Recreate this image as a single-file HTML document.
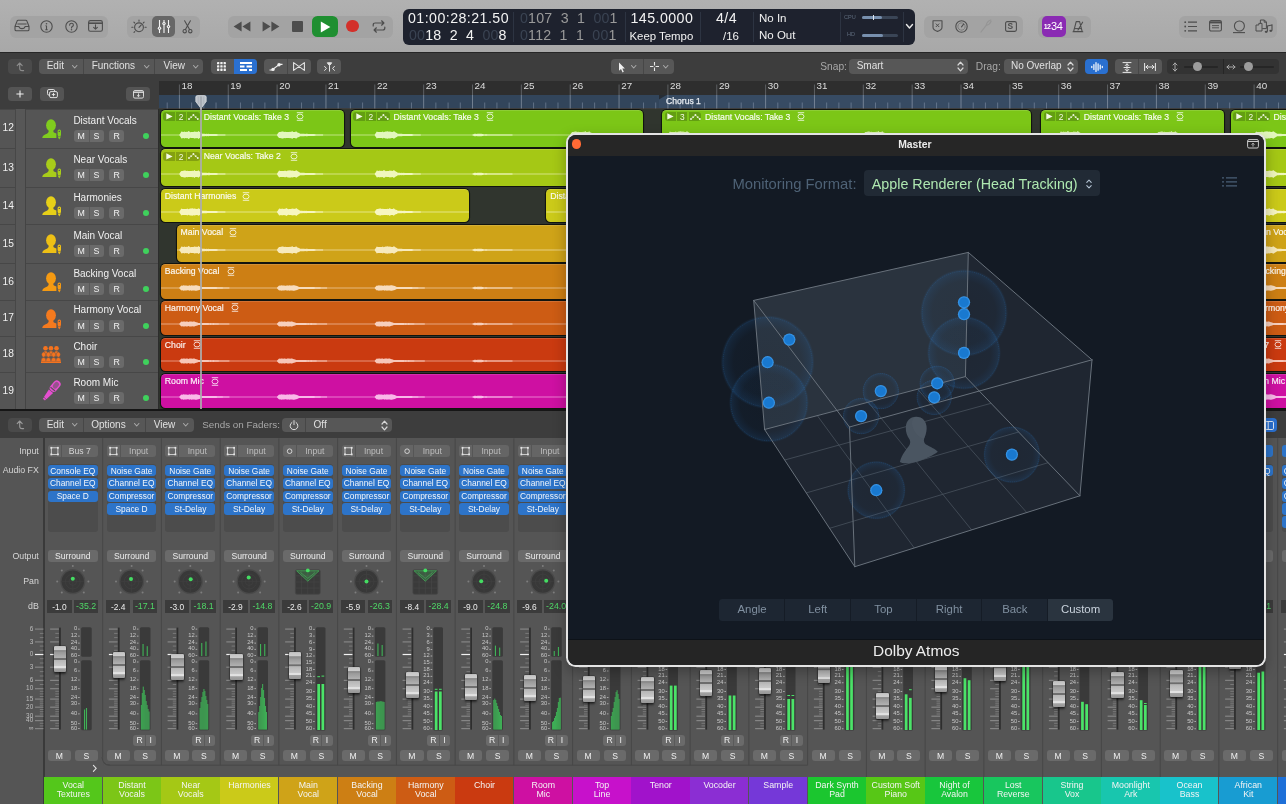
<!DOCTYPE html>
<html lang="en"><head><meta charset="utf-8"><title>Logic Pro - Dolby Atmos</title>
<style>
html,body{margin:0;padding:0;background:#555;}
body{width:1286px;height:804px;overflow:hidden;font-family:"Liberation Sans",sans-serif;color:#e6e6e6;}
#app{position:relative;width:1286px;height:804px;overflow:hidden;background:#555;}
.abs,.abs *{position:absolute;box-sizing:border-box;}
.abs{left:0;top:0;}
svg{position:absolute;overflow:visible;}
.t{white-space:nowrap;line-height:1;}
/* top bar */
#topbar{left:0;top:0;width:1286px;height:52px;background:linear-gradient(#b1b1b1,#a8a8a8);}
.grp{background:#a1a1a1;border-radius:6px;height:22px;top:15px;}
#lcd{left:403px;top:9px;width:512px;height:35.5px;background:#1e222e;border-radius:6px;color:#f2f2f2;}
#lcd .d{top:3px;width:1px;height:30px;background:#2d3442;}
#lcd .big{font-size:14.2px;letter-spacing:.45px;}
#lcd .dim{color:#3a4352;}
#lcd .gr{color:#9a9a9a;}
/* bar2 */
#bar2{left:0;top:52px;width:1286px;height:29px;background:#3d3d3d;border-top:1px solid #262626;}
.btn{background:#555;border-radius:4px;height:15.5px;color:#e0e0e0;font-size:10.2px;}
.btn .t{top:2.6px;}
.chev{width:6px;height:4px;}
.abs .t span{position:static;}
#app{will-change:transform;}
.kn{width:12.4px;height:26.3px;border-radius:1.2px;background:linear-gradient(#b4b4b4 0,#c6c6c6 3%,#cdcdcd 15%,#8f8f8f 17%,#8f8f8f 23%,#9a9a9a 25%,#b0b0b0 45%,#6e6e6e 47%,#6e6e6e 52%,#b6b6b6 54%,#cacaca 77%,#e2e2e2 79%,#e2e2e2 85%,#a4a4a4 87%,#969696 100%);box-shadow:0 1.5px 2.5px rgba(0,0,0,.55),0 0 0 .5px rgba(40,40,40,.6);}
.ml{width:20px;text-align:right;font-size:5.8px;color:#c8c8c8;}
.fx{width:49.8px;height:11.4px;background:#2d74c9;border-radius:3px;}
.fx .t{left:0;width:49.8px;text-align:center;top:1.6px;font-size:8.4px;color:#f2f6fb;}
.fx.ou{height:12.2px;background:#6a6a6a;}
.fx.ou .t{top:1.9px;font-size:8.6px;color:#ececec;}
.db{top:599.8px;width:24.5px;height:13.2px;background:#3b3b3b;}
.db .t{left:0;width:24.5px;text-align:center;top:2.9px;font-size:8.4px;color:#ececec;}
.db.g .t{color:#4fd867;font-size:8.8px;top:2.7px;letter-spacing:0;}

</style></head>
<body>
<div id="app">
<div class="abs" id="topbar">
<div class="grp" style="left:9.5px;top:15.5px;width:98.5px;height:22px;top:15.5px;background:#a3a3a3;"></div>
<svg style="left:14px;top:19px;" width="16" height="13" viewBox="0 0 16 13"><path d="M1 7.5 L3 2.2 Q3.3 1.2 4.3 1.2 H11.7 Q12.7 1.2 13 2.2 L15 7.5 V10.5 Q15 11.8 13.7 11.8 H2.3 Q1 11.8 1 10.5 Z M1 7.5 H5 Q5.3 9.6 8 9.6 Q10.7 9.6 11 7.5 H15 M3.4 5 H12.6" fill="none" stroke="#4d4d4d" stroke-width="1.1" stroke-linejoin="round"/></svg>
<svg style="left:40px;top:19.5px;" width="13" height="13" viewBox="0 0 13 13"><circle cx="6.5" cy="6.5" r="5.7" fill="none" stroke="#4d4d4d" stroke-width="1.1"/><path d="M6.5 5.8 V9.6 M5.3 9.7 H7.7 M5.5 5.8 H6.5" stroke="#4d4d4d" stroke-width="1.1" fill="none"/><circle cx="6.5" cy="3.7" r=".8" fill="#4d4d4d"/></svg>
<svg style="left:64.5px;top:19.5px;" width="13" height="13" viewBox="0 0 13 13"><circle cx="6.5" cy="6.5" r="5.7" fill="none" stroke="#4d4d4d" stroke-width="1.1"/><path d="M4.6 5.1 Q4.7 3.3 6.5 3.3 Q8.4 3.3 8.4 4.9 Q8.4 5.9 7.3 6.5 Q6.5 7 6.5 8" stroke="#4d4d4d" stroke-width="1.1" fill="none" stroke-linecap="round"/><circle cx="6.5" cy="9.8" r=".75" fill="#4d4d4d"/></svg>
<svg style="left:88px;top:20px;" width="15" height="12" viewBox="0 0 15 12"><rect x=".6" y=".6" width="13.8" height="10.6" rx="1.8" fill="none" stroke="#4d4d4d" stroke-width="1.1"/><path d="M.6 3.2 H14.4" stroke="#4d4d4d" stroke-width="1.6"/><path d="M7.5 4.8 V9 M5.6 7.3 L7.5 9.2 L9.4 7.3" stroke="#4d4d4d" stroke-width="1.1" fill="none" stroke-linecap="round" stroke-linejoin="round"/></svg>
<div class="grp" style="left:126.5px;top:15.5px;width:73.5px;height:22px;top:15.5px;background:#a3a3a3;"></div>
<svg style="left:131px;top:18.5px;" width="16" height="16" viewBox="0 0 16 16"><circle cx="8" cy="8.3" r="4.4" fill="none" stroke="#4d4d4d" stroke-width="1.1"/><path d="M8 8.3 L10.3 5.8" stroke="#4d4d4d" stroke-width="1.1" stroke-linecap="round"/><path d="M8 1 V2.2 M2.9 3.2 L3.7 4 M13.1 3.2 L12.3 4 M.8 8.3 H2 M14 8.3 H15.2 M3 13.4 L3.8 12.6" stroke="#4d4d4d" stroke-width="1.1" stroke-linecap="round"/></svg>
<div class="" style="left:152px;top:16px;width:23px;height:21px;background:#676767;border-radius:5px;"></div>
<svg style="left:156.5px;top:19px;" width="14" height="15" viewBox="0 0 14 15"><path d="M2.5 1 V14 M7 1 V14 M11.5 1 V14" stroke="#f4f4f4" stroke-width="1.1"/><circle cx="2.5" cy="9.2" r="1.7" fill="#f4f4f4"/><circle cx="7" cy="4.6" r="1.7" fill="#f4f4f4"/><circle cx="11.5" cy="7.6" r="1.7" fill="#f4f4f4"/><circle cx="2.5" cy="9.2" r=".6" fill="#676767"/><circle cx="7" cy="4.6" r=".6" fill="#676767"/><circle cx="11.5" cy="7.6" r=".6" fill="#676767"/></svg>
<svg style="left:182px;top:19.5px;" width="11" height="14" viewBox="0 0 11 14"><path d="M2.6 .8 L7.6 9.6 M8.4 .8 L3.4 9.6" stroke="#4d4d4d" stroke-width="1.1" stroke-linecap="round"/><circle cx="2.7" cy="11.2" r="1.7" fill="none" stroke="#4d4d4d" stroke-width="1.1"/><circle cx="8.3" cy="11.2" r="1.7" fill="none" stroke="#4d4d4d" stroke-width="1.1"/></svg>
<div class="grp" style="left:228px;top:15.5px;width:165px;height:22px;top:15.5px;background:#a3a3a3;"></div>
<svg style="left:232.5px;top:21px;" width="18" height="11" viewBox="0 0 18 11"><path d="M8.6 .6 V10.4 L.6 5.5 Z M17.4 .6 V10.4 L9.4 5.5 Z" fill="#4d4d4d"/></svg>
<svg style="left:261.5px;top:21px;" width="18" height="11" viewBox="0 0 18 11"><path d="M.6 .6 V10.4 L8.6 5.5 Z M9.4 .6 V10.4 L17.4 5.5 Z" fill="#4d4d4d"/></svg>
<div class="" style="left:291.5px;top:21px;width:11px;height:11px;background:#4d4d4d;border-radius:1px;"></div>
<div class="" style="left:311.5px;top:15.7px;width:26.5px;height:21.3px;background:#1f8f31;border-radius:5.5px;"></div>
<svg style="left:320px;top:20.5px;" width="11" height="12" viewBox="0 0 11 12"><path d="M.8 .6 V11.4 L10.4 6 Z" fill="#fff"/></svg>
<div class="" style="left:346px;top:19.8px;width:12.6px;height:12.6px;background:#d3302a;border-radius:7px;"></div>
<svg style="left:372px;top:20px;" width="14" height="13" viewBox="0 0 14 13"><path d="M1.2 6 V5 Q1.2 3 3.2 3 H11.5 M9.6 .8 L11.9 3 L9.6 5.2 M12.8 7 V8 Q12.8 10 10.8 10 H2.5 M4.4 7.8 L2.1 10 L4.4 12.2" fill="none" stroke="#4d4d4d" stroke-width="1.2" stroke-linecap="round" stroke-linejoin="round"/></svg>
<div id="lcd">
<div class="d" style="left:110px"></div>
<div class="d" style="left:222px"></div>
<div class="d" style="left:297px"></div>
<div class="d" style="left:350px"></div>
<div class="d" style="left:437px"></div>
<div class="d" style="left:500px"></div>
<span class="t big" style="left:5px;top:1.7px;">01:00:28:21.50</span><span class="t big" style="left:6px;top:19px;letter-spacing:.2px;"><span class="dim">00</span>18&nbsp;&nbsp;2&nbsp;&nbsp;4&nbsp;&nbsp;<span class="dim">00</span>8</span><span class="t big gr" style="left:117px;top:1.7px;letter-spacing:.2px;"><span class="dim">0</span>107&nbsp;&nbsp;3&nbsp;&nbsp;1&nbsp;&nbsp;<span class="dim">00</span>1</span><span class="t big gr" style="left:117px;top:19px;letter-spacing:.2px;"><span class="dim">0</span>112&nbsp;&nbsp;1&nbsp;&nbsp;1&nbsp;&nbsp;<span class="dim">00</span>1</span><span class="t big" style="left:227.5px;top:1.7px;">145.0000</span><span class="t " style="left:226.5px;top:21.7px;font-size:11.4px;">Keep Tempo</span><span class="t big" style="left:313px;top:1.7px;">4/4</span><span class="t " style="left:320px;top:21.5px;font-size:11.5px;">/16</span><span class="t " style="left:356px;top:4.2px;font-size:11.5px;">No In</span><span class="t " style="left:356px;top:21.2px;font-size:11.5px;">No Out</span><span class="t " style="left:441px;top:5.5px;font-size:5.6px;color:#5d6a7c;">CPU</span><span class="t " style="left:444px;top:23px;font-size:5.6px;color:#5d6a7c;">HD</span><div class="" style="left:459px;top:6.5px;width:36px;height:3px;background:#3a4556;border-radius:1.5px;"></div><div class="" style="left:459px;top:6.5px;width:20px;height:3px;background:#7890ae;border-radius:1.5px;"></div><div class="" style="left:469.5px;top:5.5px;width:1.4px;height:5px;background:#dfe6ee;border-radius:0px;"></div><div class="" style="left:459px;top:24.5px;width:36px;height:3px;background:#3a4556;border-radius:1.5px;"></div><div class="" style="left:459px;top:24.5px;width:21px;height:3px;background:#7890ae;border-radius:1.5px;"></div><svg style="left:503px;top:15px;" width="7" height="5" viewBox="0 0 7 5"><path d="M0.5 0.5 L3.5 4 L6.5 0.5" fill="none" stroke="#e8e8e8" stroke-width="1.4" stroke-linecap="round" stroke-linejoin="round"/></svg>
</div>
<div class="grp" style="left:924px;top:15.5px;width:98.5px;height:22px;top:15.5px;background:#a3a3a3;"></div>
<svg style="left:931.5px;top:20px;" width="11" height="12" viewBox="0 0 11 12"><path d="M1 .8 H10 V7.2 Q10 10 5.5 11.4 Q1 10 1 7.2 Z" fill="none" stroke="#4d4d4d" stroke-width="1.1" stroke-linejoin="round"/><path d="M3.8 3.6 L7.2 7 M7.2 3.6 L3.8 7" stroke="#4d4d4d" stroke-width="1"/></svg>
<svg style="left:954.5px;top:20px;" width="13" height="13" viewBox="0 0 13 13"><circle cx="6.5" cy="6.5" r="5.7" fill="none" stroke="#4d4d4d" stroke-width="1.1"/><circle cx="6.5" cy="6.5" r="3.6" fill="none" stroke="#4d4d4d" stroke-width=".8" stroke-dasharray="1.2 1"/><path d="M6.5 6.8 L8.6 4.2" stroke="#4d4d4d" stroke-width="1.1" stroke-linecap="round"/></svg>
<svg style="left:979.5px;top:19px;" width="12" height="14" viewBox="0 0 12 14"><path d="M1 13 L6.2 6.4 M6.2 6.4 Q6.6 2.6 10.8 1 M6.2 6.4 Q9.8 5.8 11 2.4" fill="none" stroke="#959595" stroke-width="1.2" stroke-linecap="round"/></svg>
<svg style="left:1004.5px;top:20.5px;" width="12" height="11" viewBox="0 0 12 11"><rect x=".6" y=".6" width="10.8" height="9.8" rx="1.6" fill="none" stroke="#4d4d4d" stroke-width="1.1"/></svg>
<span class="t " style="left:1007.6px;top:22.2px;font-size:8.4px;color:#4d4d4d;font-weight:700;">S</span>
<div class="grp" style="left:1038px;top:15.5px;width:53px;height:22px;top:15.5px;background:#a3a3a3;"></div>
<div class="" style="left:1042px;top:16px;width:23.5px;height:21px;background:#8a2bb3;border-radius:5px;"></div>
<span class="t " style="left:1043.8px;top:23px;font-size:7px;color:#fff;font-weight:700;">1</span>
<span class="t " style="left:1047px;top:23px;font-size:7px;color:#fff;font-weight:700;">2</span>
<span class="t " style="left:1051px;top:21px;font-size:11px;color:#fff;letter-spacing:-.3px;">34</span>
<svg style="left:1072px;top:19.5px;" width="13" height="14" viewBox="0 0 13 14"><path d="M4.2 1.6 H7.6 L10.2 11.6 H1.6 Z M1 11.8 H10.8 M6 10 L10.6 2.2" fill="none" stroke="#4d4d4d" stroke-width="1.1" stroke-linejoin="round" stroke-linecap="round"/><path d="M3 8.6 H9" stroke="#4d4d4d" stroke-width="1"/></svg>
<div class="grp" style="left:1178.5px;top:15.5px;width:98.5px;height:22px;top:15.5px;background:#a3a3a3;"></div>
<svg style="left:1184px;top:21px;" width="14" height="11" viewBox="0 0 14 11"><path d="M4 1.2 H13 M4 5.5 H13 M4 9.8 H13" stroke="#4d4d4d" stroke-width="1.2"/><circle cx="1.2" cy="1.2" r=".9" fill="#4d4d4d"/><circle cx="1.2" cy="5.5" r=".9" fill="#4d4d4d"/><circle cx="1.2" cy="9.8" r=".9" fill="#4d4d4d"/></svg>
<svg style="left:1209px;top:20px;" width="13" height="12" viewBox="0 0 13 12"><rect x=".6" y=".6" width="11.8" height="10.4" rx="1.6" fill="none" stroke="#4d4d4d" stroke-width="1.1"/><path d="M.6 2.4 H12.4" stroke="#4d4d4d" stroke-width="2"/><path d="M3 5.6 H10 M3 7.8 H10" stroke="#4d4d4d" stroke-width=".9"/></svg>
<svg style="left:1232px;top:19.5px;" width="14" height="14" viewBox="0 0 14 14"><circle cx="7.4" cy="6" r="5" fill="none" stroke="#4d4d4d" stroke-width="1.1"/><path d="M1 12.6 H13" stroke="#4d4d4d" stroke-width="1.1"/></svg>
<svg style="left:1255px;top:19px;" width="19" height="15" viewBox="0 0 19 15"><path d="M1 6 H3.8 V4.4 H7 V12 H1 Z M5.4 4.2 V1 H9.4 L11.4 3 V9.6 H7.2 M9.2 1 V3.2 H11.4" fill="none" stroke="#4d4d4d" stroke-width="1" stroke-linejoin="round"/><path d="M12.4 12.6 V7 L17 6 V11.6" fill="none" stroke="#4d4d4d" stroke-width="1.1"/><ellipse cx="11.2" cy="12.8" rx="1.5" ry="1.1" fill="#4d4d4d"/><ellipse cx="15.8" cy="11.8" rx="1.5" ry="1.1" fill="#4d4d4d"/></svg>
</div>
<div class="abs" id="bar2">
<div class="btn" style="left:8.2px;top:6.0px;width:23.6px;height:14.8px;background:#4a4a4a;border-radius:4px;height:14.8px;"><svg style="left:7.6px;top:3px;" width="9" height="10" viewBox="0 0 9 10"><path d="M1.2 3.6 L3.7 1 L6.2 3.6 M3.7 1.2 V6.2 Q3.7 8.6 6.1 8.6 H7.6" fill="none" stroke="#8c8c8c" stroke-width="1.1" stroke-linecap="round" stroke-linejoin="round"/></svg></div>
<div class="btn" style="left:39.2px;top:6.0px;width:163.5px;height:14.8px;background:#575757;border-radius:4px;height:14.8px;"><span class="t " style="left:7.5px;top:2.4px;font-size:10px;">Edit</span><svg style="left:33px;top:6px;" width="5.4" height="4" viewBox="0 0 5.4 4"><path d="M0.5 0.5 L2.7 3 L4.9 0.5" fill="none" stroke="#a8a8a8" stroke-width="1.1" stroke-linecap="round" stroke-linejoin="round"/></svg><div class="" style="left:44.3px;top:0px;width:1px;height:14.8px;background:#474747;"></div><span class="t " style="left:52.5px;top:2.4px;font-size:10px;">Functions</span><svg style="left:104.5px;top:6px;" width="5.4" height="4" viewBox="0 0 5.4 4"><path d="M0.5 0.5 L2.7 3 L4.9 0.5" fill="none" stroke="#a8a8a8" stroke-width="1.1" stroke-linecap="round" stroke-linejoin="round"/></svg><div class="" style="left:115.3px;top:0px;width:1px;height:14.8px;background:#474747;"></div><span class="t " style="left:124.3px;top:2.4px;font-size:10px;">View</span><svg style="left:153.5px;top:6px;" width="5.4" height="4" viewBox="0 0 5.4 4"><path d="M0.5 0.5 L2.7 3 L4.9 0.5" fill="none" stroke="#a8a8a8" stroke-width="1.1" stroke-linecap="round" stroke-linejoin="round"/></svg></div>
<div class="btn" style="left:210.5px;top:6.0px;width:46.5px;height:14.8px;background:#575757;border-radius:4px;height:14.8px;"></div>
<div class="" style="left:233.8px;top:6.0px;width:23.2px;height:14.8px;background:#2a70d0;border-radius:0px;border-radius:0 4px 4px 0;"></div>
<svg style="left:217.3px;top:9.3px;" width="9" height="9" viewBox="0 0 9 9"><rect x="0" y="0" width="2.3" height="2.3" rx=".4" fill="#f0f0f0"/><rect x="0" y="3.3" width="2.3" height="2.3" rx=".4" fill="#f0f0f0"/><rect x="0" y="6.6" width="2.3" height="2.3" rx=".4" fill="#f0f0f0"/><rect x="3.3" y="0" width="2.3" height="2.3" rx=".4" fill="#f0f0f0"/><rect x="3.3" y="3.3" width="2.3" height="2.3" rx=".4" fill="#f0f0f0"/><rect x="3.3" y="6.6" width="2.3" height="2.3" rx=".4" fill="#f0f0f0"/><rect x="6.6" y="0" width="2.3" height="2.3" rx=".4" fill="#f0f0f0"/><rect x="6.6" y="3.3" width="2.3" height="2.3" rx=".4" fill="#f0f0f0"/><rect x="6.6" y="6.6" width="2.3" height="2.3" rx=".4" fill="#f0f0f0"/></svg>
<svg style="left:239.5px;top:9.4px;" width="12" height="9" viewBox="0 0 12 9"><path d="M0 1.1 H12 M0 4.5 H4.5 M6.5 4.5 H12 M0 7.9 H7 M9 7.9 H12" stroke="#fff" stroke-width="2"/></svg>
<div class="btn" style="left:264px;top:6.0px;width:46.5px;height:14.8px;background:#575757;border-radius:4px;height:14.8px;"></div>
<div class="" style="left:286.8px;top:6.0px;width:1px;height:14.8px;background:#474747;"></div>
<svg style="left:268.5px;top:9.0px;" width="14" height="10" viewBox="0 0 14 10"><path d="M0.5 8 H3 L10.5 2.4 H13.5" fill="none" stroke="#f0f0f0" stroke-width="1.1"/><circle cx="4" cy="7.4" r="1.7" fill="#f0f0f0"/><circle cx="10" cy="2.8" r="1.7" fill="#f0f0f0"/></svg>
<svg style="left:292.5px;top:9.3px;" width="12" height="9" viewBox="0 0 12 9"><path d="M.6 .6 L11.4 8.4 V.6 L.6 8.4 Z" fill="none" stroke="#e4e4e4" stroke-width="1.1" stroke-linejoin="round"/></svg>
<div class="btn" style="left:317px;top:6.0px;width:24.3px;height:14.8px;background:#575757;border-radius:4px;height:14.8px;"></div>
<svg style="left:323.5px;top:9.0px;" width="11" height="10" viewBox="0 0 11 10"><path d="M5.5 3.4 V9.6 M3.3 .8 H7.7 L5.5 3.6 Z" fill="#e4e4e4" stroke="#e4e4e4" stroke-width="1" stroke-linejoin="round"/><path d="M.6 4.4 L2.4 6.4 L.6 8.4 M10.4 4.4 L8.6 6.4 L10.4 8.4" fill="none" stroke="#e4e4e4" stroke-width="1" stroke-linecap="round" stroke-linejoin="round"/></svg>
<div class="btn" style="left:611.2px;top:6.0px;width:63px;height:14.8px;background:#575757;border-radius:4px;height:14.8px;"></div>
<div class="" style="left:642.6px;top:6.0px;width:1px;height:14.8px;background:#474747;"></div>
<svg style="left:618px;top:8.6px;" width="8" height="11" viewBox="0 0 8 11"><path d="M1 .6 V8.8 L3 7 L4.6 10.4 L5.8 9.8 L4.3 6.6 H6.9 Z" fill="#f0f0f0"/></svg>
<svg style="left:630.5px;top:12.2px;" width="5.4" height="4" viewBox="0 0 5.4 4"><path d="M0.5 0.5 L2.7 3 L4.9 0.5" fill="none" stroke="#a8a8a8" stroke-width="1.1" stroke-linecap="round" stroke-linejoin="round"/></svg>
<svg style="left:650px;top:9.2px;" width="9" height="9" viewBox="0 0 9 9"><path d="M4.5 0 V3.4 M4.5 5.6 V9 M0 4.5 H3.4 M5.6 4.5 H9" stroke="#e8e8e8" stroke-width="1.1"/></svg>
<svg style="left:663px;top:12.2px;" width="5.4" height="4" viewBox="0 0 5.4 4"><path d="M0.5 0.5 L2.7 3 L4.9 0.5" fill="none" stroke="#a8a8a8" stroke-width="1.1" stroke-linecap="round" stroke-linejoin="round"/></svg>
<span class="t " style="left:820.3px;top:8.6px;font-size:10.2px;color:#a8a8a8;">Snap:</span>
<div class="btn" style="left:849.2px;top:6.0px;width:118.8px;height:14.8px;background:#575757;border-radius:4px;height:14.8px;"><span class="t " style="left:7.5px;top:2.4px;font-size:10px;">Smart</span><svg style="left:107.5px;top:2.3px;" width="7" height="11" viewBox="0 0 7 11"><path d="M1 4 L3.5 1.2 L6 4 M1 7 L3.5 9.8 L6 7" fill="none" stroke="#d8d8d8" stroke-width="1.2" stroke-linecap="round" stroke-linejoin="round"/></svg></div>
<span class="t " style="left:975.8px;top:8.6px;font-size:10.2px;color:#a8a8a8;">Drag:</span>
<div class="btn" style="left:1003.5px;top:6.0px;width:74.5px;height:14.8px;background:#575757;border-radius:4px;height:14.8px;"><span class="t " style="left:7.5px;top:2.4px;font-size:10px;">No Overlap</span><svg style="left:63.5px;top:2.3px;" width="7" height="11" viewBox="0 0 7 11"><path d="M1 4 L3.5 1.2 L6 4 M1 7 L3.5 9.8 L6 7" fill="none" stroke="#d8d8d8" stroke-width="1.2" stroke-linecap="round" stroke-linejoin="round"/></svg></div>
<div class="btn" style="left:1085px;top:6.0px;width:23px;height:14.8px;background:#2a70d0;border-radius:4px;height:14.8px;"></div>
<svg style="left:1090.5px;top:8.7px;" width="12" height="10" viewBox="0 0 12 10"><path d="M.8 4.4 V5.6 M2.9 2.6 V7.4 M5 .6 V9.4 M7.1 1.8 V8.2 M9.2 3 V7 M11.3 4.4 V5.6" stroke="#fff" stroke-width="1.2" stroke-linecap="round"/></svg>
<div class="btn" style="left:1115px;top:6.0px;width:46.7px;height:14.8px;background:#575757;border-radius:4px;height:14.8px;"></div>
<div class="" style="left:1138.2px;top:6.0px;width:1px;height:14.8px;background:#474747;"></div>
<svg style="left:1121.5px;top:8.5px;" width="10" height="11" viewBox="0 0 10 11"><path d="M1 .6 H9 M1 10.4 H9 M5 2 V9 M3.2 3.6 L5 1.8 L6.8 3.6 M3.2 7.4 L5 9.2 L6.8 7.4 M2 5.5 H8" fill="none" stroke="#e8e8e8" stroke-width="1" stroke-linecap="round" stroke-linejoin="round"/></svg>
<svg style="left:1144px;top:9.5px;" width="12" height="8" viewBox="0 0 12 8"><path d="M.6 .4 V7.6 M11.4 .4 V7.6 M2 4 H10 M3.8 2.2 L2 4 L3.8 5.8 M8.2 2.2 L10 4 L8.2 5.8" fill="none" stroke="#e8e8e8" stroke-width="1" stroke-linecap="round" stroke-linejoin="round"/></svg>
<div class="btn" style="left:1167.3px;top:6.0px;width:111.4px;height:14.8px;background:#333;border-radius:4px;height:14.8px;"></div>
<div class="" style="left:1222.7px;top:6.0px;width:1px;height:14.8px;background:#262626;"></div>
<svg style="left:1172px;top:9.0px;" width="6" height="10" viewBox="0 0 6 10"><path d="M3 1 V9 M1 3 L3 1 L5 3 M1 7 L3 9 L5 7" fill="none" stroke="#a8a8a8" stroke-width="1" stroke-linecap="round" stroke-linejoin="round"/></svg>
<div class="" style="left:1183.6px;top:12.8px;width:34.5px;height:2px;background:#262626;border-radius:1px;"></div>
<div class="" style="left:1193px;top:9.2px;width:9.2px;height:9.2px;background:#9c9c9c;border-radius:5px;"></div>
<svg style="left:1226px;top:11.0px;" width="10" height="6" viewBox="0 0 10 6"><path d="M1 3 H9 M3 1 L1 3 L3 5 M7 1 L9 3 L7 5" fill="none" stroke="#a8a8a8" stroke-width="1" stroke-linecap="round" stroke-linejoin="round"/></svg>
<div class="" style="left:1239.5px;top:12.8px;width:34.5px;height:2px;background:#262626;border-radius:1px;"></div>
<div class="" style="left:1244px;top:9.2px;width:9.2px;height:9.2px;background:#9c9c9c;border-radius:5px;"></div>
</div>
<svg width="0" height="0" style="left:0;top:0"><defs><path id="wv0" d="M0 -0.4 L1 -1.8 L2 -3.5 L3 -3.3 L4 -3.0 L5 -3.5 L6 -2.9 L7 -3.2 L8 -3.1 L9 -3.9 L10 -3.4 L11 -2.7 L12 -3.0 L13 -2.9 L14 -2.9 L15 -3.4 L16 -3.3 L17 -3.3 L18 -3.1 L19 -3.9 L20 -3.3 L21 -2.6 L22 -1.9 L23 -1.2 L24 -1.2 L25 -1.2 L26 -1.1 L27 -1.2 L28 -1.1 L29 -1.2 L30 -1.1 L31 -1.1 L32 -1.1 L33 -0.9 L34 -0.9 L35 -1.0 L36 -0.9 L37 -1.0 L38 -0.7 L39 -0.6 L40 -0.4 L41 -0.4 L42 -0.4 L43 -0.4 L44 -0.4 L45 -0.4 L46 -0.4 L46 0.4 L45 0.4 L44 0.4 L43 0.4 L42 0.4 L41 0.4 L40 0.4 L39 0.6 L38 0.7 L37 1.0 L36 0.9 L35 1.0 L34 0.9 L33 0.9 L32 1.1 L31 1.1 L30 1.1 L29 1.2 L28 1.1 L27 1.2 L26 1.1 L25 1.2 L24 1.2 L23 1.2 L22 1.9 L21 2.6 L20 3.3 L19 3.9 L18 3.1 L17 3.3 L16 3.3 L15 3.4 L14 2.9 L13 2.9 L12 3.0 L11 2.7 L10 3.4 L9 3.9 L8 3.1 L7 3.2 L6 2.9 L5 3.5 L4 3.0 L3 3.3 L2 3.5 L1 1.8 L0 0.4 Z"/><path id="wv1" d="M0 -0.4 L1 -1.9 L2 -3.1 L3 -2.9 L4 -3.3 L5 -3.4 L6 -3.4 L7 -3.0 L8 -3.3 L9 -3.1 L10 -3.1 L11 -3.1 L12 -3.1 L13 -3.2 L14 -3.0 L15 -3.9 L16 -2.9 L17 -2.9 L18 -3.1 L19 -3.7 L20 -2.7 L21 -2.3 L22 -2.0 L23 -1.3 L24 -1.2 L25 -1.2 L26 -1.2 L27 -1.2 L28 -1.1 L29 -1.2 L30 -1.2 L31 -1.1 L32 -1.1 L33 -1.0 L34 -1.0 L35 -1.0 L36 -1.0 L37 -0.9 L38 -0.7 L39 -0.6 L40 -0.4 L41 -0.4 L42 -0.4 L43 -0.4 L44 -0.4 L45 -0.4 L46 -0.4 L46 0.4 L45 0.4 L44 0.4 L43 0.4 L42 0.4 L41 0.4 L40 0.4 L39 0.6 L38 0.7 L37 0.9 L36 1.0 L35 1.0 L34 1.0 L33 1.0 L32 1.1 L31 1.1 L30 1.2 L29 1.2 L28 1.1 L27 1.2 L26 1.2 L25 1.2 L24 1.2 L23 1.3 L22 2.0 L21 2.3 L20 2.7 L19 3.7 L18 3.1 L17 2.9 L16 2.9 L15 3.9 L14 3.0 L13 3.2 L12 3.1 L11 3.1 L10 3.1 L9 3.1 L8 3.3 L7 3.0 L6 3.4 L5 3.4 L4 3.3 L3 2.9 L2 3.1 L1 1.9 L0 0.4 Z"/><path id="wv2" d="M0 -0.4 L1 -1.9 L2 -3.6 L3 -2.9 L4 -2.9 L5 -3.1 L6 -3.1 L7 -3.1 L8 -3.5 L9 -2.8 L10 -3.2 L11 -3.6 L12 -3.6 L13 -3.7 L14 -3.3 L15 -3.4 L16 -3.2 L17 -3.1 L18 -2.9 L19 -3.8 L20 -3.2 L21 -2.6 L22 -1.9 L23 -1.3 L24 -1.3 L25 -1.2 L26 -1.2 L27 -1.2 L28 -1.1 L29 -1.1 L30 -1.1 L31 -1.0 L32 -1.0 L33 -1.0 L34 -1.0 L35 -0.9 L36 -0.9 L37 -0.9 L38 -0.7 L39 -0.6 L40 -0.4 L41 -0.4 L42 -0.4 L43 -0.4 L44 -0.4 L45 -0.4 L46 -0.4 L46 0.4 L45 0.4 L44 0.4 L43 0.4 L42 0.4 L41 0.4 L40 0.4 L39 0.6 L38 0.7 L37 0.9 L36 0.9 L35 0.9 L34 1.0 L33 1.0 L32 1.0 L31 1.0 L30 1.1 L29 1.1 L28 1.1 L27 1.2 L26 1.2 L25 1.2 L24 1.3 L23 1.3 L22 1.9 L21 2.6 L20 3.2 L19 3.8 L18 2.9 L17 3.1 L16 3.2 L15 3.4 L14 3.3 L13 3.7 L12 3.6 L11 3.6 L10 3.2 L9 2.8 L8 3.5 L7 3.1 L6 3.1 L5 3.1 L4 2.9 L3 2.9 L2 3.6 L1 1.9 L0 0.4 Z"/><path id="wv3" d="M0 -0.4 L1 -0.8 L2 -1.3 L3 -1.3 L4 -1.1 L5 -1.3 L6 -1.2 L7 -1.2 L8 -1.3 L9 -1.2 L10 -0.9 L11 -0.8 L12 -0.6 L13 -0.7 L14 -0.7 L15 -0.6 L16 -0.6 L17 -0.6 L18 -0.6 L19 -0.6 L20 -0.6 L21 -0.6 L22 -0.6 L23 -0.6 L24 -0.6 L25 -0.6 L26 -0.6 L27 -0.6 L28 -0.6 L29 -0.6 L30 -0.6 L31 -0.6 L32 -0.6 L33 -0.6 L34 -0.6 L35 -0.5 L36 -0.4 L37 -0.4 L38 -0.4 L39 -0.4 L40 -0.4 L40 0.4 L39 0.4 L38 0.4 L37 0.4 L36 0.4 L35 0.5 L34 0.6 L33 0.6 L32 0.6 L31 0.6 L30 0.6 L29 0.6 L28 0.6 L27 0.6 L26 0.6 L25 0.6 L24 0.6 L23 0.6 L22 0.6 L21 0.6 L20 0.6 L19 0.6 L18 0.6 L17 0.6 L16 0.6 L15 0.6 L14 0.7 L13 0.7 L12 0.6 L11 0.8 L10 0.9 L9 1.2 L8 1.3 L7 1.2 L6 1.2 L5 1.3 L4 1.1 L3 1.3 L2 1.3 L1 0.8 L0 0.4 Z"/><path id="wv4" d="M0 -0.4 L1 -1.6 L2 -2.5 L3 -2.3 L4 -2.7 L5 -2.6 L6 -2.6 L7 -2.6 L8 -2.3 L9 -2.3 L10 -2.7 L11 -2.3 L12 -2.7 L13 -2.4 L14 -2.6 L15 -2.6 L16 -2.7 L17 -2.8 L18 -2.6 L19 -2.2 L20 -2.1 L21 -1.5 L22 -1.0 L23 -1.1 L24 -1.1 L25 -1.1 L26 -1.1 L27 -1.0 L28 -1.0 L29 -1.0 L30 -0.9 L31 -1.0 L32 -0.9 L33 -0.9 L34 -0.9 L35 -0.9 L36 -0.9 L37 -0.9 L38 -0.8 L39 -0.8 L40 -0.8 L41 -0.8 L42 -0.8 L43 -0.7 L44 -0.5 L45 -0.4 L46 -0.4 L47 -0.4 L48 -0.4 L49 -0.4 L50 -0.4 L50 0.4 L49 0.4 L48 0.4 L47 0.4 L46 0.4 L45 0.4 L44 0.5 L43 0.7 L42 0.8 L41 0.8 L40 0.8 L39 0.8 L38 0.8 L37 0.9 L36 0.9 L35 0.9 L34 0.9 L33 0.9 L32 0.9 L31 1.0 L30 0.9 L29 1.0 L28 1.0 L27 1.0 L26 1.1 L25 1.1 L24 1.1 L23 1.1 L22 1.0 L21 1.5 L20 2.1 L19 2.2 L18 2.6 L17 2.8 L16 2.7 L15 2.6 L14 2.6 L13 2.4 L12 2.7 L11 2.3 L10 2.7 L9 2.3 L8 2.3 L7 2.6 L6 2.6 L5 2.6 L4 2.7 L3 2.3 L2 2.5 L1 1.6 L0 0.4 Z"/><path id="wv5" d="M0 -0.4 L1 -1.4 L2 -2.4 L3 -2.2 L4 -2.4 L5 -2.5 L6 -2.2 L7 -2.5 L8 -2.4 L9 -2.1 L10 -2.6 L11 -2.6 L12 -2.5 L13 -2.2 L14 -2.6 L15 -2.6 L16 -2.1 L17 -1.8 L18 -1.4 L19 -1.0 L20 -1.1 L21 -1.0 L22 -1.0 L23 -1.0 L24 -0.9 L25 -0.9 L26 -0.9 L27 -0.9 L28 -0.9 L29 -0.9 L30 -0.8 L31 -0.9 L32 -0.8 L33 -0.8 L34 -0.9 L35 -0.8 L36 -0.8 L37 -0.8 L38 -0.8 L39 -0.7 L40 -0.6 L41 -0.5 L42 -0.4 L43 -0.4 L44 -0.4 L45 -0.4 L46 -0.4 L47 -0.4 L48 -0.4 L49 -0.4 L50 -0.4 L50 0.4 L49 0.4 L48 0.4 L47 0.4 L46 0.4 L45 0.4 L44 0.4 L43 0.4 L42 0.4 L41 0.5 L40 0.6 L39 0.7 L38 0.8 L37 0.8 L36 0.8 L35 0.8 L34 0.9 L33 0.8 L32 0.8 L31 0.9 L30 0.8 L29 0.9 L28 0.9 L27 0.9 L26 0.9 L25 0.9 L24 0.9 L23 1.0 L22 1.0 L21 1.0 L20 1.1 L19 1.0 L18 1.4 L17 1.8 L16 2.1 L15 2.6 L14 2.6 L13 2.2 L12 2.5 L11 2.6 L10 2.6 L9 2.1 L8 2.4 L7 2.5 L6 2.2 L5 2.5 L4 2.4 L3 2.2 L2 2.4 L1 1.4 L0 0.4 Z"/></defs></svg>
<div class="abs" id="rul" style="left:0;top:81px;width:1286px;height:27.5px;background:#3d3d3d;">
<div class="" style="left:8.3px;top:6.2px;width:23.4px;height:13.6px;background:#545454;border-radius:3.5px;"><svg style="left:7.7px;top:2.8px;" width="8" height="8" viewBox="0 0 8 8"><path d="M4 .4 V7.6 M.4 4 H7.6" stroke="#f0f0f0" stroke-width="1.1"/></svg></div>
<div class="" style="left:40px;top:6.2px;width:24px;height:13.6px;background:#545454;border-radius:3.5px;"><svg style="left:6.5px;top:2.2px;" width="11" height="9" viewBox="0 0 11 9"><rect x=".5" y=".5" width="7.2" height="5.6" rx="1.4" fill="none" stroke="#ededed" stroke-width=".9"/><rect x="2.6" y="2.6" width="7.8" height="6" rx="1.4" fill="#545454" stroke="#ededed" stroke-width=".9"/><path d="M6.5 3.9 V7.3 M4.8 5.6 H8.2" stroke="#ededed" stroke-width=".9"/></svg></div>
<div class="" style="left:126px;top:6.2px;width:24px;height:13.6px;background:#545454;border-radius:3.5px;"><svg style="left:6.5px;top:2.6px;" width="11" height="9" viewBox="0 0 11 9"><rect x=".5" y=".5" width="10" height="7.6" rx="1.4" fill="none" stroke="#e4e4e4" stroke-width=".9"/><path d="M.5 2.2 H10.5" stroke="#e4e4e4" stroke-width="1.3"/><path d="M5.5 3.4 V6.6 M4.1 5.3 L5.5 6.7 L6.9 5.3" fill="none" stroke="#e4e4e4" stroke-width=".9"/></svg></div>
<div class="" style="left:158.5px;top:0px;width:1127.5px;height:13.8px;background:#2e2e2e;"></div><div class="" style="left:158.5px;top:13.6px;width:1127.5px;height:13.9px;background:#32455b;"></div><div class="" style="left:659.1px;top:13.6px;width:627px;height:13.9px;background:#374b63;"></div><svg style="left:659.1px;top:13.6px;" width="8" height="5" viewBox="0 0 8 5"><path d="M0 0 H7.6 L0 4.4 Z" fill="#262d36"/></svg><svg style="left:0;top:0" width="1286" height="27.5"><rect x="178.90" y="3.5" width="1" height="10.3" fill="rgba(200,208,220,.3)"/><rect x="178.90" y="13.8" width="1" height="13.7" fill="rgba(200,208,220,.42)"/><rect x="191.11" y="21.5" width="1" height="6" fill="rgba(170,185,205,.38)"/><rect x="203.33" y="21.5" width="1" height="6" fill="rgba(170,185,205,.38)"/><rect x="215.54" y="21.5" width="1" height="6" fill="rgba(170,185,205,.38)"/><rect x="227.75" y="3.5" width="1" height="10.3" fill="rgba(200,208,220,.3)"/><rect x="227.75" y="13.8" width="1" height="13.7" fill="rgba(200,208,220,.42)"/><rect x="239.96" y="21.5" width="1" height="6" fill="rgba(170,185,205,.38)"/><rect x="252.18" y="21.5" width="1" height="6" fill="rgba(170,185,205,.38)"/><rect x="264.39" y="21.5" width="1" height="6" fill="rgba(170,185,205,.38)"/><rect x="276.60" y="3.5" width="1" height="10.3" fill="rgba(200,208,220,.3)"/><rect x="276.60" y="13.8" width="1" height="13.7" fill="rgba(200,208,220,.42)"/><rect x="288.81" y="21.5" width="1" height="6" fill="rgba(170,185,205,.38)"/><rect x="301.03" y="21.5" width="1" height="6" fill="rgba(170,185,205,.38)"/><rect x="313.24" y="21.5" width="1" height="6" fill="rgba(170,185,205,.38)"/><rect x="325.45" y="3.5" width="1" height="10.3" fill="rgba(200,208,220,.3)"/><rect x="325.45" y="13.8" width="1" height="13.7" fill="rgba(200,208,220,.42)"/><rect x="337.66" y="21.5" width="1" height="6" fill="rgba(170,185,205,.38)"/><rect x="349.88" y="21.5" width="1" height="6" fill="rgba(170,185,205,.38)"/><rect x="362.09" y="21.5" width="1" height="6" fill="rgba(170,185,205,.38)"/><rect x="374.30" y="3.5" width="1" height="10.3" fill="rgba(200,208,220,.3)"/><rect x="374.30" y="13.8" width="1" height="13.7" fill="rgba(200,208,220,.42)"/><rect x="386.51" y="21.5" width="1" height="6" fill="rgba(170,185,205,.38)"/><rect x="398.73" y="21.5" width="1" height="6" fill="rgba(170,185,205,.38)"/><rect x="410.94" y="21.5" width="1" height="6" fill="rgba(170,185,205,.38)"/><rect x="423.15" y="3.5" width="1" height="10.3" fill="rgba(200,208,220,.3)"/><rect x="423.15" y="13.8" width="1" height="13.7" fill="rgba(200,208,220,.42)"/><rect x="435.36" y="21.5" width="1" height="6" fill="rgba(170,185,205,.38)"/><rect x="447.57" y="21.5" width="1" height="6" fill="rgba(170,185,205,.38)"/><rect x="459.79" y="21.5" width="1" height="6" fill="rgba(170,185,205,.38)"/><rect x="472.00" y="3.5" width="1" height="10.3" fill="rgba(200,208,220,.3)"/><rect x="472.00" y="13.8" width="1" height="13.7" fill="rgba(200,208,220,.42)"/><rect x="484.21" y="21.5" width="1" height="6" fill="rgba(170,185,205,.38)"/><rect x="496.43" y="21.5" width="1" height="6" fill="rgba(170,185,205,.38)"/><rect x="508.64" y="21.5" width="1" height="6" fill="rgba(170,185,205,.38)"/><rect x="520.85" y="3.5" width="1" height="10.3" fill="rgba(200,208,220,.3)"/><rect x="520.85" y="13.8" width="1" height="13.7" fill="rgba(200,208,220,.42)"/><rect x="533.06" y="21.5" width="1" height="6" fill="rgba(170,185,205,.38)"/><rect x="545.27" y="21.5" width="1" height="6" fill="rgba(170,185,205,.38)"/><rect x="557.49" y="21.5" width="1" height="6" fill="rgba(170,185,205,.38)"/><rect x="569.70" y="3.5" width="1" height="10.3" fill="rgba(200,208,220,.3)"/><rect x="569.70" y="13.8" width="1" height="13.7" fill="rgba(200,208,220,.42)"/><rect x="581.91" y="21.5" width="1" height="6" fill="rgba(170,185,205,.38)"/><rect x="594.12" y="21.5" width="1" height="6" fill="rgba(170,185,205,.38)"/><rect x="606.34" y="21.5" width="1" height="6" fill="rgba(170,185,205,.38)"/><rect x="618.55" y="3.5" width="1" height="10.3" fill="rgba(200,208,220,.3)"/><rect x="618.55" y="13.8" width="1" height="13.7" fill="rgba(200,208,220,.42)"/><rect x="630.76" y="21.5" width="1" height="6" fill="rgba(170,185,205,.38)"/><rect x="642.98" y="21.5" width="1" height="6" fill="rgba(170,185,205,.38)"/><rect x="655.19" y="21.5" width="1" height="6" fill="rgba(170,185,205,.38)"/><rect x="667.40" y="3.5" width="1" height="10.3" fill="rgba(200,208,220,.3)"/><rect x="667.40" y="13.8" width="1" height="13.7" fill="rgba(200,208,220,.42)"/><rect x="679.61" y="21.5" width="1" height="6" fill="rgba(170,185,205,.38)"/><rect x="691.82" y="21.5" width="1" height="6" fill="rgba(170,185,205,.38)"/><rect x="704.04" y="21.5" width="1" height="6" fill="rgba(170,185,205,.38)"/><rect x="716.25" y="3.5" width="1" height="10.3" fill="rgba(200,208,220,.3)"/><rect x="716.25" y="13.8" width="1" height="13.7" fill="rgba(200,208,220,.42)"/><rect x="728.46" y="21.5" width="1" height="6" fill="rgba(170,185,205,.38)"/><rect x="740.67" y="21.5" width="1" height="6" fill="rgba(170,185,205,.38)"/><rect x="752.89" y="21.5" width="1" height="6" fill="rgba(170,185,205,.38)"/><rect x="765.10" y="3.5" width="1" height="10.3" fill="rgba(200,208,220,.3)"/><rect x="765.10" y="13.8" width="1" height="13.7" fill="rgba(200,208,220,.42)"/><rect x="777.31" y="21.5" width="1" height="6" fill="rgba(170,185,205,.38)"/><rect x="789.52" y="21.5" width="1" height="6" fill="rgba(170,185,205,.38)"/><rect x="801.74" y="21.5" width="1" height="6" fill="rgba(170,185,205,.38)"/><rect x="813.95" y="3.5" width="1" height="10.3" fill="rgba(200,208,220,.3)"/><rect x="813.95" y="13.8" width="1" height="13.7" fill="rgba(200,208,220,.42)"/><rect x="826.16" y="21.5" width="1" height="6" fill="rgba(170,185,205,.38)"/><rect x="838.38" y="21.5" width="1" height="6" fill="rgba(170,185,205,.38)"/><rect x="850.59" y="21.5" width="1" height="6" fill="rgba(170,185,205,.38)"/><rect x="862.80" y="3.5" width="1" height="10.3" fill="rgba(200,208,220,.3)"/><rect x="862.80" y="13.8" width="1" height="13.7" fill="rgba(200,208,220,.42)"/><rect x="875.01" y="21.5" width="1" height="6" fill="rgba(170,185,205,.38)"/><rect x="887.22" y="21.5" width="1" height="6" fill="rgba(170,185,205,.38)"/><rect x="899.44" y="21.5" width="1" height="6" fill="rgba(170,185,205,.38)"/><rect x="911.65" y="3.5" width="1" height="10.3" fill="rgba(200,208,220,.3)"/><rect x="911.65" y="13.8" width="1" height="13.7" fill="rgba(200,208,220,.42)"/><rect x="923.86" y="21.5" width="1" height="6" fill="rgba(170,185,205,.38)"/><rect x="936.07" y="21.5" width="1" height="6" fill="rgba(170,185,205,.38)"/><rect x="948.29" y="21.5" width="1" height="6" fill="rgba(170,185,205,.38)"/><rect x="960.50" y="3.5" width="1" height="10.3" fill="rgba(200,208,220,.3)"/><rect x="960.50" y="13.8" width="1" height="13.7" fill="rgba(200,208,220,.42)"/><rect x="972.71" y="21.5" width="1" height="6" fill="rgba(170,185,205,.38)"/><rect x="984.92" y="21.5" width="1" height="6" fill="rgba(170,185,205,.38)"/><rect x="997.14" y="21.5" width="1" height="6" fill="rgba(170,185,205,.38)"/><rect x="1009.35" y="3.5" width="1" height="10.3" fill="rgba(200,208,220,.3)"/><rect x="1009.35" y="13.8" width="1" height="13.7" fill="rgba(200,208,220,.42)"/><rect x="1021.56" y="21.5" width="1" height="6" fill="rgba(170,185,205,.38)"/><rect x="1033.78" y="21.5" width="1" height="6" fill="rgba(170,185,205,.38)"/><rect x="1045.99" y="21.5" width="1" height="6" fill="rgba(170,185,205,.38)"/><rect x="1058.20" y="3.5" width="1" height="10.3" fill="rgba(200,208,220,.3)"/><rect x="1058.20" y="13.8" width="1" height="13.7" fill="rgba(200,208,220,.42)"/><rect x="1070.41" y="21.5" width="1" height="6" fill="rgba(170,185,205,.38)"/><rect x="1082.62" y="21.5" width="1" height="6" fill="rgba(170,185,205,.38)"/><rect x="1094.84" y="21.5" width="1" height="6" fill="rgba(170,185,205,.38)"/><rect x="1107.05" y="3.5" width="1" height="10.3" fill="rgba(200,208,220,.3)"/><rect x="1107.05" y="13.8" width="1" height="13.7" fill="rgba(200,208,220,.42)"/><rect x="1119.26" y="21.5" width="1" height="6" fill="rgba(170,185,205,.38)"/><rect x="1131.47" y="21.5" width="1" height="6" fill="rgba(170,185,205,.38)"/><rect x="1143.69" y="21.5" width="1" height="6" fill="rgba(170,185,205,.38)"/><rect x="1155.90" y="3.5" width="1" height="10.3" fill="rgba(200,208,220,.3)"/><rect x="1155.90" y="13.8" width="1" height="13.7" fill="rgba(200,208,220,.42)"/><rect x="1168.11" y="21.5" width="1" height="6" fill="rgba(170,185,205,.38)"/><rect x="1180.33" y="21.5" width="1" height="6" fill="rgba(170,185,205,.38)"/><rect x="1192.54" y="21.5" width="1" height="6" fill="rgba(170,185,205,.38)"/><rect x="1204.75" y="3.5" width="1" height="10.3" fill="rgba(200,208,220,.3)"/><rect x="1204.75" y="13.8" width="1" height="13.7" fill="rgba(200,208,220,.42)"/><rect x="1216.96" y="21.5" width="1" height="6" fill="rgba(170,185,205,.38)"/><rect x="1229.18" y="21.5" width="1" height="6" fill="rgba(170,185,205,.38)"/><rect x="1241.39" y="21.5" width="1" height="6" fill="rgba(170,185,205,.38)"/><rect x="1253.60" y="3.5" width="1" height="10.3" fill="rgba(200,208,220,.3)"/><rect x="1253.60" y="13.8" width="1" height="13.7" fill="rgba(200,208,220,.42)"/><rect x="1265.81" y="21.5" width="1" height="6" fill="rgba(170,185,205,.38)"/><rect x="1278.03" y="21.5" width="1" height="6" fill="rgba(170,185,205,.38)"/><rect x="166.69" y="21.5" width="1" height="6" fill="rgba(170,185,205,.38)"/></svg><span class="t " style="left:181.5px;top:0.2px;font-size:9.8px;color:#dedede;">18</span><span class="t " style="left:230.3px;top:0.2px;font-size:9.8px;color:#dedede;">19</span><span class="t " style="left:279.2px;top:0.2px;font-size:9.8px;color:#dedede;">20</span><span class="t " style="left:328.1px;top:0.2px;font-size:9.8px;color:#dedede;">21</span><span class="t " style="left:376.9px;top:0.2px;font-size:9.8px;color:#dedede;">22</span><span class="t " style="left:425.8px;top:0.2px;font-size:9.8px;color:#dedede;">23</span><span class="t " style="left:474.6px;top:0.2px;font-size:9.8px;color:#dedede;">24</span><span class="t " style="left:523.5px;top:0.2px;font-size:9.8px;color:#dedede;">25</span><span class="t " style="left:572.3px;top:0.2px;font-size:9.8px;color:#dedede;">26</span><span class="t " style="left:621.2px;top:0.2px;font-size:9.8px;color:#dedede;">27</span><span class="t " style="left:670.0px;top:0.2px;font-size:9.8px;color:#dedede;">28</span><span class="t " style="left:718.9px;top:0.2px;font-size:9.8px;color:#dedede;">29</span><span class="t " style="left:767.7px;top:0.2px;font-size:9.8px;color:#dedede;">30</span><span class="t " style="left:816.6px;top:0.2px;font-size:9.8px;color:#dedede;">31</span><span class="t " style="left:865.4px;top:0.2px;font-size:9.8px;color:#dedede;">32</span><span class="t " style="left:914.2px;top:0.2px;font-size:9.8px;color:#dedede;">33</span><span class="t " style="left:963.1px;top:0.2px;font-size:9.8px;color:#dedede;">34</span><span class="t " style="left:1012.0px;top:0.2px;font-size:9.8px;color:#dedede;">35</span><span class="t " style="left:1060.8px;top:0.2px;font-size:9.8px;color:#dedede;">36</span><span class="t " style="left:1109.6px;top:0.2px;font-size:9.8px;color:#dedede;">37</span><span class="t " style="left:1158.5px;top:0.2px;font-size:9.8px;color:#dedede;">38</span><span class="t " style="left:1207.4px;top:0.2px;font-size:9.8px;color:#dedede;">39</span><span class="t " style="left:1256.2px;top:0.2px;font-size:9.8px;color:#dedede;">40</span><span class="t " style="left:666px;top:16.2px;font-size:8.6px;color:#e6ebf1;-webkit-text-stroke:.25px #e6ebf1;">Chorus 1</span>
</div>
<div class="abs" id="trk" style="left:0;top:0;width:1286px;height:410.5px;">
<div class="" style="left:158.5px;top:108.5px;width:1127.5px;height:300.3px;background:#30352e;"></div>
<div class="" style="left:0px;top:108.5px;width:158.5px;height:300.3px;background:#555;"></div>
<div class="" style="left:0px;top:408.7px;width:1286px;height:1.9px;background:#161616;"></div>
<div class="" style="left:0px;top:108.5px;width:158.5px;height:39.0px;"><div class="" style="left:0px;top:0px;width:158.5px;height:1px;background:#474747;"></div><span class="t " style="left:2.6px;top:14.6px;font-size:10.2px;color:#f0f0f0;">12</span><span class="t " style="left:73.4px;top:7.0px;font-size:10px;color:#f0f0f0;">Distant Vocals</span><div class="" style="left:73.6px;top:21.2px;width:30.4px;height:12px;background:#6a6a6a;border-radius:3px;"></div><div class="" style="left:88.7px;top:21.2px;width:1px;height:12px;background:#5a5a5a;"></div><span class="t " style="left:77.6px;top:23.2px;font-size:8.8px;color:#f2f2f2;">M</span><span class="t " style="left:93.6px;top:23.2px;font-size:8.8px;color:#f2f2f2;">S</span><div class="" style="left:109px;top:21.2px;width:14.8px;height:12px;background:#6a6a6a;border-radius:3px;"></div><span class="t " style="left:113.4px;top:23.2px;font-size:8.8px;color:#f2f2f2;">R</span><div class="" style="left:143.1px;top:24.4px;width:5.8px;height:5.8px;background:#3fd15c;border-radius:3px;"></div><svg style="left:41.5px;top:10.2px;" width="20" height="21" viewBox="0 0 20 21"><ellipse cx="9" cy="6.2" rx="4.9" ry="6" fill="#80cc1e"/><path d="M6.6 10.5 V13 Q6 14.6 2.6 15.8 Q.4 16.8 .2 19 H14.4 V14.6 Q12 13.8 11.4 13 V10.5 Z" fill="#80cc1e"/><rect x="15.6" y="10.6" width="3.4" height="6.6" rx="1.5" fill="#80cc1e"/><path d="M15.6 17.4 H19 L17.3 20.4 Z" fill="#80cc1e"/><circle cx="17.3" cy="12.4" r=".7" fill="#555"/></svg></div>
<div class="" style="left:0px;top:147.5px;width:158.5px;height:39.80000000000001px;"><div class="" style="left:0px;top:0px;width:158.5px;height:1px;background:#474747;"></div><span class="t " style="left:2.6px;top:15.000000000000005px;font-size:10.2px;color:#f0f0f0;">13</span><span class="t " style="left:73.4px;top:7.400000000000006px;font-size:10px;color:#f0f0f0;">Near Vocals</span><div class="" style="left:73.6px;top:21.600000000000005px;width:30.4px;height:12px;background:#6a6a6a;border-radius:3px;"></div><div class="" style="left:88.7px;top:21.600000000000005px;width:1px;height:12px;background:#5a5a5a;"></div><span class="t " style="left:77.6px;top:23.600000000000005px;font-size:8.8px;color:#f2f2f2;">M</span><span class="t " style="left:93.6px;top:23.600000000000005px;font-size:8.8px;color:#f2f2f2;">S</span><div class="" style="left:109px;top:21.600000000000005px;width:14.8px;height:12px;background:#6a6a6a;border-radius:3px;"></div><span class="t " style="left:113.4px;top:23.600000000000005px;font-size:8.8px;color:#f2f2f2;">R</span><div class="" style="left:143.1px;top:24.800000000000004px;width:5.8px;height:5.8px;background:#3fd15c;border-radius:3px;"></div><svg style="left:41.5px;top:10.600000000000005px;" width="20" height="21" viewBox="0 0 20 21"><ellipse cx="9" cy="6.2" rx="4.9" ry="6" fill="#a8cc1a"/><path d="M6.6 10.5 V13 Q6 14.6 2.6 15.8 Q.4 16.8 .2 19 H14.4 V14.6 Q12 13.8 11.4 13 V10.5 Z" fill="#a8cc1a"/><rect x="15.6" y="10.6" width="3.4" height="6.6" rx="1.5" fill="#a8cc1a"/><path d="M15.6 17.4 H19 L17.3 20.4 Z" fill="#a8cc1a"/><circle cx="17.3" cy="12.4" r=".7" fill="#555"/></svg></div>
<div class="" style="left:0px;top:187.3px;width:158.5px;height:36.29999999999998px;"><div class="" style="left:0px;top:0px;width:158.5px;height:1px;background:#474747;"></div><span class="t " style="left:2.6px;top:13.249999999999991px;font-size:10.2px;color:#f0f0f0;">14</span><span class="t " style="left:73.4px;top:5.6499999999999915px;font-size:10px;color:#f0f0f0;">Harmonies</span><div class="" style="left:73.6px;top:19.84999999999999px;width:30.4px;height:12px;background:#6a6a6a;border-radius:3px;"></div><div class="" style="left:88.7px;top:19.84999999999999px;width:1px;height:12px;background:#5a5a5a;"></div><span class="t " style="left:77.6px;top:21.84999999999999px;font-size:8.8px;color:#f2f2f2;">M</span><span class="t " style="left:93.6px;top:21.84999999999999px;font-size:8.8px;color:#f2f2f2;">S</span><div class="" style="left:109px;top:19.84999999999999px;width:14.8px;height:12px;background:#6a6a6a;border-radius:3px;"></div><span class="t " style="left:113.4px;top:21.84999999999999px;font-size:8.8px;color:#f2f2f2;">R</span><div class="" style="left:143.1px;top:23.04999999999999px;width:5.8px;height:5.8px;background:#3fd15c;border-radius:3px;"></div><svg style="left:41.5px;top:8.84999999999999px;" width="20" height="21" viewBox="0 0 20 21"><ellipse cx="9" cy="6.2" rx="4.9" ry="6" fill="#e6cf18"/><path d="M6.6 10.5 V13 Q6 14.6 2.6 15.8 Q.4 16.8 .2 19 H14.4 V14.6 Q12 13.8 11.4 13 V10.5 Z" fill="#e6cf18"/><rect x="15.6" y="10.6" width="3.4" height="6.6" rx="1.5" fill="#e6cf18"/><path d="M15.6 17.4 H19 L17.3 20.4 Z" fill="#e6cf18"/><circle cx="17.3" cy="12.4" r=".7" fill="#555"/></svg></div>
<div class="" style="left:0px;top:223.6px;width:158.5px;height:39.70000000000002px;"><div class="" style="left:0px;top:0px;width:158.5px;height:1px;background:#474747;"></div><span class="t " style="left:2.6px;top:14.950000000000008px;font-size:10.2px;color:#f0f0f0;">15</span><span class="t " style="left:73.4px;top:7.3500000000000085px;font-size:10px;color:#f0f0f0;">Main Vocal</span><div class="" style="left:73.6px;top:21.550000000000008px;width:30.4px;height:12px;background:#6a6a6a;border-radius:3px;"></div><div class="" style="left:88.7px;top:21.550000000000008px;width:1px;height:12px;background:#5a5a5a;"></div><span class="t " style="left:77.6px;top:23.550000000000008px;font-size:8.8px;color:#f2f2f2;">M</span><span class="t " style="left:93.6px;top:23.550000000000008px;font-size:8.8px;color:#f2f2f2;">S</span><div class="" style="left:109px;top:21.550000000000008px;width:14.8px;height:12px;background:#6a6a6a;border-radius:3px;"></div><span class="t " style="left:113.4px;top:23.550000000000008px;font-size:8.8px;color:#f2f2f2;">R</span><div class="" style="left:143.1px;top:24.750000000000007px;width:5.8px;height:5.8px;background:#3fd15c;border-radius:3px;"></div><svg style="left:41.5px;top:10.550000000000008px;" width="20" height="21" viewBox="0 0 20 21"><ellipse cx="9" cy="6.2" rx="4.9" ry="6" fill="#eec015"/><path d="M6.6 10.5 V13 Q6 14.6 2.6 15.8 Q.4 16.8 .2 19 H14.4 V14.6 Q12 13.8 11.4 13 V10.5 Z" fill="#eec015"/><rect x="15.6" y="10.6" width="3.4" height="6.6" rx="1.5" fill="#eec015"/><path d="M15.6 17.4 H19 L17.3 20.4 Z" fill="#eec015"/><circle cx="17.3" cy="12.4" r=".7" fill="#555"/></svg></div>
<div class="" style="left:0px;top:263.3px;width:158.5px;height:36.30000000000001px;"><div class="" style="left:0px;top:0px;width:158.5px;height:1px;background:#474747;"></div><span class="t " style="left:2.6px;top:13.250000000000005px;font-size:10.2px;color:#f0f0f0;">16</span><span class="t " style="left:73.4px;top:5.650000000000006px;font-size:10px;color:#f0f0f0;">Backing Vocal</span><div class="" style="left:73.6px;top:19.850000000000005px;width:30.4px;height:12px;background:#6a6a6a;border-radius:3px;"></div><div class="" style="left:88.7px;top:19.850000000000005px;width:1px;height:12px;background:#5a5a5a;"></div><span class="t " style="left:77.6px;top:21.850000000000005px;font-size:8.8px;color:#f2f2f2;">M</span><span class="t " style="left:93.6px;top:21.850000000000005px;font-size:8.8px;color:#f2f2f2;">S</span><div class="" style="left:109px;top:19.850000000000005px;width:14.8px;height:12px;background:#6a6a6a;border-radius:3px;"></div><span class="t " style="left:113.4px;top:21.850000000000005px;font-size:8.8px;color:#f2f2f2;">R</span><div class="" style="left:143.1px;top:23.050000000000004px;width:5.8px;height:5.8px;background:#3fd15c;border-radius:3px;"></div><svg style="left:41.5px;top:8.850000000000005px;" width="20" height="21" viewBox="0 0 20 21"><ellipse cx="9" cy="6.2" rx="4.9" ry="6" fill="#f59a12"/><path d="M6.6 10.5 V13 Q6 14.6 2.6 15.8 Q.4 16.8 .2 19 H14.4 V14.6 Q12 13.8 11.4 13 V10.5 Z" fill="#f59a12"/><rect x="15.6" y="10.6" width="3.4" height="6.6" rx="1.5" fill="#f59a12"/><path d="M15.6 17.4 H19 L17.3 20.4 Z" fill="#f59a12"/><circle cx="17.3" cy="12.4" r=".7" fill="#555"/></svg></div>
<div class="" style="left:0px;top:299.6px;width:158.5px;height:36.599999999999966px;"><div class="" style="left:0px;top:0px;width:158.5px;height:1px;background:#474747;"></div><span class="t " style="left:2.6px;top:13.399999999999983px;font-size:10.2px;color:#f0f0f0;">17</span><span class="t " style="left:73.4px;top:5.799999999999983px;font-size:10px;color:#f0f0f0;">Harmony Vocal</span><div class="" style="left:73.6px;top:19.999999999999982px;width:30.4px;height:12px;background:#6a6a6a;border-radius:3px;"></div><div class="" style="left:88.7px;top:19.999999999999982px;width:1px;height:12px;background:#5a5a5a;"></div><span class="t " style="left:77.6px;top:21.999999999999982px;font-size:8.8px;color:#f2f2f2;">M</span><span class="t " style="left:93.6px;top:21.999999999999982px;font-size:8.8px;color:#f2f2f2;">S</span><div class="" style="left:109px;top:19.999999999999982px;width:14.8px;height:12px;background:#6a6a6a;border-radius:3px;"></div><span class="t " style="left:113.4px;top:21.999999999999982px;font-size:8.8px;color:#f2f2f2;">R</span><div class="" style="left:143.1px;top:23.19999999999998px;width:5.8px;height:5.8px;background:#3fd15c;border-radius:3px;"></div><svg style="left:41.5px;top:8.999999999999982px;" width="20" height="21" viewBox="0 0 20 21"><ellipse cx="9" cy="6.2" rx="4.9" ry="6" fill="#f57a1e"/><path d="M6.6 10.5 V13 Q6 14.6 2.6 15.8 Q.4 16.8 .2 19 H14.4 V14.6 Q12 13.8 11.4 13 V10.5 Z" fill="#f57a1e"/><rect x="15.6" y="10.6" width="3.4" height="6.6" rx="1.5" fill="#f57a1e"/><path d="M15.6 17.4 H19 L17.3 20.4 Z" fill="#f57a1e"/><circle cx="17.3" cy="12.4" r=".7" fill="#555"/></svg></div>
<div class="" style="left:0px;top:336.2px;width:158.5px;height:36.19999999999999px;"><div class="" style="left:0px;top:0px;width:158.5px;height:1px;background:#474747;"></div><span class="t " style="left:2.6px;top:13.199999999999994px;font-size:10.2px;color:#f0f0f0;">18</span><span class="t " style="left:73.4px;top:5.599999999999994px;font-size:10px;color:#f0f0f0;">Choir</span><div class="" style="left:73.6px;top:19.799999999999994px;width:30.4px;height:12px;background:#6a6a6a;border-radius:3px;"></div><div class="" style="left:88.7px;top:19.799999999999994px;width:1px;height:12px;background:#5a5a5a;"></div><span class="t " style="left:77.6px;top:21.799999999999994px;font-size:8.8px;color:#f2f2f2;">M</span><span class="t " style="left:93.6px;top:21.799999999999994px;font-size:8.8px;color:#f2f2f2;">S</span><div class="" style="left:109px;top:19.799999999999994px;width:14.8px;height:12px;background:#6a6a6a;border-radius:3px;"></div><span class="t " style="left:113.4px;top:21.799999999999994px;font-size:8.8px;color:#f2f2f2;">R</span><div class="" style="left:143.1px;top:22.999999999999993px;width:5.8px;height:5.8px;background:#3fd15c;border-radius:3px;"></div><svg style="left:40.5px;top:9.299999999999994px;" width="20" height="19" viewBox="0 0 20 19"><circle cx="4.5" cy="3.2" r="2.3" fill="#f5731e"/><path d="M1.5 11.2 Q1.5 6.2 4.5 6.2 Q7.5 6.2 7.5 11.2 Z" fill="#f5731e"/><circle cx="10" cy="3.2" r="2.3" fill="#f5731e"/><path d="M7 11.2 Q7 6.2 10 6.2 Q13 6.2 13 11.2 Z" fill="#f5731e"/><circle cx="15.5" cy="3.2" r="2.3" fill="#f5731e"/><path d="M12.5 11.2 Q12.5 6.2 15.5 6.2 Q18.5 6.2 18.5 11.2 Z" fill="#f5731e"/><ellipse cx="2.6" cy="9.6" rx="2" ry="2.6" fill="#f5731e" stroke="#555" stroke-width=".5"/><path d="M0.0 16.6 Q0.0 12.6 2.6 12.6 Q5.2 12.6 5.2 16.6 Z" fill="#f5731e" stroke="#555" stroke-width=".4"/><ellipse cx="7.4" cy="9.6" rx="2" ry="2.6" fill="#f5731e" stroke="#555" stroke-width=".5"/><path d="M4.800000000000001 16.6 Q4.800000000000001 12.6 7.4 12.6 Q10.0 12.6 10.0 16.6 Z" fill="#f5731e" stroke="#555" stroke-width=".4"/><ellipse cx="12.6" cy="9.6" rx="2" ry="2.6" fill="#f5731e" stroke="#555" stroke-width=".5"/><path d="M10.0 16.6 Q10.0 12.6 12.6 12.6 Q15.2 12.6 15.2 16.6 Z" fill="#f5731e" stroke="#555" stroke-width=".4"/><ellipse cx="17.4" cy="9.6" rx="2" ry="2.6" fill="#f5731e" stroke="#555" stroke-width=".5"/><path d="M14.799999999999999 16.6 Q14.799999999999999 12.6 17.4 12.6 Q20.0 12.6 20.0 16.6 Z" fill="#f5731e" stroke="#555" stroke-width=".4"/><rect x="0" y="16.4" width="20" height="1.6" fill="#f5731e"/></svg></div>
<div class="" style="left:0px;top:372.4px;width:158.5px;height:36.400000000000034px;"><div class="" style="left:0px;top:0px;width:158.5px;height:1px;background:#474747;"></div><span class="t " style="left:2.6px;top:13.300000000000017px;font-size:10.2px;color:#f0f0f0;">19</span><span class="t " style="left:73.4px;top:5.700000000000017px;font-size:10px;color:#f0f0f0;">Room Mic</span><div class="" style="left:73.6px;top:19.900000000000016px;width:30.4px;height:12px;background:#6a6a6a;border-radius:3px;"></div><div class="" style="left:88.7px;top:19.900000000000016px;width:1px;height:12px;background:#5a5a5a;"></div><span class="t " style="left:77.6px;top:21.900000000000016px;font-size:8.8px;color:#f2f2f2;">M</span><span class="t " style="left:93.6px;top:21.900000000000016px;font-size:8.8px;color:#f2f2f2;">S</span><div class="" style="left:109px;top:19.900000000000016px;width:14.8px;height:12px;background:#6a6a6a;border-radius:3px;"></div><span class="t " style="left:113.4px;top:21.900000000000016px;font-size:8.8px;color:#f2f2f2;">R</span><div class="" style="left:143.1px;top:23.100000000000016px;width:5.8px;height:5.8px;background:#3fd15c;border-radius:3px;"></div><svg style="left:41.5px;top:7.900000000000016px;" width="20" height="22" viewBox="0 0 20 22"><g transform="rotate(40 10 10)"><rect x="6.2" y="-1.2" width="7.6" height="12.4" rx="3.6" fill="#e54fd0"/><rect x="7.6" y=".4" width="4.8" height="7" rx="2.2" fill="#555" opacity=".55"/><rect x="7" y="8.2" width="6" height="1.2" fill="#555"/><path d="M7.2 11.6 H12.8 L11.6 20.6 H8.4 Z" fill="#e54fd0"/><rect x="8.6" y="21" width="2.8" height="1.6" fill="#e54fd0"/></g></svg></div>
<div class="" style="left:15.3px;top:108.5px;width:1px;height:300.3px;background:#474747;"></div>
<div class="" style="left:25px;top:108.5px;width:1.2px;height:300.3px;background:#444;"></div>
<div class="" style="left:15.8px;top:108.5px;width:9.4px;height:300.3px;background:#575757;"></div>
<div class="" style="left:158px;top:108.5px;width:1.2px;height:300.3px;background:#2c2c2c;"></div>
<div class="rg" style="left:160.9px;top:109.5px;width:183.49999999999997px;height:37.5px;background:#7cc617;border-radius:4.5px;overflow:hidden;box-shadow:0 0 0 1.1px rgba(10,12,8,.8), inset 0 .8px 0 rgba(255,255,255,.18);"><svg style="left:-160.9px;top:25.35px" width="1290" height="1" viewBox="0 0 1290 1" fill="#e3f7bd"><rect x="160.9" y="-.4" width="183.5" height=".8" opacity=".8"/><use href="#wv2" x="81.7"/><use href="#wv0" x="179.4"/><use href="#wv1" x="277.1"/></svg><div class="" style="left:2.5px;top:2.4px;width:11.3px;height:9.4px;background:rgba(0,0,0,.2);border-radius:0px;border-radius:3px 0 0 3px;"></div><svg style="left:5px;top:3.8px;" width="7" height="7" viewBox="0 0 7 7"><path d="M.3 .2 V6.6 L6.6 3.4 Z" fill="#f4fae6"/></svg><div class="" style="left:15.1px;top:2.4px;width:9.9px;height:9.4px;background:rgba(0,0,0,.2);border-radius:0px;"></div><span class="t " style="left:17.8px;top:3.2px;font-size:8.4px;color:#f4fae6;">2</span><div class="" style="left:26.3px;top:2.4px;width:12.8px;height:9.4px;background:rgba(0,0,0,.2);border-radius:0px;border-radius:0 3px 3px 0;"></div><svg style="left:27.3px;top:4px;" width="11" height="6" viewBox="0 0 11 6"><circle cx="1" cy="5" r="0.95" fill="#f4fae6"/><circle cx="3.1" cy="3.1" r="0.95" fill="#f4fae6"/><circle cx="5.4" cy="1" r="0.95" fill="#f4fae6"/><circle cx="7.7" cy="3.1" r="0.95" fill="#f4fae6"/><circle cx="9.8" cy="5" r="0.95" fill="#f4fae6"/><circle cx="2.05" cy="4.05" r="0.45" fill="#f4fae6"/><circle cx="4.25" cy="2.05" r="0.45" fill="#f4fae6"/><circle cx="6.55" cy="2.05" r="0.45" fill="#f4fae6"/><circle cx="8.75" cy="4.05" r="0.45" fill="#f4fae6"/></svg><span class="t" style="left:42.8px;top:3px;font-size:8.7px;color:rgba(255,255,255,.92);-webkit-text-stroke:.2px rgba(255,255,255,.8);">Distant Vocals: Take 3</span><svg style="left:135px;top:2.8px;" width="8" height="9" viewBox="0 0 8 9"><path d="M.8 .7 H7.2 M.8 8.3 H7.2" stroke="rgba(255,255,255,.85)" stroke-width=".9"/><ellipse cx="4" cy="4.5" rx="3" ry="2.4" fill="none" stroke="rgba(255,255,255,.85)" stroke-width=".9"/></svg></div>
<div class="rg" style="left:350.8px;top:109.5px;width:292.2px;height:37.5px;background:#7cc617;border-radius:4.5px;overflow:hidden;box-shadow:0 0 0 1.1px rgba(10,12,8,.8), inset 0 .8px 0 rgba(255,255,255,.18);"><svg style="left:-350.8px;top:25.35px" width="1290" height="1" viewBox="0 0 1290 1" fill="#e3f7bd"><rect x="350.8" y="-.4" width="292.2" height=".8" opacity=".8"/><use href="#wv1" x="277.1"/><use href="#wv2" x="374.8"/><use href="#wv3" x="472.5"/><use href="#wv1" x="570.2"/></svg><div class="" style="left:2.5px;top:2.4px;width:11.3px;height:9.4px;background:rgba(0,0,0,.2);border-radius:0px;border-radius:3px 0 0 3px;"></div><svg style="left:5px;top:3.8px;" width="7" height="7" viewBox="0 0 7 7"><path d="M.3 .2 V6.6 L6.6 3.4 Z" fill="#f4fae6"/></svg><div class="" style="left:15.1px;top:2.4px;width:9.9px;height:9.4px;background:rgba(0,0,0,.2);border-radius:0px;"></div><span class="t " style="left:17.8px;top:3.2px;font-size:8.4px;color:#f4fae6;">2</span><div class="" style="left:26.3px;top:2.4px;width:12.8px;height:9.4px;background:rgba(0,0,0,.2);border-radius:0px;border-radius:0 3px 3px 0;"></div><svg style="left:27.3px;top:4px;" width="11" height="6" viewBox="0 0 11 6"><circle cx="1" cy="5" r="0.95" fill="#f4fae6"/><circle cx="3.1" cy="3.1" r="0.95" fill="#f4fae6"/><circle cx="5.4" cy="1" r="0.95" fill="#f4fae6"/><circle cx="7.7" cy="3.1" r="0.95" fill="#f4fae6"/><circle cx="9.8" cy="5" r="0.95" fill="#f4fae6"/><circle cx="2.05" cy="4.05" r="0.45" fill="#f4fae6"/><circle cx="4.25" cy="2.05" r="0.45" fill="#f4fae6"/><circle cx="6.55" cy="2.05" r="0.45" fill="#f4fae6"/><circle cx="8.75" cy="4.05" r="0.45" fill="#f4fae6"/></svg><span class="t" style="left:42.8px;top:3px;font-size:8.7px;color:rgba(255,255,255,.92);-webkit-text-stroke:.2px rgba(255,255,255,.8);">Distant Vocals: Take 3</span><svg style="left:135px;top:2.8px;" width="8" height="9" viewBox="0 0 8 9"><path d="M.8 .7 H7.2 M.8 8.3 H7.2" stroke="rgba(255,255,255,.85)" stroke-width=".9"/><ellipse cx="4" cy="4.5" rx="3" ry="2.4" fill="none" stroke="rgba(255,255,255,.85)" stroke-width=".9"/></svg></div>
<div class="rg" style="left:662.3px;top:109.5px;width:368.5px;height:37.5px;background:#7cc617;border-radius:4.5px;overflow:hidden;box-shadow:0 0 0 1.1px rgba(10,12,8,.8), inset 0 .8px 0 rgba(255,255,255,.18);"><svg style="left:-662.3px;top:25.35px" width="1290" height="1" viewBox="0 0 1290 1" fill="#e3f7bd"><rect x="662.3" y="-.4" width="368.5" height=".8" opacity=".8"/><use href="#wv1" x="570.2"/><use href="#wv2" x="667.9"/><use href="#wv3" x="765.6"/><use href="#wv1" x="863.3"/><use href="#wv3" x="961.0"/></svg><div class="" style="left:2.5px;top:2.4px;width:11.3px;height:9.4px;background:rgba(0,0,0,.2);border-radius:0px;border-radius:3px 0 0 3px;"></div><svg style="left:5px;top:3.8px;" width="7" height="7" viewBox="0 0 7 7"><path d="M.3 .2 V6.6 L6.6 3.4 Z" fill="#f4fae6"/></svg><div class="" style="left:15.1px;top:2.4px;width:9.9px;height:9.4px;background:rgba(0,0,0,.2);border-radius:0px;"></div><span class="t " style="left:17.8px;top:3.2px;font-size:8.4px;color:#f4fae6;">3</span><div class="" style="left:26.3px;top:2.4px;width:12.8px;height:9.4px;background:rgba(0,0,0,.2);border-radius:0px;border-radius:0 3px 3px 0;"></div><svg style="left:27.3px;top:4px;" width="11" height="6" viewBox="0 0 11 6"><circle cx="1" cy="5" r="0.95" fill="#f4fae6"/><circle cx="3.1" cy="3.1" r="0.95" fill="#f4fae6"/><circle cx="5.4" cy="1" r="0.95" fill="#f4fae6"/><circle cx="7.7" cy="3.1" r="0.95" fill="#f4fae6"/><circle cx="9.8" cy="5" r="0.95" fill="#f4fae6"/><circle cx="2.05" cy="4.05" r="0.45" fill="#f4fae6"/><circle cx="4.25" cy="2.05" r="0.45" fill="#f4fae6"/><circle cx="6.55" cy="2.05" r="0.45" fill="#f4fae6"/><circle cx="8.75" cy="4.05" r="0.45" fill="#f4fae6"/></svg><span class="t" style="left:42.8px;top:3px;font-size:8.7px;color:rgba(255,255,255,.92);-webkit-text-stroke:.2px rgba(255,255,255,.8);">Distant Vocals: Take 3</span><svg style="left:135px;top:2.8px;" width="8" height="9" viewBox="0 0 8 9"><path d="M.8 .7 H7.2 M.8 8.3 H7.2" stroke="rgba(255,255,255,.85)" stroke-width=".9"/><ellipse cx="4" cy="4.5" rx="3" ry="2.4" fill="none" stroke="rgba(255,255,255,.85)" stroke-width=".9"/></svg></div>
<div class="rg" style="left:1041px;top:109.5px;width:183.20000000000005px;height:37.5px;background:#7cc617;border-radius:4.5px;overflow:hidden;box-shadow:0 0 0 1.1px rgba(10,12,8,.8), inset 0 .8px 0 rgba(255,255,255,.18);"><svg style="left:-1041px;top:25.35px" width="1290" height="1" viewBox="0 0 1290 1" fill="#e3f7bd"><rect x="1041" y="-.4" width="183.2" height=".8" opacity=".8"/><use href="#wv3" x="961.0"/><use href="#wv0" x="1058.7"/><use href="#wv1" x="1156.4"/></svg><div class="" style="left:2.5px;top:2.4px;width:11.3px;height:9.4px;background:rgba(0,0,0,.2);border-radius:0px;border-radius:3px 0 0 3px;"></div><svg style="left:5px;top:3.8px;" width="7" height="7" viewBox="0 0 7 7"><path d="M.3 .2 V6.6 L6.6 3.4 Z" fill="#f4fae6"/></svg><div class="" style="left:15.1px;top:2.4px;width:9.9px;height:9.4px;background:rgba(0,0,0,.2);border-radius:0px;"></div><span class="t " style="left:17.8px;top:3.2px;font-size:8.4px;color:#f4fae6;">2</span><div class="" style="left:26.3px;top:2.4px;width:12.8px;height:9.4px;background:rgba(0,0,0,.2);border-radius:0px;border-radius:0 3px 3px 0;"></div><svg style="left:27.3px;top:4px;" width="11" height="6" viewBox="0 0 11 6"><circle cx="1" cy="5" r="0.95" fill="#f4fae6"/><circle cx="3.1" cy="3.1" r="0.95" fill="#f4fae6"/><circle cx="5.4" cy="1" r="0.95" fill="#f4fae6"/><circle cx="7.7" cy="3.1" r="0.95" fill="#f4fae6"/><circle cx="9.8" cy="5" r="0.95" fill="#f4fae6"/><circle cx="2.05" cy="4.05" r="0.45" fill="#f4fae6"/><circle cx="4.25" cy="2.05" r="0.45" fill="#f4fae6"/><circle cx="6.55" cy="2.05" r="0.45" fill="#f4fae6"/><circle cx="8.75" cy="4.05" r="0.45" fill="#f4fae6"/></svg><span class="t" style="left:42.8px;top:3px;font-size:8.7px;color:rgba(255,255,255,.92);-webkit-text-stroke:.2px rgba(255,255,255,.8);">Distant Vocals: Take 3</span><svg style="left:135px;top:2.8px;" width="8" height="9" viewBox="0 0 8 9"><path d="M.8 .7 H7.2 M.8 8.3 H7.2" stroke="rgba(255,255,255,.85)" stroke-width=".9"/><ellipse cx="4" cy="4.5" rx="3" ry="2.4" fill="none" stroke="rgba(255,255,255,.85)" stroke-width=".9"/></svg></div>
<div class="rg" style="left:1230.8px;top:109.5px;width:69.20000000000005px;height:37.5px;background:#7cc617;border-radius:4.5px;overflow:hidden;box-shadow:0 0 0 1.1px rgba(10,12,8,.8), inset 0 .8px 0 rgba(255,255,255,.18);"><svg style="left:-1230.8px;top:25.35px" width="1290" height="1" viewBox="0 0 1290 1" fill="#e3f7bd"><rect x="1230.8" y="-.4" width="59.2" height=".8" opacity=".8"/><use href="#wv1" x="1156.4"/><use href="#wv2" x="1254.1"/></svg><div class="" style="left:2.5px;top:2.4px;width:11.3px;height:9.4px;background:rgba(0,0,0,.2);border-radius:0px;border-radius:3px 0 0 3px;"></div><svg style="left:5px;top:3.8px;" width="7" height="7" viewBox="0 0 7 7"><path d="M.3 .2 V6.6 L6.6 3.4 Z" fill="#f4fae6"/></svg><div class="" style="left:15.1px;top:2.4px;width:9.9px;height:9.4px;background:rgba(0,0,0,.2);border-radius:0px;"></div><span class="t " style="left:17.8px;top:3.2px;font-size:8.4px;color:#f4fae6;">2</span><div class="" style="left:26.3px;top:2.4px;width:12.8px;height:9.4px;background:rgba(0,0,0,.2);border-radius:0px;border-radius:0 3px 3px 0;"></div><svg style="left:27.3px;top:4px;" width="11" height="6" viewBox="0 0 11 6"><circle cx="1" cy="5" r="0.95" fill="#f4fae6"/><circle cx="3.1" cy="3.1" r="0.95" fill="#f4fae6"/><circle cx="5.4" cy="1" r="0.95" fill="#f4fae6"/><circle cx="7.7" cy="3.1" r="0.95" fill="#f4fae6"/><circle cx="9.8" cy="5" r="0.95" fill="#f4fae6"/><circle cx="2.05" cy="4.05" r="0.45" fill="#f4fae6"/><circle cx="4.25" cy="2.05" r="0.45" fill="#f4fae6"/><circle cx="6.55" cy="2.05" r="0.45" fill="#f4fae6"/><circle cx="8.75" cy="4.05" r="0.45" fill="#f4fae6"/></svg><span class="t" style="left:42.8px;top:3px;font-size:8.7px;color:rgba(255,255,255,.92);-webkit-text-stroke:.2px rgba(255,255,255,.8);">Distant Vocals: Take 3</span><svg style="left:135px;top:2.8px;" width="8" height="9" viewBox="0 0 8 9"><path d="M.8 .7 H7.2 M.8 8.3 H7.2" stroke="rgba(255,255,255,.85)" stroke-width=".9"/><ellipse cx="4" cy="4.5" rx="3" ry="2.4" fill="none" stroke="rgba(255,255,255,.85)" stroke-width=".9"/></svg></div>
<div class="rg" style="left:160.9px;top:149.4px;width:1139.1px;height:36.69999999999999px;background:#a5c815;border-radius:4.5px;overflow:hidden;box-shadow:0 0 0 1.1px rgba(10,12,8,.8), inset 0 .8px 0 rgba(255,255,255,.18);"><svg style="left:-160.9px;top:24.949999999999996px" width="1290" height="1" viewBox="0 0 1290 1" fill="#f0f7bd"><rect x="160.9" y="-.4" width="1129.1" height=".8" opacity=".8"/><use href="#wv0" x="81.7"/><use href="#wv1" x="179.4"/><use href="#wv2" x="277.1"/><use href="#wv0" x="374.8"/><use href="#wv3" x="472.5"/><use href="#wv2" x="570.2"/><use href="#wv0" x="667.9"/><use href="#wv3" x="765.6"/><use href="#wv2" x="863.3"/><use href="#wv3" x="961.0"/><use href="#wv1" x="1058.7"/><use href="#wv2" x="1156.4"/><use href="#wv0" x="1254.1"/></svg><div class="" style="left:2.5px;top:2.4px;width:11.3px;height:9.4px;background:rgba(0,0,0,.2);border-radius:0px;border-radius:3px 0 0 3px;"></div><svg style="left:5px;top:3.8px;" width="7" height="7" viewBox="0 0 7 7"><path d="M.3 .2 V6.6 L6.6 3.4 Z" fill="#f4fae6"/></svg><div class="" style="left:15.1px;top:2.4px;width:9.9px;height:9.4px;background:rgba(0,0,0,.2);border-radius:0px;"></div><span class="t " style="left:17.8px;top:3.2px;font-size:8.4px;color:#f4fae6;">2</span><div class="" style="left:26.3px;top:2.4px;width:12.8px;height:9.4px;background:rgba(0,0,0,.2);border-radius:0px;border-radius:0 3px 3px 0;"></div><svg style="left:27.3px;top:4px;" width="11" height="6" viewBox="0 0 11 6"><circle cx="1" cy="5" r="0.95" fill="#f4fae6"/><circle cx="3.1" cy="3.1" r="0.95" fill="#f4fae6"/><circle cx="5.4" cy="1" r="0.95" fill="#f4fae6"/><circle cx="7.7" cy="3.1" r="0.95" fill="#f4fae6"/><circle cx="9.8" cy="5" r="0.95" fill="#f4fae6"/><circle cx="2.05" cy="4.05" r="0.45" fill="#f4fae6"/><circle cx="4.25" cy="2.05" r="0.45" fill="#f4fae6"/><circle cx="6.55" cy="2.05" r="0.45" fill="#f4fae6"/><circle cx="8.75" cy="4.05" r="0.45" fill="#f4fae6"/></svg><span class="t" style="left:42.8px;top:3px;font-size:8.7px;color:rgba(255,255,255,.92);-webkit-text-stroke:.2px rgba(255,255,255,.8);">Near Vocals: Take 2</span><svg style="left:129.5px;top:2.8px;" width="8" height="9" viewBox="0 0 8 9"><path d="M.8 .7 H7.2 M.8 8.3 H7.2" stroke="rgba(255,255,255,.85)" stroke-width=".9"/><ellipse cx="4" cy="4.5" rx="3" ry="2.4" fill="none" stroke="rgba(255,255,255,.85)" stroke-width=".9"/></svg></div>
<div class="rg" style="left:160.9px;top:188.9px;width:308.1px;height:33.400000000000006px;background:#cbca19;border-radius:4.5px;overflow:hidden;box-shadow:0 0 0 1.1px rgba(10,12,8,.8), inset 0 .8px 0 rgba(255,255,255,.18);"><svg style="left:-160.9px;top:23.300000000000004px" width="1290" height="1" viewBox="0 0 1290 1" fill="#f7f6c0"><rect x="160.9" y="-.4" width="308.1" height=".8" opacity=".8"/><use href="#wv1" x="81.7"/><use href="#wv2" x="179.4"/><use href="#wv0" x="277.1"/><use href="#wv1" x="374.8"/></svg><span class="t" style="left:3.9px;top:3px;font-size:8.7px;color:rgba(255,255,255,.92);-webkit-text-stroke:.2px rgba(255,255,255,.8);">Distant Harmonies</span><svg style="left:81.5px;top:2.8px;" width="8" height="9" viewBox="0 0 8 9"><path d="M.8 .7 H7.2 M.8 8.3 H7.2" stroke="rgba(255,255,255,.85)" stroke-width=".9"/><ellipse cx="4" cy="4.5" rx="3" ry="2.4" fill="none" stroke="rgba(255,255,255,.85)" stroke-width=".9"/></svg></div>
<div class="rg" style="left:546.4px;top:188.9px;width:715.6px;height:33.400000000000006px;background:#cbca19;border-radius:4.5px;overflow:hidden;box-shadow:0 0 0 1.1px rgba(10,12,8,.8), inset 0 .8px 0 rgba(255,255,255,.18);"><svg style="left:-546.4px;top:23.300000000000004px" width="1290" height="1" viewBox="0 0 1290 1" fill="#f7f6c0"><rect x="546.4" y="-.4" width="715.6" height=".8" opacity=".8"/><use href="#wv3" x="472.5"/><use href="#wv0" x="570.2"/><use href="#wv1" x="667.9"/><use href="#wv3" x="765.6"/><use href="#wv0" x="863.3"/><use href="#wv3" x="961.0"/><use href="#wv2" x="1058.7"/><use href="#wv0" x="1156.4"/><use href="#wv1" x="1254.1"/></svg><span class="t" style="left:3.9px;top:3px;font-size:8.7px;color:rgba(255,255,255,.92);-webkit-text-stroke:.2px rgba(255,255,255,.8);">Distant Harmonies</span><svg style="left:81.5px;top:2.8px;" width="8" height="9" viewBox="0 0 8 9"><path d="M.8 .7 H7.2 M.8 8.3 H7.2" stroke="rgba(255,255,255,.85)" stroke-width=".9"/><ellipse cx="4" cy="4.5" rx="3" ry="2.4" fill="none" stroke="rgba(255,255,255,.85)" stroke-width=".9"/></svg></div>
<div class="rg" style="left:176.7px;top:225.2px;width:1085.3px;height:36.400000000000034px;background:#cfa318;border-radius:4.5px;overflow:hidden;box-shadow:0 0 0 1.1px rgba(10,12,8,.8), inset 0 .8px 0 rgba(255,255,255,.18);"><svg style="left:-176.7px;top:24.80000000000002px" width="1290" height="1" viewBox="0 0 1290 1" fill="#f7eabd"><rect x="176.7" y="-.4" width="1085.3" height=".8" opacity=".8"/><use href="#wv2" x="81.7"/><use href="#wv0" x="179.4"/><use href="#wv1" x="277.1"/><use href="#wv2" x="374.8"/><use href="#wv3" x="472.5"/><use href="#wv1" x="570.2"/><use href="#wv2" x="667.9"/><use href="#wv3" x="765.6"/><use href="#wv1" x="863.3"/><use href="#wv3" x="961.0"/><use href="#wv0" x="1058.7"/><use href="#wv1" x="1156.4"/><use href="#wv2" x="1254.1"/></svg><span class="t" style="left:3.9px;top:3px;font-size:8.7px;color:rgba(255,255,255,.92);-webkit-text-stroke:.2px rgba(255,255,255,.8);">Main Vocal</span><svg style="left:52.5px;top:2.8px;" width="8" height="9" viewBox="0 0 8 9"><path d="M.8 .7 H7.2 M.8 8.3 H7.2" stroke="rgba(255,255,255,.85)" stroke-width=".9"/><ellipse cx="4" cy="4.5" rx="3" ry="2.4" fill="none" stroke="rgba(255,255,255,.85)" stroke-width=".9"/></svg></div>
<div class="rg" style="left:160.9px;top:264.3px;width:1101.1px;height:34.39999999999998px;background:#cd7f14;border-radius:4.5px;overflow:hidden;box-shadow:0 0 0 1.1px rgba(10,12,8,.8), inset 0 .8px 0 rgba(255,255,255,.18);"><svg style="left:-160.9px;top:23.79999999999999px" width="1290" height="1" viewBox="0 0 1290 1" fill="#f7dcbd"><rect x="160.9" y="-.4" width="1101.1" height=".8" opacity=".8"/><use href="#wv4" x="81.7"/><use href="#wv4" x="179.4"/><use href="#wv4" x="277.1"/><use href="#wv4" x="374.8"/><use href="#wv3" x="472.5"/><use href="#wv4" x="570.2"/><use href="#wv4" x="667.9"/><use href="#wv3" x="765.6"/><use href="#wv4" x="863.3"/><use href="#wv3" x="961.0"/><use href="#wv4" x="1058.7"/><use href="#wv4" x="1156.4"/><use href="#wv4" x="1254.1"/></svg><span class="t" style="left:3.9px;top:3px;font-size:8.7px;color:rgba(255,255,255,.92);-webkit-text-stroke:.2px rgba(255,255,255,.8);">Backing Vocal</span><svg style="left:66px;top:2.8px;" width="8" height="9" viewBox="0 0 8 9"><path d="M.8 .7 H7.2 M.8 8.3 H7.2" stroke="rgba(255,255,255,.85)" stroke-width=".9"/><ellipse cx="4" cy="4.5" rx="3" ry="2.4" fill="none" stroke="rgba(255,255,255,.85)" stroke-width=".9"/></svg></div>
<div class="rg" style="left:160.9px;top:300.7px;width:1101.1px;height:33.900000000000034px;background:#cd5c14;border-radius:4.5px;overflow:hidden;box-shadow:0 0 0 1.1px rgba(10,12,8,.8), inset 0 .8px 0 rgba(255,255,255,.18);"><svg style="left:-160.9px;top:23.55000000000002px" width="1290" height="1" viewBox="0 0 1290 1" fill="#f7cfbd"><rect x="160.9" y="-.4" width="1101.1" height=".8" opacity=".8"/><use href="#wv5" x="81.7"/><use href="#wv5" x="179.4"/><use href="#wv5" x="277.1"/><use href="#wv5" x="374.8"/><use href="#wv3" x="472.5"/><use href="#wv5" x="570.2"/><use href="#wv5" x="667.9"/><use href="#wv3" x="765.6"/><use href="#wv5" x="863.3"/><use href="#wv3" x="961.0"/><use href="#wv5" x="1058.7"/><use href="#wv5" x="1156.4"/><use href="#wv5" x="1254.1"/></svg><span class="t" style="left:3.9px;top:3px;font-size:8.7px;color:rgba(255,255,255,.92);-webkit-text-stroke:.2px rgba(255,255,255,.8);">Harmony Vocal</span><svg style="left:70px;top:2.8px;" width="8" height="9" viewBox="0 0 8 9"><path d="M.8 .7 H7.2 M.8 8.3 H7.2" stroke="rgba(255,255,255,.85)" stroke-width=".9"/><ellipse cx="4" cy="4.5" rx="3" ry="2.4" fill="none" stroke="rgba(255,255,255,.85)" stroke-width=".9"/></svg></div>
<div class="rg" style="left:160.9px;top:337.7px;width:1101.1px;height:33.60000000000002px;background:#ca3a10;border-radius:4.5px;overflow:hidden;box-shadow:0 0 0 1.1px rgba(10,12,8,.8), inset 0 .8px 0 rgba(255,255,255,.18);"><svg style="left:-160.9px;top:23.400000000000013px" width="1290" height="1" viewBox="0 0 1290 1" fill="#f7c6b8"><rect x="160.9" y="-.4" width="1101.1" height=".8" opacity=".8"/><use href="#wv5" x="81.7"/><use href="#wv5" x="179.4"/><use href="#wv5" x="277.1"/><use href="#wv5" x="374.8"/><use href="#wv3" x="472.5"/><use href="#wv5" x="570.2"/><use href="#wv5" x="667.9"/><use href="#wv3" x="765.6"/><use href="#wv5" x="863.3"/><use href="#wv3" x="961.0"/><use href="#wv5" x="1058.7"/><use href="#wv5" x="1156.4"/><use href="#wv5" x="1254.1"/></svg><span class="t" style="left:3.9px;top:3px;font-size:8.7px;color:rgba(255,255,255,.92);-webkit-text-stroke:.2px rgba(255,255,255,.8);">Choir</span><svg style="left:32px;top:2.8px;" width="8" height="9" viewBox="0 0 8 9"><path d="M.8 .7 H7.2 M.8 8.3 H7.2" stroke="rgba(255,255,255,.85)" stroke-width=".9"/><ellipse cx="4" cy="4.5" rx="3" ry="2.4" fill="none" stroke="rgba(255,255,255,.85)" stroke-width=".9"/></svg></div>
<div class="rg" style="left:160.9px;top:373.8px;width:1101.1px;height:33.89999999999998px;background:#ce10a2;border-radius:4.5px;overflow:hidden;box-shadow:0 0 0 1.1px rgba(10,12,8,.8), inset 0 .8px 0 rgba(255,255,255,.18);"><svg style="left:-160.9px;top:23.54999999999999px" width="1290" height="1" viewBox="0 0 1290 1" fill="#f9b8e8"><rect x="160.9" y="-.4" width="1101.1" height=".8" opacity=".8"/><use href="#wv4" x="81.7"/><use href="#wv4" x="179.4"/><use href="#wv4" x="277.1"/><use href="#wv4" x="374.8"/><use href="#wv3" x="472.5"/><use href="#wv4" x="570.2"/><use href="#wv4" x="667.9"/><use href="#wv3" x="765.6"/><use href="#wv4" x="863.3"/><use href="#wv3" x="961.0"/><use href="#wv4" x="1058.7"/><use href="#wv4" x="1156.4"/><use href="#wv4" x="1254.1"/></svg><span class="t" style="left:3.9px;top:3px;font-size:8.7px;color:rgba(255,255,255,.92);-webkit-text-stroke:.2px rgba(255,255,255,.8);">Room Mic</span><svg style="left:50px;top:2.8px;" width="8" height="9" viewBox="0 0 8 9"><path d="M.8 .7 H7.2 M.8 8.3 H7.2" stroke="rgba(255,255,255,.85)" stroke-width=".9"/><ellipse cx="4" cy="4.5" rx="3" ry="2.4" fill="none" stroke="rgba(255,255,255,.85)" stroke-width=".9"/></svg></div>
<div class="rg" style="left:1262.6px;top:188.9px;width:37.40000000000009px;height:33.400000000000006px;background:#cbca19;border-radius:4.5px;overflow:hidden;box-shadow:0 0 0 1.1px rgba(10,12,8,.8), inset 0 .8px 0 rgba(255,255,255,.18);"><svg style="left:-1262.6px;top:23.300000000000004px" width="1290" height="1" viewBox="0 0 1290 1" fill="#f7f6c0"><rect x="1262.6" y="-.4" width="27.4" height=".8" opacity=".8"/><use href="#wv1" x="1254.1"/></svg></div>
<div class="rg" style="left:1248px;top:225.2px;width:52px;height:36.400000000000034px;background:#cfa318;border-radius:4.5px;overflow:hidden;box-shadow:0 0 0 1.1px rgba(10,12,8,.8), inset 0 .8px 0 rgba(255,255,255,.18);"><svg style="left:-1248px;top:24.80000000000002px" width="1290" height="1" viewBox="0 0 1290 1" fill="#f7eabd"><rect x="1248" y="-.4" width="42.0" height=".8" opacity=".8"/><use href="#wv1" x="1156.4"/><use href="#wv2" x="1254.1"/></svg><span class="t" style="left:3.9px;top:3px;font-size:8.7px;color:rgba(255,255,255,.92);-webkit-text-stroke:.2px rgba(255,255,255,.8);">Main Vocal</span><svg style="left:52.5px;top:2.8px;" width="8" height="9" viewBox="0 0 8 9"><path d="M.8 .7 H7.2 M.8 8.3 H7.2" stroke="rgba(255,255,255,.85)" stroke-width=".9"/><ellipse cx="4" cy="4.5" rx="3" ry="2.4" fill="none" stroke="rgba(255,255,255,.85)" stroke-width=".9"/></svg></div>
<div class="rg" style="left:1251px;top:264.3px;width:49px;height:34.39999999999998px;background:#cd7f14;border-radius:4.5px;overflow:hidden;box-shadow:0 0 0 1.1px rgba(10,12,8,.8), inset 0 .8px 0 rgba(255,255,255,.18);"><svg style="left:-1251px;top:23.79999999999999px" width="1290" height="1" viewBox="0 0 1290 1" fill="#f7dcbd"><rect x="1251" y="-.4" width="39.0" height=".8" opacity=".8"/><use href="#wv4" x="1156.4"/><use href="#wv4" x="1254.1"/></svg><span class="t" style="left:3.9px;top:3px;font-size:8.7px;color:rgba(255,255,255,.92);-webkit-text-stroke:.2px rgba(255,255,255,.8);">Backing Vocal</span><svg style="left:66px;top:2.8px;" width="8" height="9" viewBox="0 0 8 9"><path d="M.8 .7 H7.2 M.8 8.3 H7.2" stroke="rgba(255,255,255,.85)" stroke-width=".9"/><ellipse cx="4" cy="4.5" rx="3" ry="2.4" fill="none" stroke="rgba(255,255,255,.85)" stroke-width=".9"/></svg></div>
<div class="rg" style="left:1250px;top:300.7px;width:50px;height:33.900000000000034px;background:#cd5c14;border-radius:4.5px;overflow:hidden;box-shadow:0 0 0 1.1px rgba(10,12,8,.8), inset 0 .8px 0 rgba(255,255,255,.18);"><svg style="left:-1250px;top:23.55000000000002px" width="1290" height="1" viewBox="0 0 1290 1" fill="#f7cfbd"><rect x="1250" y="-.4" width="40.0" height=".8" opacity=".8"/><use href="#wv5" x="1156.4"/><use href="#wv5" x="1254.1"/></svg><span class="t" style="left:3.9px;top:3px;font-size:8.7px;color:rgba(255,255,255,.92);-webkit-text-stroke:.2px rgba(255,255,255,.8);">Harmony Vocal</span><svg style="left:70px;top:2.8px;" width="8" height="9" viewBox="0 0 8 9"><path d="M.8 .7 H7.2 M.8 8.3 H7.2" stroke="rgba(255,255,255,.85)" stroke-width=".9"/><ellipse cx="4" cy="4.5" rx="3" ry="2.4" fill="none" stroke="rgba(255,255,255,.85)" stroke-width=".9"/></svg></div>
<div class="rg" style="left:1237.3px;top:337.7px;width:62.700000000000045px;height:33.60000000000002px;background:#ca3a10;border-radius:4.5px;overflow:hidden;box-shadow:0 0 0 1.1px rgba(10,12,8,.8), inset 0 .8px 0 rgba(255,255,255,.18);"><svg style="left:-1237.3px;top:23.400000000000013px" width="1290" height="1" viewBox="0 0 1290 1" fill="#f7c6b8"><rect x="1237.3" y="-.4" width="52.7" height=".8" opacity=".8"/><use href="#wv5" x="1156.4"/><use href="#wv5" x="1254.1"/></svg><span class="t" style="left:3.9px;top:3px;font-size:8.7px;color:rgba(255,255,255,.92);-webkit-text-stroke:.2px rgba(255,255,255,.8);">Choir 7</span><svg style="left:36.7px;top:2.8px;" width="8" height="9" viewBox="0 0 8 9"><path d="M.8 .7 H7.2 M.8 8.3 H7.2" stroke="rgba(255,255,255,.85)" stroke-width=".9"/><ellipse cx="4" cy="4.5" rx="3" ry="2.4" fill="none" stroke="rgba(255,255,255,.85)" stroke-width=".9"/></svg></div>
<div class="rg" style="left:1242px;top:373.8px;width:58px;height:33.89999999999998px;background:#ce10a2;border-radius:4.5px;overflow:hidden;box-shadow:0 0 0 1.1px rgba(10,12,8,.8), inset 0 .8px 0 rgba(255,255,255,.18);"><svg style="left:-1242px;top:23.54999999999999px" width="1290" height="1" viewBox="0 0 1290 1" fill="#f9b8e8"><rect x="1242" y="-.4" width="48.0" height=".8" opacity=".8"/><use href="#wv4" x="1156.4"/><use href="#wv4" x="1254.1"/></svg><span class="t" style="left:3.9px;top:3px;font-size:8.7px;color:rgba(255,255,255,.92);-webkit-text-stroke:.2px rgba(255,255,255,.8);">Room Mic</span><svg style="left:50px;top:2.8px;" width="8" height="9" viewBox="0 0 8 9"><path d="M.8 .7 H7.2 M.8 8.3 H7.2" stroke="rgba(255,255,255,.85)" stroke-width=".9"/><ellipse cx="4" cy="4.5" rx="3" ry="2.4" fill="none" stroke="rgba(255,255,255,.85)" stroke-width=".9"/></svg></div>
<div class="" style="left:200.3px;top:108px;width:1.8px;height:300.7px;background:rgba(172,172,172,.88);"></div>
<svg style="left:195.2px;top:94.8px;" width="12" height="14" viewBox="0 0 12 14"><path d="M.8 2.2 Q.8 .6 2.4 .6 H9.6 Q11.2 .6 11.2 2.2 V6.6 L6 13.4 L.8 6.6 Z" fill="#bcc2c9" stroke="#e2e6ea" stroke-width=".7"/><path d="M6 1.4 V13" stroke="#8d949c" stroke-width=".9"/><path d="M3.4 1.6 V9 M8.6 1.6 V9" stroke="#aab0b8" stroke-width=".6"/></svg>
</div>
<div class="abs" id="mix" style="left:0;top:0;width:1286px;height:804px;">
<div class="" style="left:0px;top:410.5px;width:1286px;height:27.7px;background:#3d3d3d;"></div>
<div class="" style="left:0px;top:438.2px;width:1286px;height:366px;background:#555;"></div>
<div class="btn" style="left:7.8px;top:417.6px;width:24.1px;height:14.8px;background:#4a4a4a;border-radius:4px;height:14.8px;"><svg style="left:7.9px;top:2.6px;" width="9" height="10" viewBox="0 0 9 10"><path d="M1.2 3.6 L3.7 1 L6.2 3.6 M3.7 1.2 V6.2 Q3.7 8.6 6.1 8.6 H7.6" fill="none" stroke="#9a9a9a" stroke-width="1.1" stroke-linecap="round" stroke-linejoin="round"/></svg></div>
<div class="btn" style="left:39.2px;top:417.6px;width:154.8px;height:14.8px;background:#575757;border-radius:4px;height:14.8px;"><span class="t " style="left:7.5px;top:2.4px;font-size:10px;">Edit</span><svg style="left:33px;top:5.8px;" width="5.4" height="4" viewBox="0 0 5.4 4"><path d="M0.5 0.5 L2.7 3 L4.9 0.5" fill="none" stroke="#a8a8a8" stroke-width="1.1" stroke-linecap="round" stroke-linejoin="round"/></svg><div class="" style="left:44.3px;top:0px;width:1px;height:14.8px;background:#474747;"></div><span class="t " style="left:52px;top:2.4px;font-size:10px;">Options</span><svg style="left:95px;top:5.8px;" width="5.4" height="4" viewBox="0 0 5.4 4"><path d="M0.5 0.5 L2.7 3 L4.9 0.5" fill="none" stroke="#a8a8a8" stroke-width="1.1" stroke-linecap="round" stroke-linejoin="round"/></svg><div class="" style="left:106.2px;top:0px;width:1px;height:14.8px;background:#474747;"></div><span class="t " style="left:114.5px;top:2.4px;font-size:10px;">View</span><svg style="left:144px;top:5.8px;" width="5.4" height="4" viewBox="0 0 5.4 4"><path d="M0.5 0.5 L2.7 3 L4.9 0.5" fill="none" stroke="#a8a8a8" stroke-width="1.1" stroke-linecap="round" stroke-linejoin="round"/></svg></div>
<span class="t " style="left:202.2px;top:420.0px;font-size:9.85px;color:#a8a8a8;">Sends on Faders:</span>
<div class="btn" style="left:282.4px;top:417.6px;width:109.6px;height:14.8px;background:#575757;border-radius:4px;height:14.8px;"><div class="" style="left:22.4px;top:0px;width:1px;height:14.8px;background:#474747;"></div><span class="t " style="left:31.2px;top:2.4px;font-size:10px;">Off</span><svg style="left:99px;top:2px;" width="7" height="11" viewBox="0 0 7 11"><path d="M1 4 L3.5 1.2 L6 4 M1 7 L3.5 9.8 L6 7" fill="none" stroke="#d8d8d8" stroke-width="1.2" stroke-linecap="round" stroke-linejoin="round"/></svg><svg style="left:6.4px;top:2.6px;" width="10" height="10" viewBox="0 0 10 10"><path d="M3 2.4 A3.9 3.9 0 1 0 7 2.4 M5 .6 V4.6" fill="none" stroke="#dcdcdc" stroke-width="1" stroke-linecap="round"/></svg></div>
<div class="btn" style="left:1262.6px;top:417.6px;width:14px;height:14.8px;background:#2a70d0;border-radius:4px;height:14.8px;"><svg style="left:2.4px;top:3px;" width="9" height="9" viewBox="0 0 9 9"><rect x=".5" y=".5" width="8" height="8" rx="1.2" fill="none" stroke="#dfe9f7" stroke-width="1"/><path d="M3.2 .5 V8.5" stroke="#dfe9f7" stroke-width="1"/></svg></div>
<span class="t" style="right:1247.2px;top:447px;font-size:8.8px;color:#d6d6d6;">Input</span>
<span class="t" style="right:1247.2px;top:466px;font-size:8.8px;color:#d6d6d6;">Audio FX</span>
<span class="t" style="right:1247.2px;top:551.7px;font-size:8.8px;color:#d6d6d6;">Output</span>
<span class="t" style="right:1247.2px;top:576.5px;font-size:8.8px;color:#d6d6d6;">Pan</span>
<span class="t" style="right:1247.2px;top:601.5px;font-size:8.8px;color:#d6d6d6;">dB</span>
<span class="t" style="right:1252.8px;top:625.8px;font-size:6.4px;color:#bdbdbd;">6</span>
<span class="t" style="right:1252.8px;top:638.6px;font-size:6.4px;color:#bdbdbd;">3</span>
<span class="t" style="right:1252.8px;top:651.2px;font-size:6.4px;color:#bdbdbd;">0</span>
<span class="t" style="right:1252.8px;top:663.9px;font-size:6.4px;color:#bdbdbd;">3</span>
<span class="t" style="right:1252.8px;top:677.1px;font-size:6.4px;color:#bdbdbd;">6</span>
<span class="t" style="right:1252.8px;top:685.4px;font-size:6.4px;color:#bdbdbd;">10</span>
<span class="t" style="right:1252.8px;top:695.8px;font-size:6.4px;color:#bdbdbd;">15</span>
<span class="t" style="right:1252.8px;top:703.9px;font-size:6.4px;color:#bdbdbd;">20</span>
<span class="t" style="right:1252.8px;top:712.9px;font-size:6.4px;color:#bdbdbd;">30</span>
<span class="t" style="right:1252.8px;top:717.3px;font-size:6.4px;color:#bdbdbd;">40</span>
<span class="t" style="right:1252.8px;top:725.3px;font-size:6.4px;color:#bdbdbd;">∞</span>
<div class="" style="left:43.2px;top:438.2px;width:1.4px;height:366px;background:#3a3a3a;"></div>
<svg style="left:0;top:0" width="1286" height="804"><rect x="35" y="628.5" width="8.4" height="1.2" fill="#858585"/><rect x="35" y="641.3" width="8.4" height="1.2" fill="#858585"/><rect x="35" y="653.9" width="8.4" height="1.2" fill="#f2f2f2"/><rect x="35" y="666.6" width="8.4" height="1.2" fill="#858585"/><rect x="35" y="679.8" width="8.4" height="1.2" fill="#858585"/><rect x="35" y="688.1" width="8.4" height="1.2" fill="#858585"/><rect x="35" y="698.5" width="8.4" height="1.2" fill="#858585"/><rect x="35" y="706.6" width="8.4" height="1.2" fill="#858585"/><rect x="35" y="715.6" width="8.4" height="1.2" fill="#858585"/><rect x="35" y="720.0" width="8.4" height="1.2" fill="#858585"/><rect x="35" y="728.0" width="8.4" height="1.2" fill="#858585"/><rect x="39.8" y="632.9" width="3.6" height="1" fill="#7a7a7a"/><rect x="39.8" y="637.1" width="3.6" height="1" fill="#7a7a7a"/><rect x="39.8" y="645.6" width="3.6" height="1" fill="#7a7a7a"/><rect x="39.8" y="649.8" width="3.6" height="1" fill="#7a7a7a"/><rect x="39.8" y="658.2" width="3.6" height="1" fill="#7a7a7a"/><rect x="39.8" y="662.5" width="3.6" height="1" fill="#7a7a7a"/><rect x="39.8" y="671.1" width="3.6" height="1" fill="#7a7a7a"/><rect x="39.8" y="675.5" width="3.6" height="1" fill="#7a7a7a"/><rect x="39.8" y="684.0" width="3.6" height="1" fill="#7a7a7a"/><rect x="39.8" y="690.8" width="3.6" height="1" fill="#7a7a7a"/><rect x="39.8" y="693.4" width="3.6" height="1" fill="#7a7a7a"/><rect x="39.8" y="696.0" width="3.6" height="1" fill="#7a7a7a"/><rect x="39.8" y="700.6" width="3.6" height="1" fill="#7a7a7a"/><rect x="39.8" y="702.7" width="3.6" height="1" fill="#7a7a7a"/><rect x="39.8" y="704.7" width="3.6" height="1" fill="#7a7a7a"/><rect x="39.8" y="709.0" width="3.6" height="1" fill="#7a7a7a"/><rect x="39.8" y="711.2" width="3.6" height="1" fill="#7a7a7a"/><rect x="39.8" y="713.5" width="3.6" height="1" fill="#7a7a7a"/><rect x="39.8" y="722.8" width="3.6" height="1" fill="#7a7a7a"/><rect x="39.8" y="725.4" width="3.6" height="1" fill="#7a7a7a"/><circle cx="72.8" cy="581.6" r="12.6" fill="#4a4a4a"/><circle cx="72.8" cy="581.6" r="11.2" fill="#383838"/><circle cx="72.8" cy="581.6" r="7.4" fill="none" stroke="#414141" stroke-width=".7"/><circle cx="72.8" cy="581.6" r="3.8" fill="none" stroke="#414141" stroke-width=".7"/><path d="M61.8 581.6 H83.8 M72.8 570.6 V592.6" stroke="#414141" stroke-width=".7"/><circle cx="72.8" cy="566.0" r="1" fill="#7e7e7e"/><circle cx="83.8" cy="570.6" r="1" fill="#7e7e7e"/><circle cx="88.4" cy="581.6" r="1" fill="#7e7e7e"/><circle cx="83.8" cy="592.6" r="1" fill="#7e7e7e"/><circle cx="61.8" cy="592.6" r="1" fill="#7e7e7e"/><circle cx="57.2" cy="581.6" r="1" fill="#7e7e7e"/><circle cx="61.8" cy="570.6" r="1" fill="#7e7e7e"/><circle cx="72.8" cy="578.8" r="2" fill="#44dd62"/><rect x="50.1" y="628.5" width="8.8" height="1.2" fill="#858585"/><rect x="50.1" y="641.3" width="8.8" height="1.2" fill="#858585"/><rect x="50.1" y="653.9" width="8.8" height="1.2" fill="#f2f2f2"/><rect x="50.1" y="666.6" width="8.8" height="1.2" fill="#858585"/><rect x="50.1" y="679.8" width="8.8" height="1.2" fill="#858585"/><rect x="50.1" y="688.1" width="8.8" height="1.2" fill="#858585"/><rect x="50.1" y="698.5" width="8.8" height="1.2" fill="#858585"/><rect x="50.1" y="706.6" width="8.8" height="1.2" fill="#858585"/><rect x="50.1" y="715.6" width="8.8" height="1.2" fill="#858585"/><rect x="50.1" y="720.0" width="8.8" height="1.2" fill="#858585"/><rect x="50.1" y="728.0" width="8.8" height="1.2" fill="#858585"/><rect x="55.3" y="632.9" width="3.6" height="1" fill="#7a7a7a"/><rect x="55.3" y="637.1" width="3.6" height="1" fill="#7a7a7a"/><rect x="55.3" y="645.6" width="3.6" height="1" fill="#7a7a7a"/><rect x="55.3" y="649.8" width="3.6" height="1" fill="#7a7a7a"/><rect x="55.3" y="658.2" width="3.6" height="1" fill="#7a7a7a"/><rect x="55.3" y="662.5" width="3.6" height="1" fill="#7a7a7a"/><rect x="55.3" y="671.1" width="3.6" height="1" fill="#7a7a7a"/><rect x="55.3" y="675.5" width="3.6" height="1" fill="#7a7a7a"/><rect x="55.3" y="684.0" width="3.6" height="1" fill="#7a7a7a"/><rect x="55.3" y="690.8" width="3.6" height="1" fill="#7a7a7a"/><rect x="55.3" y="693.4" width="3.6" height="1" fill="#7a7a7a"/><rect x="55.3" y="696.0" width="3.6" height="1" fill="#7a7a7a"/><rect x="55.3" y="700.6" width="3.6" height="1" fill="#7a7a7a"/><rect x="55.3" y="702.7" width="3.6" height="1" fill="#7a7a7a"/><rect x="55.3" y="704.7" width="3.6" height="1" fill="#7a7a7a"/><rect x="55.3" y="709.0" width="3.6" height="1" fill="#7a7a7a"/><rect x="55.3" y="711.2" width="3.6" height="1" fill="#7a7a7a"/><rect x="55.3" y="713.5" width="3.6" height="1" fill="#7a7a7a"/><rect x="55.3" y="722.8" width="3.6" height="1" fill="#7a7a7a"/><rect x="55.3" y="725.4" width="3.6" height="1" fill="#7a7a7a"/><rect x="59.1" y="627.6" width="1.7" height="102" fill="#2e2e2e"/><rect x="81.1" y="627.2" width="10.6" height="29.6" rx="1.5" fill="#3a3a3a"/><rect x="81.1" y="660.2" width="10.6" height="70" rx="1.5" fill="#3a3a3a"/><rect x="84.02" y="709.5" width="1.1" height="20.1" fill="#3fb457"/><rect x="85.94" y="708" width="1.1" height="21.6" fill="#3fb457"/><rect x="78.1" y="628.7" width="1.6" height=".8" fill="#bdbdbd"/><rect x="78.1" y="635.7" width="1.6" height=".8" fill="#bdbdbd"/><rect x="78.1" y="642.7" width="1.6" height=".8" fill="#bdbdbd"/><rect x="78.1" y="648.9" width="1.6" height=".8" fill="#bdbdbd"/><rect x="78.1" y="655.1" width="1.6" height=".8" fill="#bdbdbd"/><rect x="78.1" y="661.6" width="1.6" height=".8" fill="#bdbdbd"/><rect x="78.1" y="670.6" width="1.6" height=".8" fill="#bdbdbd"/><rect x="78.1" y="679.6" width="1.6" height=".8" fill="#bdbdbd"/><rect x="78.1" y="688.3" width="1.6" height=".8" fill="#bdbdbd"/><rect x="78.1" y="697.1" width="1.6" height=".8" fill="#bdbdbd"/><rect x="78.1" y="703.4" width="1.6" height=".8" fill="#bdbdbd"/><rect x="78.1" y="713.5" width="1.6" height=".8" fill="#bdbdbd"/><rect x="78.1" y="723.3" width="1.6" height=".8" fill="#bdbdbd"/><rect x="78.1" y="728.2" width="1.6" height=".8" fill="#bdbdbd"/><rect x="102.2" y="438.2" width="1" height="327.0" fill="#474747"/><circle cx="131.6" cy="581.6" r="12.6" fill="#4a4a4a"/><circle cx="131.6" cy="581.6" r="11.2" fill="#383838"/><circle cx="131.6" cy="581.6" r="7.4" fill="none" stroke="#414141" stroke-width=".7"/><circle cx="131.6" cy="581.6" r="3.8" fill="none" stroke="#414141" stroke-width=".7"/><path d="M120.6 581.6 H142.6 M131.6 570.6 V592.6" stroke="#414141" stroke-width=".7"/><circle cx="131.6" cy="566.0" r="1" fill="#7e7e7e"/><circle cx="142.6" cy="570.6" r="1" fill="#7e7e7e"/><circle cx="147.2" cy="581.6" r="1" fill="#7e7e7e"/><circle cx="142.6" cy="592.6" r="1" fill="#7e7e7e"/><circle cx="120.6" cy="592.6" r="1" fill="#7e7e7e"/><circle cx="116.0" cy="581.6" r="1" fill="#7e7e7e"/><circle cx="120.6" cy="570.6" r="1" fill="#7e7e7e"/><circle cx="131.0" cy="579.0" r="2" fill="#44dd62"/><rect x="108.9" y="628.5" width="8.8" height="1.2" fill="#858585"/><rect x="108.9" y="641.3" width="8.8" height="1.2" fill="#858585"/><rect x="108.9" y="653.9" width="8.8" height="1.2" fill="#f2f2f2"/><rect x="108.9" y="666.6" width="8.8" height="1.2" fill="#858585"/><rect x="108.9" y="679.8" width="8.8" height="1.2" fill="#858585"/><rect x="108.9" y="688.1" width="8.8" height="1.2" fill="#858585"/><rect x="108.9" y="698.5" width="8.8" height="1.2" fill="#858585"/><rect x="108.9" y="706.6" width="8.8" height="1.2" fill="#858585"/><rect x="108.9" y="715.6" width="8.8" height="1.2" fill="#858585"/><rect x="108.9" y="720.0" width="8.8" height="1.2" fill="#858585"/><rect x="108.9" y="728.0" width="8.8" height="1.2" fill="#858585"/><rect x="114.1" y="632.9" width="3.6" height="1" fill="#7a7a7a"/><rect x="114.1" y="637.1" width="3.6" height="1" fill="#7a7a7a"/><rect x="114.1" y="645.6" width="3.6" height="1" fill="#7a7a7a"/><rect x="114.1" y="649.8" width="3.6" height="1" fill="#7a7a7a"/><rect x="114.1" y="658.2" width="3.6" height="1" fill="#7a7a7a"/><rect x="114.1" y="662.5" width="3.6" height="1" fill="#7a7a7a"/><rect x="114.1" y="671.1" width="3.6" height="1" fill="#7a7a7a"/><rect x="114.1" y="675.5" width="3.6" height="1" fill="#7a7a7a"/><rect x="114.1" y="684.0" width="3.6" height="1" fill="#7a7a7a"/><rect x="114.1" y="690.8" width="3.6" height="1" fill="#7a7a7a"/><rect x="114.1" y="693.4" width="3.6" height="1" fill="#7a7a7a"/><rect x="114.1" y="696.0" width="3.6" height="1" fill="#7a7a7a"/><rect x="114.1" y="700.6" width="3.6" height="1" fill="#7a7a7a"/><rect x="114.1" y="702.7" width="3.6" height="1" fill="#7a7a7a"/><rect x="114.1" y="704.7" width="3.6" height="1" fill="#7a7a7a"/><rect x="114.1" y="709.0" width="3.6" height="1" fill="#7a7a7a"/><rect x="114.1" y="711.2" width="3.6" height="1" fill="#7a7a7a"/><rect x="114.1" y="713.5" width="3.6" height="1" fill="#7a7a7a"/><rect x="114.1" y="722.8" width="3.6" height="1" fill="#7a7a7a"/><rect x="114.1" y="725.4" width="3.6" height="1" fill="#7a7a7a"/><rect x="117.9" y="627.6" width="1.7" height="102" fill="#2e2e2e"/><rect x="139.9" y="627.2" width="10.6" height="29.6" rx="1.5" fill="#3a3a3a"/><rect x="139.9" y="660.2" width="10.6" height="70" rx="1.5" fill="#3a3a3a"/><rect x="142.5" y="644" width="1.1" height="12.0" fill="#3fb457"/><rect x="146.7" y="646.2" width="1.1" height="9.8" fill="#3fb457"/><rect x="140.85" y="705" width="0.95" height="24.6" fill="#3fb457"/><rect x="141.81" y="693" width="0.95" height="36.6" fill="#3fb457"/><rect x="142.77" y="686.6" width="0.95" height="43.0" fill="#3fb457"/><rect x="143.73" y="690" width="0.95" height="39.6" fill="#3fb457"/><rect x="144.69" y="695" width="0.95" height="34.6" fill="#3fb457"/><rect x="145.65" y="701" width="0.95" height="28.6" fill="#3fb457"/><rect x="146.61" y="705" width="0.95" height="24.6" fill="#3fb457"/><rect x="147.57" y="709" width="0.95" height="20.6" fill="#3fb457"/><rect x="148.53" y="711.5" width="0.95" height="18.1" fill="#3fb457"/><rect x="136.9" y="628.7" width="1.6" height=".8" fill="#bdbdbd"/><rect x="136.9" y="635.7" width="1.6" height=".8" fill="#bdbdbd"/><rect x="136.9" y="642.7" width="1.6" height=".8" fill="#bdbdbd"/><rect x="136.9" y="648.9" width="1.6" height=".8" fill="#bdbdbd"/><rect x="136.9" y="655.1" width="1.6" height=".8" fill="#bdbdbd"/><rect x="136.9" y="661.6" width="1.6" height=".8" fill="#bdbdbd"/><rect x="136.9" y="670.6" width="1.6" height=".8" fill="#bdbdbd"/><rect x="136.9" y="679.6" width="1.6" height=".8" fill="#bdbdbd"/><rect x="136.9" y="688.3" width="1.6" height=".8" fill="#bdbdbd"/><rect x="136.9" y="697.1" width="1.6" height=".8" fill="#bdbdbd"/><rect x="136.9" y="703.4" width="1.6" height=".8" fill="#bdbdbd"/><rect x="136.9" y="713.5" width="1.6" height=".8" fill="#bdbdbd"/><rect x="136.9" y="723.3" width="1.6" height=".8" fill="#bdbdbd"/><rect x="136.9" y="728.2" width="1.6" height=".8" fill="#bdbdbd"/><rect x="160.9" y="438.2" width="1" height="327.0" fill="#474747"/><circle cx="190.3" cy="581.6" r="12.6" fill="#4a4a4a"/><circle cx="190.3" cy="581.6" r="11.2" fill="#383838"/><circle cx="190.3" cy="581.6" r="7.4" fill="none" stroke="#414141" stroke-width=".7"/><circle cx="190.3" cy="581.6" r="3.8" fill="none" stroke="#414141" stroke-width=".7"/><path d="M179.3 581.6 H201.3 M190.3 570.6 V592.6" stroke="#414141" stroke-width=".7"/><circle cx="190.3" cy="566.0" r="1" fill="#7e7e7e"/><circle cx="201.3" cy="570.6" r="1" fill="#7e7e7e"/><circle cx="205.9" cy="581.6" r="1" fill="#7e7e7e"/><circle cx="201.3" cy="592.6" r="1" fill="#7e7e7e"/><circle cx="179.3" cy="592.6" r="1" fill="#7e7e7e"/><circle cx="174.7" cy="581.6" r="1" fill="#7e7e7e"/><circle cx="179.3" cy="570.6" r="1" fill="#7e7e7e"/><circle cx="190.7" cy="579.3" r="2" fill="#44dd62"/><rect x="167.6" y="628.5" width="8.8" height="1.2" fill="#858585"/><rect x="167.6" y="641.3" width="8.8" height="1.2" fill="#858585"/><rect x="167.6" y="653.9" width="8.8" height="1.2" fill="#f2f2f2"/><rect x="167.6" y="666.6" width="8.8" height="1.2" fill="#858585"/><rect x="167.6" y="679.8" width="8.8" height="1.2" fill="#858585"/><rect x="167.6" y="688.1" width="8.8" height="1.2" fill="#858585"/><rect x="167.6" y="698.5" width="8.8" height="1.2" fill="#858585"/><rect x="167.6" y="706.6" width="8.8" height="1.2" fill="#858585"/><rect x="167.6" y="715.6" width="8.8" height="1.2" fill="#858585"/><rect x="167.6" y="720.0" width="8.8" height="1.2" fill="#858585"/><rect x="167.6" y="728.0" width="8.8" height="1.2" fill="#858585"/><rect x="172.8" y="632.9" width="3.6" height="1" fill="#7a7a7a"/><rect x="172.8" y="637.1" width="3.6" height="1" fill="#7a7a7a"/><rect x="172.8" y="645.6" width="3.6" height="1" fill="#7a7a7a"/><rect x="172.8" y="649.8" width="3.6" height="1" fill="#7a7a7a"/><rect x="172.8" y="658.2" width="3.6" height="1" fill="#7a7a7a"/><rect x="172.8" y="662.5" width="3.6" height="1" fill="#7a7a7a"/><rect x="172.8" y="671.1" width="3.6" height="1" fill="#7a7a7a"/><rect x="172.8" y="675.5" width="3.6" height="1" fill="#7a7a7a"/><rect x="172.8" y="684.0" width="3.6" height="1" fill="#7a7a7a"/><rect x="172.8" y="690.8" width="3.6" height="1" fill="#7a7a7a"/><rect x="172.8" y="693.4" width="3.6" height="1" fill="#7a7a7a"/><rect x="172.8" y="696.0" width="3.6" height="1" fill="#7a7a7a"/><rect x="172.8" y="700.6" width="3.6" height="1" fill="#7a7a7a"/><rect x="172.8" y="702.7" width="3.6" height="1" fill="#7a7a7a"/><rect x="172.8" y="704.7" width="3.6" height="1" fill="#7a7a7a"/><rect x="172.8" y="709.0" width="3.6" height="1" fill="#7a7a7a"/><rect x="172.8" y="711.2" width="3.6" height="1" fill="#7a7a7a"/><rect x="172.8" y="713.5" width="3.6" height="1" fill="#7a7a7a"/><rect x="172.8" y="722.8" width="3.6" height="1" fill="#7a7a7a"/><rect x="172.8" y="725.4" width="3.6" height="1" fill="#7a7a7a"/><rect x="176.6" y="627.6" width="1.7" height="102" fill="#2e2e2e"/><rect x="198.6" y="627.2" width="10.6" height="29.6" rx="1.5" fill="#3a3a3a"/><rect x="198.6" y="660.2" width="10.6" height="70" rx="1.5" fill="#3a3a3a"/><rect x="201.2" y="643" width="1.1" height="13.0" fill="#3fb457"/><rect x="205.4" y="641.5" width="1.1" height="14.5" fill="#3fb457"/><rect x="199.60" y="708" width="0.95" height="21.6" fill="#3fb457"/><rect x="200.56" y="702" width="0.95" height="27.6" fill="#3fb457"/><rect x="201.52" y="697" width="0.95" height="32.6" fill="#3fb457"/><rect x="202.48" y="692" width="0.95" height="37.6" fill="#3fb457"/><rect x="203.44" y="689" width="0.95" height="40.6" fill="#3fb457"/><rect x="204.40" y="691" width="0.95" height="38.6" fill="#3fb457"/><rect x="205.36" y="696" width="0.95" height="33.6" fill="#3fb457"/><rect x="206.32" y="700" width="0.95" height="29.6" fill="#3fb457"/><rect x="207.28" y="704" width="0.95" height="25.6" fill="#3fb457"/><rect x="195.6" y="628.7" width="1.6" height=".8" fill="#bdbdbd"/><rect x="195.6" y="635.7" width="1.6" height=".8" fill="#bdbdbd"/><rect x="195.6" y="642.7" width="1.6" height=".8" fill="#bdbdbd"/><rect x="195.6" y="648.9" width="1.6" height=".8" fill="#bdbdbd"/><rect x="195.6" y="655.1" width="1.6" height=".8" fill="#bdbdbd"/><rect x="195.6" y="661.6" width="1.6" height=".8" fill="#bdbdbd"/><rect x="195.6" y="670.6" width="1.6" height=".8" fill="#bdbdbd"/><rect x="195.6" y="679.6" width="1.6" height=".8" fill="#bdbdbd"/><rect x="195.6" y="688.3" width="1.6" height=".8" fill="#bdbdbd"/><rect x="195.6" y="697.1" width="1.6" height=".8" fill="#bdbdbd"/><rect x="195.6" y="703.4" width="1.6" height=".8" fill="#bdbdbd"/><rect x="195.6" y="713.5" width="1.6" height=".8" fill="#bdbdbd"/><rect x="195.6" y="723.3" width="1.6" height=".8" fill="#bdbdbd"/><rect x="195.6" y="728.2" width="1.6" height=".8" fill="#bdbdbd"/><rect x="219.7" y="438.2" width="1" height="327.0" fill="#474747"/><circle cx="249.1" cy="581.6" r="12.6" fill="#4a4a4a"/><circle cx="249.1" cy="581.6" r="11.2" fill="#383838"/><circle cx="249.1" cy="581.6" r="7.4" fill="none" stroke="#414141" stroke-width=".7"/><circle cx="249.1" cy="581.6" r="3.8" fill="none" stroke="#414141" stroke-width=".7"/><path d="M238.1 581.6 H260.1 M249.1 570.6 V592.6" stroke="#414141" stroke-width=".7"/><circle cx="249.1" cy="566.0" r="1" fill="#7e7e7e"/><circle cx="260.1" cy="570.6" r="1" fill="#7e7e7e"/><circle cx="264.7" cy="581.6" r="1" fill="#7e7e7e"/><circle cx="260.1" cy="592.6" r="1" fill="#7e7e7e"/><circle cx="238.1" cy="592.6" r="1" fill="#7e7e7e"/><circle cx="233.5" cy="581.6" r="1" fill="#7e7e7e"/><circle cx="238.1" cy="570.6" r="1" fill="#7e7e7e"/><circle cx="248.7" cy="577.6" r="2" fill="#44dd62"/><rect x="226.3" y="628.5" width="8.8" height="1.2" fill="#858585"/><rect x="226.3" y="641.3" width="8.8" height="1.2" fill="#858585"/><rect x="226.3" y="653.9" width="8.8" height="1.2" fill="#f2f2f2"/><rect x="226.3" y="666.6" width="8.8" height="1.2" fill="#858585"/><rect x="226.3" y="679.8" width="8.8" height="1.2" fill="#858585"/><rect x="226.3" y="688.1" width="8.8" height="1.2" fill="#858585"/><rect x="226.3" y="698.5" width="8.8" height="1.2" fill="#858585"/><rect x="226.3" y="706.6" width="8.8" height="1.2" fill="#858585"/><rect x="226.3" y="715.6" width="8.8" height="1.2" fill="#858585"/><rect x="226.3" y="720.0" width="8.8" height="1.2" fill="#858585"/><rect x="226.3" y="728.0" width="8.8" height="1.2" fill="#858585"/><rect x="231.6" y="632.9" width="3.6" height="1" fill="#7a7a7a"/><rect x="231.6" y="637.1" width="3.6" height="1" fill="#7a7a7a"/><rect x="231.6" y="645.6" width="3.6" height="1" fill="#7a7a7a"/><rect x="231.6" y="649.8" width="3.6" height="1" fill="#7a7a7a"/><rect x="231.6" y="658.2" width="3.6" height="1" fill="#7a7a7a"/><rect x="231.6" y="662.5" width="3.6" height="1" fill="#7a7a7a"/><rect x="231.6" y="671.1" width="3.6" height="1" fill="#7a7a7a"/><rect x="231.6" y="675.5" width="3.6" height="1" fill="#7a7a7a"/><rect x="231.6" y="684.0" width="3.6" height="1" fill="#7a7a7a"/><rect x="231.6" y="690.8" width="3.6" height="1" fill="#7a7a7a"/><rect x="231.6" y="693.4" width="3.6" height="1" fill="#7a7a7a"/><rect x="231.6" y="696.0" width="3.6" height="1" fill="#7a7a7a"/><rect x="231.6" y="700.6" width="3.6" height="1" fill="#7a7a7a"/><rect x="231.6" y="702.7" width="3.6" height="1" fill="#7a7a7a"/><rect x="231.6" y="704.7" width="3.6" height="1" fill="#7a7a7a"/><rect x="231.6" y="709.0" width="3.6" height="1" fill="#7a7a7a"/><rect x="231.6" y="711.2" width="3.6" height="1" fill="#7a7a7a"/><rect x="231.6" y="713.5" width="3.6" height="1" fill="#7a7a7a"/><rect x="231.6" y="722.8" width="3.6" height="1" fill="#7a7a7a"/><rect x="231.6" y="725.4" width="3.6" height="1" fill="#7a7a7a"/><rect x="235.3" y="627.6" width="1.7" height="102" fill="#2e2e2e"/><rect x="257.4" y="627.2" width="10.6" height="29.6" rx="1.5" fill="#3a3a3a"/><rect x="257.4" y="660.2" width="10.6" height="70" rx="1.5" fill="#3a3a3a"/><rect x="260.0" y="644" width="1.1" height="12.0" fill="#3fb457"/><rect x="264.2" y="644" width="1.1" height="12.0" fill="#3fb457"/><rect x="258.35" y="712" width="0.95" height="17.6" fill="#3fb457"/><rect x="259.31" y="706" width="0.95" height="23.6" fill="#3fb457"/><rect x="260.27" y="697" width="0.95" height="32.6" fill="#3fb457"/><rect x="261.23" y="688" width="0.95" height="41.6" fill="#3fb457"/><rect x="262.19" y="684" width="0.95" height="45.6" fill="#3fb457"/><rect x="263.15" y="690" width="0.95" height="39.6" fill="#3fb457"/><rect x="264.11" y="698" width="0.95" height="31.6" fill="#3fb457"/><rect x="265.07" y="706" width="0.95" height="23.6" fill="#3fb457"/><rect x="266.03" y="712" width="0.95" height="17.6" fill="#3fb457"/><rect x="254.4" y="628.7" width="1.6" height=".8" fill="#bdbdbd"/><rect x="254.4" y="635.7" width="1.6" height=".8" fill="#bdbdbd"/><rect x="254.4" y="642.7" width="1.6" height=".8" fill="#bdbdbd"/><rect x="254.4" y="648.9" width="1.6" height=".8" fill="#bdbdbd"/><rect x="254.4" y="655.1" width="1.6" height=".8" fill="#bdbdbd"/><rect x="254.4" y="661.6" width="1.6" height=".8" fill="#bdbdbd"/><rect x="254.4" y="670.6" width="1.6" height=".8" fill="#bdbdbd"/><rect x="254.4" y="679.6" width="1.6" height=".8" fill="#bdbdbd"/><rect x="254.4" y="688.3" width="1.6" height=".8" fill="#bdbdbd"/><rect x="254.4" y="697.1" width="1.6" height=".8" fill="#bdbdbd"/><rect x="254.4" y="703.4" width="1.6" height=".8" fill="#bdbdbd"/><rect x="254.4" y="713.5" width="1.6" height=".8" fill="#bdbdbd"/><rect x="254.4" y="723.3" width="1.6" height=".8" fill="#bdbdbd"/><rect x="254.4" y="728.2" width="1.6" height=".8" fill="#bdbdbd"/><rect x="278.4" y="438.2" width="1" height="327.0" fill="#474747"/><rect x="295.40000000000003" y="569.8" width="24.8" height="24.4" rx="1.5" fill="#3a3a3a" stroke="#474747" stroke-width=".8"/><path d="M301.6 570.3 V593.8 M295.90000000000003 575.9 H319.70000000000005" stroke="#484848" stroke-width=".6"/><path d="M307.8 570.3 V593.8 M295.90000000000003 582.0 H319.70000000000005" stroke="#484848" stroke-width=".6"/><path d="M314.0 570.3 V593.8 M295.90000000000003 588.1 H319.70000000000005" stroke="#484848" stroke-width=".6"/><path d="M296.6 570.8 H319.00000000000006 L307.8 581.1999999999999 Z" fill="rgba(67,184,90,.28)" stroke="#43b85a" stroke-width=".7"/><path d="M300.40000000000003 572.4 L307.8 578.4 L315.20000000000005 572.4" fill="none" stroke="#43b85a" stroke-width=".6"/><circle cx="307.8" cy="570.4" r="1.9" fill="#44dd62"/><rect x="285.1" y="628.5" width="8.8" height="1.2" fill="#858585"/><rect x="285.1" y="641.3" width="8.8" height="1.2" fill="#858585"/><rect x="285.1" y="653.9" width="8.8" height="1.2" fill="#f2f2f2"/><rect x="285.1" y="666.6" width="8.8" height="1.2" fill="#858585"/><rect x="285.1" y="679.8" width="8.8" height="1.2" fill="#858585"/><rect x="285.1" y="688.1" width="8.8" height="1.2" fill="#858585"/><rect x="285.1" y="698.5" width="8.8" height="1.2" fill="#858585"/><rect x="285.1" y="706.6" width="8.8" height="1.2" fill="#858585"/><rect x="285.1" y="715.6" width="8.8" height="1.2" fill="#858585"/><rect x="285.1" y="720.0" width="8.8" height="1.2" fill="#858585"/><rect x="285.1" y="728.0" width="8.8" height="1.2" fill="#858585"/><rect x="290.3" y="632.9" width="3.6" height="1" fill="#7a7a7a"/><rect x="290.3" y="637.1" width="3.6" height="1" fill="#7a7a7a"/><rect x="290.3" y="645.6" width="3.6" height="1" fill="#7a7a7a"/><rect x="290.3" y="649.8" width="3.6" height="1" fill="#7a7a7a"/><rect x="290.3" y="658.2" width="3.6" height="1" fill="#7a7a7a"/><rect x="290.3" y="662.5" width="3.6" height="1" fill="#7a7a7a"/><rect x="290.3" y="671.1" width="3.6" height="1" fill="#7a7a7a"/><rect x="290.3" y="675.5" width="3.6" height="1" fill="#7a7a7a"/><rect x="290.3" y="684.0" width="3.6" height="1" fill="#7a7a7a"/><rect x="290.3" y="690.8" width="3.6" height="1" fill="#7a7a7a"/><rect x="290.3" y="693.4" width="3.6" height="1" fill="#7a7a7a"/><rect x="290.3" y="696.0" width="3.6" height="1" fill="#7a7a7a"/><rect x="290.3" y="700.6" width="3.6" height="1" fill="#7a7a7a"/><rect x="290.3" y="702.7" width="3.6" height="1" fill="#7a7a7a"/><rect x="290.3" y="704.7" width="3.6" height="1" fill="#7a7a7a"/><rect x="290.3" y="709.0" width="3.6" height="1" fill="#7a7a7a"/><rect x="290.3" y="711.2" width="3.6" height="1" fill="#7a7a7a"/><rect x="290.3" y="713.5" width="3.6" height="1" fill="#7a7a7a"/><rect x="290.3" y="722.8" width="3.6" height="1" fill="#7a7a7a"/><rect x="290.3" y="725.4" width="3.6" height="1" fill="#7a7a7a"/><rect x="294.1" y="627.6" width="1.7" height="102" fill="#2e2e2e"/><rect x="315.7" y="627.2" width="9.799999999999999" height="103.4" rx="1.5" fill="#3a3a3a"/><rect x="317.3" y="684" width="2.7" height="46.0" fill="#4be368"/><rect x="321.5" y="684" width="2.7" height="46.0" fill="#4be368"/><rect x="317.3" y="676.2" width="2.7" height="1" fill="#4be368"/><rect x="321.5" y="675.6" width="2.7" height="1" fill="#4be368"/><rect x="313.1" y="628.9" width="1.6" height=".8" fill="#bdbdbd"/><rect x="313.1" y="635.7" width="1.6" height=".8" fill="#bdbdbd"/><rect x="313.1" y="642.3" width="1.6" height=".8" fill="#bdbdbd"/><rect x="313.1" y="649.1" width="1.6" height=".8" fill="#bdbdbd"/><rect x="313.1" y="655.6" width="1.6" height=".8" fill="#bdbdbd"/><rect x="313.1" y="662.5" width="1.6" height=".8" fill="#bdbdbd"/><rect x="313.1" y="669.0" width="1.6" height=".8" fill="#bdbdbd"/><rect x="313.1" y="675.9" width="1.6" height=".8" fill="#bdbdbd"/><rect x="313.1" y="682.4" width="1.6" height=".8" fill="#bdbdbd"/><rect x="313.1" y="691.1" width="1.6" height=".8" fill="#bdbdbd"/><rect x="313.1" y="698.9" width="1.6" height=".8" fill="#bdbdbd"/><rect x="313.1" y="706.3" width="1.6" height=".8" fill="#bdbdbd"/><rect x="313.1" y="713.8" width="1.6" height=".8" fill="#bdbdbd"/><rect x="313.1" y="721.0" width="1.6" height=".8" fill="#bdbdbd"/><rect x="313.1" y="728.4" width="1.6" height=".8" fill="#bdbdbd"/><rect x="337.1" y="438.2" width="1" height="327.0" fill="#474747"/><circle cx="366.5" cy="581.6" r="12.6" fill="#4a4a4a"/><circle cx="366.5" cy="581.6" r="11.2" fill="#383838"/><circle cx="366.5" cy="581.6" r="7.4" fill="none" stroke="#414141" stroke-width=".7"/><circle cx="366.5" cy="581.6" r="3.8" fill="none" stroke="#414141" stroke-width=".7"/><path d="M355.5 581.6 H377.5 M366.5 570.6 V592.6" stroke="#414141" stroke-width=".7"/><circle cx="366.5" cy="566.0" r="1" fill="#7e7e7e"/><circle cx="377.5" cy="570.6" r="1" fill="#7e7e7e"/><circle cx="382.1" cy="581.6" r="1" fill="#7e7e7e"/><circle cx="377.5" cy="592.6" r="1" fill="#7e7e7e"/><circle cx="355.5" cy="592.6" r="1" fill="#7e7e7e"/><circle cx="350.9" cy="581.6" r="1" fill="#7e7e7e"/><circle cx="355.5" cy="570.6" r="1" fill="#7e7e7e"/><circle cx="366.5" cy="581.6" r="2" fill="#44dd62"/><rect x="343.8" y="628.5" width="8.8" height="1.2" fill="#858585"/><rect x="343.8" y="641.3" width="8.8" height="1.2" fill="#858585"/><rect x="343.8" y="653.9" width="8.8" height="1.2" fill="#f2f2f2"/><rect x="343.8" y="666.6" width="8.8" height="1.2" fill="#858585"/><rect x="343.8" y="679.8" width="8.8" height="1.2" fill="#858585"/><rect x="343.8" y="688.1" width="8.8" height="1.2" fill="#858585"/><rect x="343.8" y="698.5" width="8.8" height="1.2" fill="#858585"/><rect x="343.8" y="706.6" width="8.8" height="1.2" fill="#858585"/><rect x="343.8" y="715.6" width="8.8" height="1.2" fill="#858585"/><rect x="343.8" y="720.0" width="8.8" height="1.2" fill="#858585"/><rect x="343.8" y="728.0" width="8.8" height="1.2" fill="#858585"/><rect x="349.0" y="632.9" width="3.6" height="1" fill="#7a7a7a"/><rect x="349.0" y="637.1" width="3.6" height="1" fill="#7a7a7a"/><rect x="349.0" y="645.6" width="3.6" height="1" fill="#7a7a7a"/><rect x="349.0" y="649.8" width="3.6" height="1" fill="#7a7a7a"/><rect x="349.0" y="658.2" width="3.6" height="1" fill="#7a7a7a"/><rect x="349.0" y="662.5" width="3.6" height="1" fill="#7a7a7a"/><rect x="349.0" y="671.1" width="3.6" height="1" fill="#7a7a7a"/><rect x="349.0" y="675.5" width="3.6" height="1" fill="#7a7a7a"/><rect x="349.0" y="684.0" width="3.6" height="1" fill="#7a7a7a"/><rect x="349.0" y="690.8" width="3.6" height="1" fill="#7a7a7a"/><rect x="349.0" y="693.4" width="3.6" height="1" fill="#7a7a7a"/><rect x="349.0" y="696.0" width="3.6" height="1" fill="#7a7a7a"/><rect x="349.0" y="700.6" width="3.6" height="1" fill="#7a7a7a"/><rect x="349.0" y="702.7" width="3.6" height="1" fill="#7a7a7a"/><rect x="349.0" y="704.7" width="3.6" height="1" fill="#7a7a7a"/><rect x="349.0" y="709.0" width="3.6" height="1" fill="#7a7a7a"/><rect x="349.0" y="711.2" width="3.6" height="1" fill="#7a7a7a"/><rect x="349.0" y="713.5" width="3.6" height="1" fill="#7a7a7a"/><rect x="349.0" y="722.8" width="3.6" height="1" fill="#7a7a7a"/><rect x="349.0" y="725.4" width="3.6" height="1" fill="#7a7a7a"/><rect x="352.8" y="627.6" width="1.7" height="102" fill="#2e2e2e"/><rect x="374.8" y="627.2" width="10.6" height="29.6" rx="1.5" fill="#3a3a3a"/><rect x="374.8" y="660.2" width="10.6" height="70" rx="1.5" fill="#3a3a3a"/><rect x="377.4" y="643.5" width="1.1" height="12.5" fill="#3fb457"/><rect x="381.6" y="645" width="1.1" height="11.0" fill="#3fb457"/><rect x="375.85" y="702" width="0.95" height="27.6" fill="#3fb457"/><rect x="376.81" y="701.6" width="0.95" height="28.0" fill="#3fb457"/><rect x="377.77" y="701.6" width="0.95" height="28.0" fill="#3fb457"/><rect x="378.73" y="701.6" width="0.95" height="28.0" fill="#3fb457"/><rect x="379.69" y="701.2" width="0.95" height="28.4" fill="#3fb457"/><rect x="380.65" y="701.2" width="0.95" height="28.4" fill="#3fb457"/><rect x="381.61" y="701.6" width="0.95" height="28.0" fill="#3fb457"/><rect x="382.57" y="701.6" width="0.95" height="28.0" fill="#3fb457"/><rect x="383.53" y="702" width="0.95" height="27.6" fill="#3fb457"/><rect x="371.8" y="628.7" width="1.6" height=".8" fill="#bdbdbd"/><rect x="371.8" y="635.7" width="1.6" height=".8" fill="#bdbdbd"/><rect x="371.8" y="642.7" width="1.6" height=".8" fill="#bdbdbd"/><rect x="371.8" y="648.9" width="1.6" height=".8" fill="#bdbdbd"/><rect x="371.8" y="655.1" width="1.6" height=".8" fill="#bdbdbd"/><rect x="371.8" y="661.6" width="1.6" height=".8" fill="#bdbdbd"/><rect x="371.8" y="670.6" width="1.6" height=".8" fill="#bdbdbd"/><rect x="371.8" y="679.6" width="1.6" height=".8" fill="#bdbdbd"/><rect x="371.8" y="688.3" width="1.6" height=".8" fill="#bdbdbd"/><rect x="371.8" y="697.1" width="1.6" height=".8" fill="#bdbdbd"/><rect x="371.8" y="703.4" width="1.6" height=".8" fill="#bdbdbd"/><rect x="371.8" y="713.5" width="1.6" height=".8" fill="#bdbdbd"/><rect x="371.8" y="723.3" width="1.6" height=".8" fill="#bdbdbd"/><rect x="371.8" y="728.2" width="1.6" height=".8" fill="#bdbdbd"/><rect x="395.9" y="438.2" width="1" height="327.0" fill="#474747"/><rect x="412.90000000000003" y="569.8" width="24.8" height="24.4" rx="1.5" fill="#3a3a3a" stroke="#474747" stroke-width=".8"/><path d="M419.1 570.3 V593.8 M413.40000000000003 575.9 H437.20000000000005" stroke="#484848" stroke-width=".6"/><path d="M425.3 570.3 V593.8 M413.40000000000003 582.0 H437.20000000000005" stroke="#484848" stroke-width=".6"/><path d="M431.5 570.3 V593.8 M413.40000000000003 588.1 H437.20000000000005" stroke="#484848" stroke-width=".6"/><path d="M414.1 570.8 H436.50000000000006 L425.3 581.1999999999999 Z" fill="rgba(67,184,90,.28)" stroke="#43b85a" stroke-width=".7"/><path d="M417.90000000000003 572.4 L425.3 578.4 L432.70000000000005 572.4" fill="none" stroke="#43b85a" stroke-width=".6"/><circle cx="425.3" cy="570.4" r="1.9" fill="#44dd62"/><rect x="402.6" y="628.5" width="8.8" height="1.2" fill="#858585"/><rect x="402.6" y="641.3" width="8.8" height="1.2" fill="#858585"/><rect x="402.6" y="653.9" width="8.8" height="1.2" fill="#f2f2f2"/><rect x="402.6" y="666.6" width="8.8" height="1.2" fill="#858585"/><rect x="402.6" y="679.8" width="8.8" height="1.2" fill="#858585"/><rect x="402.6" y="688.1" width="8.8" height="1.2" fill="#858585"/><rect x="402.6" y="698.5" width="8.8" height="1.2" fill="#858585"/><rect x="402.6" y="706.6" width="8.8" height="1.2" fill="#858585"/><rect x="402.6" y="715.6" width="8.8" height="1.2" fill="#858585"/><rect x="402.6" y="720.0" width="8.8" height="1.2" fill="#858585"/><rect x="402.6" y="728.0" width="8.8" height="1.2" fill="#858585"/><rect x="407.8" y="632.9" width="3.6" height="1" fill="#7a7a7a"/><rect x="407.8" y="637.1" width="3.6" height="1" fill="#7a7a7a"/><rect x="407.8" y="645.6" width="3.6" height="1" fill="#7a7a7a"/><rect x="407.8" y="649.8" width="3.6" height="1" fill="#7a7a7a"/><rect x="407.8" y="658.2" width="3.6" height="1" fill="#7a7a7a"/><rect x="407.8" y="662.5" width="3.6" height="1" fill="#7a7a7a"/><rect x="407.8" y="671.1" width="3.6" height="1" fill="#7a7a7a"/><rect x="407.8" y="675.5" width="3.6" height="1" fill="#7a7a7a"/><rect x="407.8" y="684.0" width="3.6" height="1" fill="#7a7a7a"/><rect x="407.8" y="690.8" width="3.6" height="1" fill="#7a7a7a"/><rect x="407.8" y="693.4" width="3.6" height="1" fill="#7a7a7a"/><rect x="407.8" y="696.0" width="3.6" height="1" fill="#7a7a7a"/><rect x="407.8" y="700.6" width="3.6" height="1" fill="#7a7a7a"/><rect x="407.8" y="702.7" width="3.6" height="1" fill="#7a7a7a"/><rect x="407.8" y="704.7" width="3.6" height="1" fill="#7a7a7a"/><rect x="407.8" y="709.0" width="3.6" height="1" fill="#7a7a7a"/><rect x="407.8" y="711.2" width="3.6" height="1" fill="#7a7a7a"/><rect x="407.8" y="713.5" width="3.6" height="1" fill="#7a7a7a"/><rect x="407.8" y="722.8" width="3.6" height="1" fill="#7a7a7a"/><rect x="407.8" y="725.4" width="3.6" height="1" fill="#7a7a7a"/><rect x="411.6" y="627.6" width="1.7" height="102" fill="#2e2e2e"/><rect x="433.2" y="627.2" width="9.799999999999999" height="103.4" rx="1.5" fill="#3a3a3a"/><rect x="434.8" y="691.5" width="2.7" height="38.5" fill="#4be368"/><rect x="439.0" y="691.5" width="2.7" height="38.5" fill="#4be368"/><rect x="434.8" y="688.8" width="2.7" height="1" fill="#4be368"/><rect x="439.0" y="688.8" width="2.7" height="1" fill="#4be368"/><rect x="430.6" y="628.9" width="1.6" height=".8" fill="#bdbdbd"/><rect x="430.6" y="635.7" width="1.6" height=".8" fill="#bdbdbd"/><rect x="430.6" y="642.3" width="1.6" height=".8" fill="#bdbdbd"/><rect x="430.6" y="649.1" width="1.6" height=".8" fill="#bdbdbd"/><rect x="430.6" y="655.6" width="1.6" height=".8" fill="#bdbdbd"/><rect x="430.6" y="662.5" width="1.6" height=".8" fill="#bdbdbd"/><rect x="430.6" y="669.0" width="1.6" height=".8" fill="#bdbdbd"/><rect x="430.6" y="675.9" width="1.6" height=".8" fill="#bdbdbd"/><rect x="430.6" y="682.4" width="1.6" height=".8" fill="#bdbdbd"/><rect x="430.6" y="691.1" width="1.6" height=".8" fill="#bdbdbd"/><rect x="430.6" y="698.9" width="1.6" height=".8" fill="#bdbdbd"/><rect x="430.6" y="706.3" width="1.6" height=".8" fill="#bdbdbd"/><rect x="430.6" y="713.8" width="1.6" height=".8" fill="#bdbdbd"/><rect x="430.6" y="721.0" width="1.6" height=".8" fill="#bdbdbd"/><rect x="430.6" y="728.4" width="1.6" height=".8" fill="#bdbdbd"/><rect x="454.6" y="438.2" width="1" height="327.0" fill="#474747"/><circle cx="484.0" cy="581.6" r="12.6" fill="#4a4a4a"/><circle cx="484.0" cy="581.6" r="11.2" fill="#383838"/><circle cx="484.0" cy="581.6" r="7.4" fill="none" stroke="#414141" stroke-width=".7"/><circle cx="484.0" cy="581.6" r="3.8" fill="none" stroke="#414141" stroke-width=".7"/><path d="M473.0 581.6 H495.0 M484.0 570.6 V592.6" stroke="#414141" stroke-width=".7"/><circle cx="484.0" cy="566.0" r="1" fill="#7e7e7e"/><circle cx="495.0" cy="570.6" r="1" fill="#7e7e7e"/><circle cx="499.6" cy="581.6" r="1" fill="#7e7e7e"/><circle cx="495.0" cy="592.6" r="1" fill="#7e7e7e"/><circle cx="473.0" cy="592.6" r="1" fill="#7e7e7e"/><circle cx="468.4" cy="581.6" r="1" fill="#7e7e7e"/><circle cx="473.0" cy="570.6" r="1" fill="#7e7e7e"/><circle cx="481.2" cy="581.2" r="2" fill="#44dd62"/><rect x="461.3" y="628.5" width="8.8" height="1.2" fill="#858585"/><rect x="461.3" y="641.3" width="8.8" height="1.2" fill="#858585"/><rect x="461.3" y="653.9" width="8.8" height="1.2" fill="#f2f2f2"/><rect x="461.3" y="666.6" width="8.8" height="1.2" fill="#858585"/><rect x="461.3" y="679.8" width="8.8" height="1.2" fill="#858585"/><rect x="461.3" y="688.1" width="8.8" height="1.2" fill="#858585"/><rect x="461.3" y="698.5" width="8.8" height="1.2" fill="#858585"/><rect x="461.3" y="706.6" width="8.8" height="1.2" fill="#858585"/><rect x="461.3" y="715.6" width="8.8" height="1.2" fill="#858585"/><rect x="461.3" y="720.0" width="8.8" height="1.2" fill="#858585"/><rect x="461.3" y="728.0" width="8.8" height="1.2" fill="#858585"/><rect x="466.5" y="632.9" width="3.6" height="1" fill="#7a7a7a"/><rect x="466.5" y="637.1" width="3.6" height="1" fill="#7a7a7a"/><rect x="466.5" y="645.6" width="3.6" height="1" fill="#7a7a7a"/><rect x="466.5" y="649.8" width="3.6" height="1" fill="#7a7a7a"/><rect x="466.5" y="658.2" width="3.6" height="1" fill="#7a7a7a"/><rect x="466.5" y="662.5" width="3.6" height="1" fill="#7a7a7a"/><rect x="466.5" y="671.1" width="3.6" height="1" fill="#7a7a7a"/><rect x="466.5" y="675.5" width="3.6" height="1" fill="#7a7a7a"/><rect x="466.5" y="684.0" width="3.6" height="1" fill="#7a7a7a"/><rect x="466.5" y="690.8" width="3.6" height="1" fill="#7a7a7a"/><rect x="466.5" y="693.4" width="3.6" height="1" fill="#7a7a7a"/><rect x="466.5" y="696.0" width="3.6" height="1" fill="#7a7a7a"/><rect x="466.5" y="700.6" width="3.6" height="1" fill="#7a7a7a"/><rect x="466.5" y="702.7" width="3.6" height="1" fill="#7a7a7a"/><rect x="466.5" y="704.7" width="3.6" height="1" fill="#7a7a7a"/><rect x="466.5" y="709.0" width="3.6" height="1" fill="#7a7a7a"/><rect x="466.5" y="711.2" width="3.6" height="1" fill="#7a7a7a"/><rect x="466.5" y="713.5" width="3.6" height="1" fill="#7a7a7a"/><rect x="466.5" y="722.8" width="3.6" height="1" fill="#7a7a7a"/><rect x="466.5" y="725.4" width="3.6" height="1" fill="#7a7a7a"/><rect x="470.3" y="627.6" width="1.7" height="102" fill="#2e2e2e"/><rect x="492.3" y="627.2" width="10.6" height="29.6" rx="1.5" fill="#3a3a3a"/><rect x="492.3" y="660.2" width="10.6" height="70" rx="1.5" fill="#3a3a3a"/><rect x="494.9" y="645.6" width="1.1" height="10.4" fill="#3fb457"/><rect x="499.1" y="647.6" width="1.1" height="8.4" fill="#3fb457"/><rect x="493.35" y="700" width="0.95" height="29.6" fill="#3fb457"/><rect x="494.31" y="698.6" width="0.95" height="31.0" fill="#3fb457"/><rect x="495.27" y="700" width="0.95" height="29.6" fill="#3fb457"/><rect x="496.23" y="703" width="0.95" height="26.6" fill="#3fb457"/><rect x="497.19" y="706" width="0.95" height="23.6" fill="#3fb457"/><rect x="498.15" y="709" width="0.95" height="20.6" fill="#3fb457"/><rect x="499.11" y="712" width="0.95" height="17.6" fill="#3fb457"/><rect x="500.07" y="715" width="0.95" height="14.6" fill="#3fb457"/><rect x="501.03" y="716" width="0.95" height="13.6" fill="#3fb457"/><rect x="489.3" y="628.7" width="1.6" height=".8" fill="#bdbdbd"/><rect x="489.3" y="635.7" width="1.6" height=".8" fill="#bdbdbd"/><rect x="489.3" y="642.7" width="1.6" height=".8" fill="#bdbdbd"/><rect x="489.3" y="648.9" width="1.6" height=".8" fill="#bdbdbd"/><rect x="489.3" y="655.1" width="1.6" height=".8" fill="#bdbdbd"/><rect x="489.3" y="661.6" width="1.6" height=".8" fill="#bdbdbd"/><rect x="489.3" y="670.6" width="1.6" height=".8" fill="#bdbdbd"/><rect x="489.3" y="679.6" width="1.6" height=".8" fill="#bdbdbd"/><rect x="489.3" y="688.3" width="1.6" height=".8" fill="#bdbdbd"/><rect x="489.3" y="697.1" width="1.6" height=".8" fill="#bdbdbd"/><rect x="489.3" y="703.4" width="1.6" height=".8" fill="#bdbdbd"/><rect x="489.3" y="713.5" width="1.6" height=".8" fill="#bdbdbd"/><rect x="489.3" y="723.3" width="1.6" height=".8" fill="#bdbdbd"/><rect x="489.3" y="728.2" width="1.6" height=".8" fill="#bdbdbd"/><rect x="513.4" y="438.2" width="1" height="327.0" fill="#474747"/><circle cx="542.8" cy="581.6" r="12.6" fill="#4a4a4a"/><circle cx="542.8" cy="581.6" r="11.2" fill="#383838"/><circle cx="542.8" cy="581.6" r="7.4" fill="none" stroke="#414141" stroke-width=".7"/><circle cx="542.8" cy="581.6" r="3.8" fill="none" stroke="#414141" stroke-width=".7"/><path d="M531.8 581.6 H553.8 M542.8 570.6 V592.6" stroke="#414141" stroke-width=".7"/><circle cx="542.8" cy="566.0" r="1" fill="#7e7e7e"/><circle cx="553.8" cy="570.6" r="1" fill="#7e7e7e"/><circle cx="558.4" cy="581.6" r="1" fill="#7e7e7e"/><circle cx="553.8" cy="592.6" r="1" fill="#7e7e7e"/><circle cx="531.8" cy="592.6" r="1" fill="#7e7e7e"/><circle cx="527.2" cy="581.6" r="1" fill="#7e7e7e"/><circle cx="531.8" cy="570.6" r="1" fill="#7e7e7e"/><circle cx="546.2" cy="580.8" r="2" fill="#44dd62"/><rect x="520.1" y="628.5" width="8.8" height="1.2" fill="#858585"/><rect x="520.1" y="641.3" width="8.8" height="1.2" fill="#858585"/><rect x="520.1" y="653.9" width="8.8" height="1.2" fill="#f2f2f2"/><rect x="520.1" y="666.6" width="8.8" height="1.2" fill="#858585"/><rect x="520.1" y="679.8" width="8.8" height="1.2" fill="#858585"/><rect x="520.1" y="688.1" width="8.8" height="1.2" fill="#858585"/><rect x="520.1" y="698.5" width="8.8" height="1.2" fill="#858585"/><rect x="520.1" y="706.6" width="8.8" height="1.2" fill="#858585"/><rect x="520.1" y="715.6" width="8.8" height="1.2" fill="#858585"/><rect x="520.1" y="720.0" width="8.8" height="1.2" fill="#858585"/><rect x="520.1" y="728.0" width="8.8" height="1.2" fill="#858585"/><rect x="525.3" y="632.9" width="3.6" height="1" fill="#7a7a7a"/><rect x="525.3" y="637.1" width="3.6" height="1" fill="#7a7a7a"/><rect x="525.3" y="645.6" width="3.6" height="1" fill="#7a7a7a"/><rect x="525.3" y="649.8" width="3.6" height="1" fill="#7a7a7a"/><rect x="525.3" y="658.2" width="3.6" height="1" fill="#7a7a7a"/><rect x="525.3" y="662.5" width="3.6" height="1" fill="#7a7a7a"/><rect x="525.3" y="671.1" width="3.6" height="1" fill="#7a7a7a"/><rect x="525.3" y="675.5" width="3.6" height="1" fill="#7a7a7a"/><rect x="525.3" y="684.0" width="3.6" height="1" fill="#7a7a7a"/><rect x="525.3" y="690.8" width="3.6" height="1" fill="#7a7a7a"/><rect x="525.3" y="693.4" width="3.6" height="1" fill="#7a7a7a"/><rect x="525.3" y="696.0" width="3.6" height="1" fill="#7a7a7a"/><rect x="525.3" y="700.6" width="3.6" height="1" fill="#7a7a7a"/><rect x="525.3" y="702.7" width="3.6" height="1" fill="#7a7a7a"/><rect x="525.3" y="704.7" width="3.6" height="1" fill="#7a7a7a"/><rect x="525.3" y="709.0" width="3.6" height="1" fill="#7a7a7a"/><rect x="525.3" y="711.2" width="3.6" height="1" fill="#7a7a7a"/><rect x="525.3" y="713.5" width="3.6" height="1" fill="#7a7a7a"/><rect x="525.3" y="722.8" width="3.6" height="1" fill="#7a7a7a"/><rect x="525.3" y="725.4" width="3.6" height="1" fill="#7a7a7a"/><rect x="529.1" y="627.6" width="1.7" height="102" fill="#2e2e2e"/><rect x="551.1" y="627.2" width="10.6" height="29.6" rx="1.5" fill="#3a3a3a"/><rect x="551.1" y="660.2" width="10.6" height="70" rx="1.5" fill="#3a3a3a"/><rect x="553.7" y="651" width="1.1" height="5.0" fill="#3fb457"/><rect x="557.9" y="647" width="1.1" height="9.0" fill="#3fb457"/><rect x="552.10" y="722" width="0.95" height="7.6" fill="#3fb457"/><rect x="553.06" y="721" width="0.95" height="8.6" fill="#3fb457"/><rect x="554.02" y="718" width="0.95" height="11.6" fill="#3fb457"/><rect x="554.98" y="716" width="0.95" height="13.6" fill="#3fb457"/><rect x="555.94" y="712" width="0.95" height="17.6" fill="#3fb457"/><rect x="556.90" y="708" width="0.95" height="21.6" fill="#3fb457"/><rect x="557.86" y="702" width="0.95" height="27.6" fill="#3fb457"/><rect x="558.82" y="698" width="0.95" height="31.6" fill="#3fb457"/><rect x="559.78" y="697.7" width="0.95" height="31.9" fill="#3fb457"/><rect x="548.1" y="628.7" width="1.6" height=".8" fill="#bdbdbd"/><rect x="548.1" y="635.7" width="1.6" height=".8" fill="#bdbdbd"/><rect x="548.1" y="642.7" width="1.6" height=".8" fill="#bdbdbd"/><rect x="548.1" y="648.9" width="1.6" height=".8" fill="#bdbdbd"/><rect x="548.1" y="655.1" width="1.6" height=".8" fill="#bdbdbd"/><rect x="548.1" y="661.6" width="1.6" height=".8" fill="#bdbdbd"/><rect x="548.1" y="670.6" width="1.6" height=".8" fill="#bdbdbd"/><rect x="548.1" y="679.6" width="1.6" height=".8" fill="#bdbdbd"/><rect x="548.1" y="688.3" width="1.6" height=".8" fill="#bdbdbd"/><rect x="548.1" y="697.1" width="1.6" height=".8" fill="#bdbdbd"/><rect x="548.1" y="703.4" width="1.6" height=".8" fill="#bdbdbd"/><rect x="548.1" y="713.5" width="1.6" height=".8" fill="#bdbdbd"/><rect x="548.1" y="723.3" width="1.6" height=".8" fill="#bdbdbd"/><rect x="548.1" y="728.2" width="1.6" height=".8" fill="#bdbdbd"/><rect x="572.1" y="438.2" width="1" height="327.0" fill="#474747"/><circle cx="601.5" cy="581.6" r="12.6" fill="#4a4a4a"/><circle cx="601.5" cy="581.6" r="11.2" fill="#383838"/><circle cx="601.5" cy="581.6" r="7.4" fill="none" stroke="#414141" stroke-width=".7"/><circle cx="601.5" cy="581.6" r="3.8" fill="none" stroke="#414141" stroke-width=".7"/><path d="M590.5 581.6 H612.5 M601.5 570.6 V592.6" stroke="#414141" stroke-width=".7"/><circle cx="601.5" cy="566.0" r="1" fill="#7e7e7e"/><circle cx="612.5" cy="570.6" r="1" fill="#7e7e7e"/><circle cx="617.1" cy="581.6" r="1" fill="#7e7e7e"/><circle cx="612.5" cy="592.6" r="1" fill="#7e7e7e"/><circle cx="590.5" cy="592.6" r="1" fill="#7e7e7e"/><circle cx="585.9" cy="581.6" r="1" fill="#7e7e7e"/><circle cx="590.5" cy="570.6" r="1" fill="#7e7e7e"/><circle cx="601.5" cy="579.6" r="2" fill="#44dd62"/><rect x="578.9" y="628.5" width="8.8" height="1.2" fill="#858585"/><rect x="578.9" y="641.3" width="8.8" height="1.2" fill="#858585"/><rect x="578.9" y="653.9" width="8.8" height="1.2" fill="#f2f2f2"/><rect x="578.9" y="666.6" width="8.8" height="1.2" fill="#858585"/><rect x="578.9" y="679.8" width="8.8" height="1.2" fill="#858585"/><rect x="578.9" y="688.1" width="8.8" height="1.2" fill="#858585"/><rect x="578.9" y="698.5" width="8.8" height="1.2" fill="#858585"/><rect x="578.9" y="706.6" width="8.8" height="1.2" fill="#858585"/><rect x="578.9" y="715.6" width="8.8" height="1.2" fill="#858585"/><rect x="578.9" y="720.0" width="8.8" height="1.2" fill="#858585"/><rect x="578.9" y="728.0" width="8.8" height="1.2" fill="#858585"/><rect x="584.0" y="632.9" width="3.6" height="1" fill="#7a7a7a"/><rect x="584.0" y="637.1" width="3.6" height="1" fill="#7a7a7a"/><rect x="584.0" y="645.6" width="3.6" height="1" fill="#7a7a7a"/><rect x="584.0" y="649.8" width="3.6" height="1" fill="#7a7a7a"/><rect x="584.0" y="658.2" width="3.6" height="1" fill="#7a7a7a"/><rect x="584.0" y="662.5" width="3.6" height="1" fill="#7a7a7a"/><rect x="584.0" y="671.1" width="3.6" height="1" fill="#7a7a7a"/><rect x="584.0" y="675.5" width="3.6" height="1" fill="#7a7a7a"/><rect x="584.0" y="684.0" width="3.6" height="1" fill="#7a7a7a"/><rect x="584.0" y="690.8" width="3.6" height="1" fill="#7a7a7a"/><rect x="584.0" y="693.4" width="3.6" height="1" fill="#7a7a7a"/><rect x="584.0" y="696.0" width="3.6" height="1" fill="#7a7a7a"/><rect x="584.0" y="700.6" width="3.6" height="1" fill="#7a7a7a"/><rect x="584.0" y="702.7" width="3.6" height="1" fill="#7a7a7a"/><rect x="584.0" y="704.7" width="3.6" height="1" fill="#7a7a7a"/><rect x="584.0" y="709.0" width="3.6" height="1" fill="#7a7a7a"/><rect x="584.0" y="711.2" width="3.6" height="1" fill="#7a7a7a"/><rect x="584.0" y="713.5" width="3.6" height="1" fill="#7a7a7a"/><rect x="584.0" y="722.8" width="3.6" height="1" fill="#7a7a7a"/><rect x="584.0" y="725.4" width="3.6" height="1" fill="#7a7a7a"/><rect x="587.9" y="627.6" width="1.7" height="102" fill="#2e2e2e"/><rect x="609.9" y="627.2" width="10.6" height="29.6" rx="1.5" fill="#3a3a3a"/><rect x="609.9" y="660.2" width="10.6" height="70" rx="1.5" fill="#3a3a3a"/><rect x="612.5" y="648" width="1.1" height="8.0" fill="#3fb457"/><rect x="616.6" y="650" width="1.1" height="6.0" fill="#3fb457"/><rect x="610.85" y="716" width="0.95" height="13.6" fill="#3fb457"/><rect x="611.81" y="712" width="0.95" height="17.6" fill="#3fb457"/><rect x="612.77" y="708" width="0.95" height="21.6" fill="#3fb457"/><rect x="613.73" y="702" width="0.95" height="27.6" fill="#3fb457"/><rect x="614.69" y="697" width="0.95" height="32.6" fill="#3fb457"/><rect x="615.65" y="692" width="0.95" height="37.6" fill="#3fb457"/><rect x="616.61" y="690.2" width="0.95" height="39.4" fill="#3fb457"/><rect x="617.57" y="694" width="0.95" height="35.6" fill="#3fb457"/><rect x="618.53" y="699" width="0.95" height="30.6" fill="#3fb457"/><rect x="606.9" y="628.7" width="1.6" height=".8" fill="#bdbdbd"/><rect x="606.9" y="635.7" width="1.6" height=".8" fill="#bdbdbd"/><rect x="606.9" y="642.7" width="1.6" height=".8" fill="#bdbdbd"/><rect x="606.9" y="648.9" width="1.6" height=".8" fill="#bdbdbd"/><rect x="606.9" y="655.1" width="1.6" height=".8" fill="#bdbdbd"/><rect x="606.9" y="661.6" width="1.6" height=".8" fill="#bdbdbd"/><rect x="606.9" y="670.6" width="1.6" height=".8" fill="#bdbdbd"/><rect x="606.9" y="679.6" width="1.6" height=".8" fill="#bdbdbd"/><rect x="606.9" y="688.3" width="1.6" height=".8" fill="#bdbdbd"/><rect x="606.9" y="697.1" width="1.6" height=".8" fill="#bdbdbd"/><rect x="606.9" y="703.4" width="1.6" height=".8" fill="#bdbdbd"/><rect x="606.9" y="713.5" width="1.6" height=".8" fill="#bdbdbd"/><rect x="606.9" y="723.3" width="1.6" height=".8" fill="#bdbdbd"/><rect x="606.9" y="728.2" width="1.6" height=".8" fill="#bdbdbd"/><rect x="630.9" y="438.2" width="1" height="327.0" fill="#474747"/><circle cx="660.3" cy="581.6" r="12.6" fill="#4a4a4a"/><circle cx="660.3" cy="581.6" r="11.2" fill="#383838"/><circle cx="660.3" cy="581.6" r="7.4" fill="none" stroke="#414141" stroke-width=".7"/><circle cx="660.3" cy="581.6" r="3.8" fill="none" stroke="#414141" stroke-width=".7"/><path d="M649.3 581.6 H671.3 M660.3 570.6 V592.6" stroke="#414141" stroke-width=".7"/><circle cx="660.3" cy="566.0" r="1" fill="#7e7e7e"/><circle cx="671.3" cy="570.6" r="1" fill="#7e7e7e"/><circle cx="675.9" cy="581.6" r="1" fill="#7e7e7e"/><circle cx="671.3" cy="592.6" r="1" fill="#7e7e7e"/><circle cx="649.3" cy="592.6" r="1" fill="#7e7e7e"/><circle cx="644.7" cy="581.6" r="1" fill="#7e7e7e"/><circle cx="649.3" cy="570.6" r="1" fill="#7e7e7e"/><circle cx="660.3" cy="579.6" r="2" fill="#44dd62"/><rect x="637.6" y="628.5" width="8.8" height="1.2" fill="#858585"/><rect x="637.6" y="641.3" width="8.8" height="1.2" fill="#858585"/><rect x="637.6" y="653.9" width="8.8" height="1.2" fill="#f2f2f2"/><rect x="637.6" y="666.6" width="8.8" height="1.2" fill="#858585"/><rect x="637.6" y="679.8" width="8.8" height="1.2" fill="#858585"/><rect x="637.6" y="688.1" width="8.8" height="1.2" fill="#858585"/><rect x="637.6" y="698.5" width="8.8" height="1.2" fill="#858585"/><rect x="637.6" y="706.6" width="8.8" height="1.2" fill="#858585"/><rect x="637.6" y="715.6" width="8.8" height="1.2" fill="#858585"/><rect x="637.6" y="720.0" width="8.8" height="1.2" fill="#858585"/><rect x="637.6" y="728.0" width="8.8" height="1.2" fill="#858585"/><rect x="642.8" y="632.9" width="3.6" height="1" fill="#7a7a7a"/><rect x="642.8" y="637.1" width="3.6" height="1" fill="#7a7a7a"/><rect x="642.8" y="645.6" width="3.6" height="1" fill="#7a7a7a"/><rect x="642.8" y="649.8" width="3.6" height="1" fill="#7a7a7a"/><rect x="642.8" y="658.2" width="3.6" height="1" fill="#7a7a7a"/><rect x="642.8" y="662.5" width="3.6" height="1" fill="#7a7a7a"/><rect x="642.8" y="671.1" width="3.6" height="1" fill="#7a7a7a"/><rect x="642.8" y="675.5" width="3.6" height="1" fill="#7a7a7a"/><rect x="642.8" y="684.0" width="3.6" height="1" fill="#7a7a7a"/><rect x="642.8" y="690.8" width="3.6" height="1" fill="#7a7a7a"/><rect x="642.8" y="693.4" width="3.6" height="1" fill="#7a7a7a"/><rect x="642.8" y="696.0" width="3.6" height="1" fill="#7a7a7a"/><rect x="642.8" y="700.6" width="3.6" height="1" fill="#7a7a7a"/><rect x="642.8" y="702.7" width="3.6" height="1" fill="#7a7a7a"/><rect x="642.8" y="704.7" width="3.6" height="1" fill="#7a7a7a"/><rect x="642.8" y="709.0" width="3.6" height="1" fill="#7a7a7a"/><rect x="642.8" y="711.2" width="3.6" height="1" fill="#7a7a7a"/><rect x="642.8" y="713.5" width="3.6" height="1" fill="#7a7a7a"/><rect x="642.8" y="722.8" width="3.6" height="1" fill="#7a7a7a"/><rect x="642.8" y="725.4" width="3.6" height="1" fill="#7a7a7a"/><rect x="646.6" y="627.6" width="1.7" height="102" fill="#2e2e2e"/><rect x="668.2" y="627.2" width="9.799999999999999" height="103.4" rx="1.5" fill="#3a3a3a"/><rect x="669.8" y="685.6" width="2.7" height="44.4" fill="#4be368"/><rect x="674.0" y="685.6" width="2.7" height="44.4" fill="#4be368"/><rect x="665.6" y="628.9" width="1.6" height=".8" fill="#bdbdbd"/><rect x="665.6" y="635.7" width="1.6" height=".8" fill="#bdbdbd"/><rect x="665.6" y="642.3" width="1.6" height=".8" fill="#bdbdbd"/><rect x="665.6" y="649.1" width="1.6" height=".8" fill="#bdbdbd"/><rect x="665.6" y="655.6" width="1.6" height=".8" fill="#bdbdbd"/><rect x="665.6" y="662.5" width="1.6" height=".8" fill="#bdbdbd"/><rect x="665.6" y="669.0" width="1.6" height=".8" fill="#bdbdbd"/><rect x="665.6" y="675.9" width="1.6" height=".8" fill="#bdbdbd"/><rect x="665.6" y="682.4" width="1.6" height=".8" fill="#bdbdbd"/><rect x="665.6" y="691.1" width="1.6" height=".8" fill="#bdbdbd"/><rect x="665.6" y="698.9" width="1.6" height=".8" fill="#bdbdbd"/><rect x="665.6" y="706.3" width="1.6" height=".8" fill="#bdbdbd"/><rect x="665.6" y="713.8" width="1.6" height=".8" fill="#bdbdbd"/><rect x="665.6" y="721.0" width="1.6" height=".8" fill="#bdbdbd"/><rect x="665.6" y="728.4" width="1.6" height=".8" fill="#bdbdbd"/><rect x="689.6" y="438.2" width="1" height="327.0" fill="#474747"/><circle cx="719.0" cy="581.6" r="12.6" fill="#4a4a4a"/><circle cx="719.0" cy="581.6" r="11.2" fill="#383838"/><circle cx="719.0" cy="581.6" r="7.4" fill="none" stroke="#414141" stroke-width=".7"/><circle cx="719.0" cy="581.6" r="3.8" fill="none" stroke="#414141" stroke-width=".7"/><path d="M708.0 581.6 H730.0 M719.0 570.6 V592.6" stroke="#414141" stroke-width=".7"/><circle cx="719.0" cy="566.0" r="1" fill="#7e7e7e"/><circle cx="730.0" cy="570.6" r="1" fill="#7e7e7e"/><circle cx="734.6" cy="581.6" r="1" fill="#7e7e7e"/><circle cx="730.0" cy="592.6" r="1" fill="#7e7e7e"/><circle cx="708.0" cy="592.6" r="1" fill="#7e7e7e"/><circle cx="703.4" cy="581.6" r="1" fill="#7e7e7e"/><circle cx="708.0" cy="570.6" r="1" fill="#7e7e7e"/><circle cx="719.0" cy="579.6" r="2" fill="#44dd62"/><rect x="696.4" y="628.5" width="8.8" height="1.2" fill="#858585"/><rect x="696.4" y="641.3" width="8.8" height="1.2" fill="#858585"/><rect x="696.4" y="653.9" width="8.8" height="1.2" fill="#f2f2f2"/><rect x="696.4" y="666.6" width="8.8" height="1.2" fill="#858585"/><rect x="696.4" y="679.8" width="8.8" height="1.2" fill="#858585"/><rect x="696.4" y="688.1" width="8.8" height="1.2" fill="#858585"/><rect x="696.4" y="698.5" width="8.8" height="1.2" fill="#858585"/><rect x="696.4" y="706.6" width="8.8" height="1.2" fill="#858585"/><rect x="696.4" y="715.6" width="8.8" height="1.2" fill="#858585"/><rect x="696.4" y="720.0" width="8.8" height="1.2" fill="#858585"/><rect x="696.4" y="728.0" width="8.8" height="1.2" fill="#858585"/><rect x="701.5" y="632.9" width="3.6" height="1" fill="#7a7a7a"/><rect x="701.5" y="637.1" width="3.6" height="1" fill="#7a7a7a"/><rect x="701.5" y="645.6" width="3.6" height="1" fill="#7a7a7a"/><rect x="701.5" y="649.8" width="3.6" height="1" fill="#7a7a7a"/><rect x="701.5" y="658.2" width="3.6" height="1" fill="#7a7a7a"/><rect x="701.5" y="662.5" width="3.6" height="1" fill="#7a7a7a"/><rect x="701.5" y="671.1" width="3.6" height="1" fill="#7a7a7a"/><rect x="701.5" y="675.5" width="3.6" height="1" fill="#7a7a7a"/><rect x="701.5" y="684.0" width="3.6" height="1" fill="#7a7a7a"/><rect x="701.5" y="690.8" width="3.6" height="1" fill="#7a7a7a"/><rect x="701.5" y="693.4" width="3.6" height="1" fill="#7a7a7a"/><rect x="701.5" y="696.0" width="3.6" height="1" fill="#7a7a7a"/><rect x="701.5" y="700.6" width="3.6" height="1" fill="#7a7a7a"/><rect x="701.5" y="702.7" width="3.6" height="1" fill="#7a7a7a"/><rect x="701.5" y="704.7" width="3.6" height="1" fill="#7a7a7a"/><rect x="701.5" y="709.0" width="3.6" height="1" fill="#7a7a7a"/><rect x="701.5" y="711.2" width="3.6" height="1" fill="#7a7a7a"/><rect x="701.5" y="713.5" width="3.6" height="1" fill="#7a7a7a"/><rect x="701.5" y="722.8" width="3.6" height="1" fill="#7a7a7a"/><rect x="701.5" y="725.4" width="3.6" height="1" fill="#7a7a7a"/><rect x="705.4" y="627.6" width="1.7" height="102" fill="#2e2e2e"/><rect x="727.0" y="627.2" width="9.799999999999999" height="103.4" rx="1.5" fill="#3a3a3a"/><rect x="728.6" y="695.5" width="2.7" height="34.5" fill="#4be368"/><rect x="732.8" y="695.5" width="2.7" height="34.5" fill="#4be368"/><rect x="724.4" y="628.9" width="1.6" height=".8" fill="#bdbdbd"/><rect x="724.4" y="635.7" width="1.6" height=".8" fill="#bdbdbd"/><rect x="724.4" y="642.3" width="1.6" height=".8" fill="#bdbdbd"/><rect x="724.4" y="649.1" width="1.6" height=".8" fill="#bdbdbd"/><rect x="724.4" y="655.6" width="1.6" height=".8" fill="#bdbdbd"/><rect x="724.4" y="662.5" width="1.6" height=".8" fill="#bdbdbd"/><rect x="724.4" y="669.0" width="1.6" height=".8" fill="#bdbdbd"/><rect x="724.4" y="675.9" width="1.6" height=".8" fill="#bdbdbd"/><rect x="724.4" y="682.4" width="1.6" height=".8" fill="#bdbdbd"/><rect x="724.4" y="691.1" width="1.6" height=".8" fill="#bdbdbd"/><rect x="724.4" y="698.9" width="1.6" height=".8" fill="#bdbdbd"/><rect x="724.4" y="706.3" width="1.6" height=".8" fill="#bdbdbd"/><rect x="724.4" y="713.8" width="1.6" height=".8" fill="#bdbdbd"/><rect x="724.4" y="721.0" width="1.6" height=".8" fill="#bdbdbd"/><rect x="724.4" y="728.4" width="1.6" height=".8" fill="#bdbdbd"/><rect x="748.4" y="438.2" width="1" height="327.0" fill="#474747"/><circle cx="777.8" cy="581.6" r="12.6" fill="#4a4a4a"/><circle cx="777.8" cy="581.6" r="11.2" fill="#383838"/><circle cx="777.8" cy="581.6" r="7.4" fill="none" stroke="#414141" stroke-width=".7"/><circle cx="777.8" cy="581.6" r="3.8" fill="none" stroke="#414141" stroke-width=".7"/><path d="M766.8 581.6 H788.8 M777.8 570.6 V592.6" stroke="#414141" stroke-width=".7"/><circle cx="777.8" cy="566.0" r="1" fill="#7e7e7e"/><circle cx="788.8" cy="570.6" r="1" fill="#7e7e7e"/><circle cx="793.4" cy="581.6" r="1" fill="#7e7e7e"/><circle cx="788.8" cy="592.6" r="1" fill="#7e7e7e"/><circle cx="766.8" cy="592.6" r="1" fill="#7e7e7e"/><circle cx="762.2" cy="581.6" r="1" fill="#7e7e7e"/><circle cx="766.8" cy="570.6" r="1" fill="#7e7e7e"/><circle cx="777.8" cy="579.6" r="2" fill="#44dd62"/><rect x="755.1" y="628.5" width="8.8" height="1.2" fill="#858585"/><rect x="755.1" y="641.3" width="8.8" height="1.2" fill="#858585"/><rect x="755.1" y="653.9" width="8.8" height="1.2" fill="#f2f2f2"/><rect x="755.1" y="666.6" width="8.8" height="1.2" fill="#858585"/><rect x="755.1" y="679.8" width="8.8" height="1.2" fill="#858585"/><rect x="755.1" y="688.1" width="8.8" height="1.2" fill="#858585"/><rect x="755.1" y="698.5" width="8.8" height="1.2" fill="#858585"/><rect x="755.1" y="706.6" width="8.8" height="1.2" fill="#858585"/><rect x="755.1" y="715.6" width="8.8" height="1.2" fill="#858585"/><rect x="755.1" y="720.0" width="8.8" height="1.2" fill="#858585"/><rect x="755.1" y="728.0" width="8.8" height="1.2" fill="#858585"/><rect x="760.3" y="632.9" width="3.6" height="1" fill="#7a7a7a"/><rect x="760.3" y="637.1" width="3.6" height="1" fill="#7a7a7a"/><rect x="760.3" y="645.6" width="3.6" height="1" fill="#7a7a7a"/><rect x="760.3" y="649.8" width="3.6" height="1" fill="#7a7a7a"/><rect x="760.3" y="658.2" width="3.6" height="1" fill="#7a7a7a"/><rect x="760.3" y="662.5" width="3.6" height="1" fill="#7a7a7a"/><rect x="760.3" y="671.1" width="3.6" height="1" fill="#7a7a7a"/><rect x="760.3" y="675.5" width="3.6" height="1" fill="#7a7a7a"/><rect x="760.3" y="684.0" width="3.6" height="1" fill="#7a7a7a"/><rect x="760.3" y="690.8" width="3.6" height="1" fill="#7a7a7a"/><rect x="760.3" y="693.4" width="3.6" height="1" fill="#7a7a7a"/><rect x="760.3" y="696.0" width="3.6" height="1" fill="#7a7a7a"/><rect x="760.3" y="700.6" width="3.6" height="1" fill="#7a7a7a"/><rect x="760.3" y="702.7" width="3.6" height="1" fill="#7a7a7a"/><rect x="760.3" y="704.7" width="3.6" height="1" fill="#7a7a7a"/><rect x="760.3" y="709.0" width="3.6" height="1" fill="#7a7a7a"/><rect x="760.3" y="711.2" width="3.6" height="1" fill="#7a7a7a"/><rect x="760.3" y="713.5" width="3.6" height="1" fill="#7a7a7a"/><rect x="760.3" y="722.8" width="3.6" height="1" fill="#7a7a7a"/><rect x="760.3" y="725.4" width="3.6" height="1" fill="#7a7a7a"/><rect x="764.1" y="627.6" width="1.7" height="102" fill="#2e2e2e"/><rect x="785.7" y="627.2" width="9.799999999999999" height="103.4" rx="1.5" fill="#3a3a3a"/><rect x="787.3" y="699" width="2.7" height="31.0" fill="#4be368"/><rect x="791.5" y="699" width="2.7" height="31.0" fill="#4be368"/><rect x="787.3" y="695" width="2.7" height="1" fill="#4be368"/><rect x="791.5" y="695" width="2.7" height="1" fill="#4be368"/><rect x="783.1" y="628.9" width="1.6" height=".8" fill="#bdbdbd"/><rect x="783.1" y="635.7" width="1.6" height=".8" fill="#bdbdbd"/><rect x="783.1" y="642.3" width="1.6" height=".8" fill="#bdbdbd"/><rect x="783.1" y="649.1" width="1.6" height=".8" fill="#bdbdbd"/><rect x="783.1" y="655.6" width="1.6" height=".8" fill="#bdbdbd"/><rect x="783.1" y="662.5" width="1.6" height=".8" fill="#bdbdbd"/><rect x="783.1" y="669.0" width="1.6" height=".8" fill="#bdbdbd"/><rect x="783.1" y="675.9" width="1.6" height=".8" fill="#bdbdbd"/><rect x="783.1" y="682.4" width="1.6" height=".8" fill="#bdbdbd"/><rect x="783.1" y="691.1" width="1.6" height=".8" fill="#bdbdbd"/><rect x="783.1" y="698.9" width="1.6" height=".8" fill="#bdbdbd"/><rect x="783.1" y="706.3" width="1.6" height=".8" fill="#bdbdbd"/><rect x="783.1" y="713.8" width="1.6" height=".8" fill="#bdbdbd"/><rect x="783.1" y="721.0" width="1.6" height=".8" fill="#bdbdbd"/><rect x="783.1" y="728.4" width="1.6" height=".8" fill="#bdbdbd"/><rect x="807.1" y="438.2" width="1" height="327.0" fill="#474747"/><circle cx="836.5" cy="581.6" r="12.6" fill="#4a4a4a"/><circle cx="836.5" cy="581.6" r="11.2" fill="#383838"/><circle cx="836.5" cy="581.6" r="7.4" fill="none" stroke="#414141" stroke-width=".7"/><circle cx="836.5" cy="581.6" r="3.8" fill="none" stroke="#414141" stroke-width=".7"/><path d="M825.5 581.6 H847.5 M836.5 570.6 V592.6" stroke="#414141" stroke-width=".7"/><circle cx="836.5" cy="566.0" r="1" fill="#7e7e7e"/><circle cx="847.5" cy="570.6" r="1" fill="#7e7e7e"/><circle cx="852.1" cy="581.6" r="1" fill="#7e7e7e"/><circle cx="847.5" cy="592.6" r="1" fill="#7e7e7e"/><circle cx="825.5" cy="592.6" r="1" fill="#7e7e7e"/><circle cx="820.9" cy="581.6" r="1" fill="#7e7e7e"/><circle cx="825.5" cy="570.6" r="1" fill="#7e7e7e"/><circle cx="836.5" cy="579.6" r="2" fill="#44dd62"/><rect x="813.9" y="628.5" width="8.8" height="1.2" fill="#858585"/><rect x="813.9" y="641.3" width="8.8" height="1.2" fill="#858585"/><rect x="813.9" y="653.9" width="8.8" height="1.2" fill="#f2f2f2"/><rect x="813.9" y="666.6" width="8.8" height="1.2" fill="#858585"/><rect x="813.9" y="679.8" width="8.8" height="1.2" fill="#858585"/><rect x="813.9" y="688.1" width="8.8" height="1.2" fill="#858585"/><rect x="813.9" y="698.5" width="8.8" height="1.2" fill="#858585"/><rect x="813.9" y="706.6" width="8.8" height="1.2" fill="#858585"/><rect x="813.9" y="715.6" width="8.8" height="1.2" fill="#858585"/><rect x="813.9" y="720.0" width="8.8" height="1.2" fill="#858585"/><rect x="813.9" y="728.0" width="8.8" height="1.2" fill="#858585"/><rect x="819.0" y="632.9" width="3.6" height="1" fill="#7a7a7a"/><rect x="819.0" y="637.1" width="3.6" height="1" fill="#7a7a7a"/><rect x="819.0" y="645.6" width="3.6" height="1" fill="#7a7a7a"/><rect x="819.0" y="649.8" width="3.6" height="1" fill="#7a7a7a"/><rect x="819.0" y="658.2" width="3.6" height="1" fill="#7a7a7a"/><rect x="819.0" y="662.5" width="3.6" height="1" fill="#7a7a7a"/><rect x="819.0" y="671.1" width="3.6" height="1" fill="#7a7a7a"/><rect x="819.0" y="675.5" width="3.6" height="1" fill="#7a7a7a"/><rect x="819.0" y="684.0" width="3.6" height="1" fill="#7a7a7a"/><rect x="819.0" y="690.8" width="3.6" height="1" fill="#7a7a7a"/><rect x="819.0" y="693.4" width="3.6" height="1" fill="#7a7a7a"/><rect x="819.0" y="696.0" width="3.6" height="1" fill="#7a7a7a"/><rect x="819.0" y="700.6" width="3.6" height="1" fill="#7a7a7a"/><rect x="819.0" y="702.7" width="3.6" height="1" fill="#7a7a7a"/><rect x="819.0" y="704.7" width="3.6" height="1" fill="#7a7a7a"/><rect x="819.0" y="709.0" width="3.6" height="1" fill="#7a7a7a"/><rect x="819.0" y="711.2" width="3.6" height="1" fill="#7a7a7a"/><rect x="819.0" y="713.5" width="3.6" height="1" fill="#7a7a7a"/><rect x="819.0" y="722.8" width="3.6" height="1" fill="#7a7a7a"/><rect x="819.0" y="725.4" width="3.6" height="1" fill="#7a7a7a"/><rect x="822.9" y="627.6" width="1.7" height="102" fill="#2e2e2e"/><rect x="844.5" y="627.2" width="9.799999999999999" height="103.4" rx="1.5" fill="#3a3a3a"/><rect x="846.1" y="620" width="2.7" height="110.0" fill="#4be368"/><rect x="850.2" y="620" width="2.7" height="110.0" fill="#4be368"/><rect x="841.9" y="628.9" width="1.6" height=".8" fill="#bdbdbd"/><rect x="841.9" y="635.7" width="1.6" height=".8" fill="#bdbdbd"/><rect x="841.9" y="642.3" width="1.6" height=".8" fill="#bdbdbd"/><rect x="841.9" y="649.1" width="1.6" height=".8" fill="#bdbdbd"/><rect x="841.9" y="655.6" width="1.6" height=".8" fill="#bdbdbd"/><rect x="841.9" y="662.5" width="1.6" height=".8" fill="#bdbdbd"/><rect x="841.9" y="669.0" width="1.6" height=".8" fill="#bdbdbd"/><rect x="841.9" y="675.9" width="1.6" height=".8" fill="#bdbdbd"/><rect x="841.9" y="682.4" width="1.6" height=".8" fill="#bdbdbd"/><rect x="841.9" y="691.1" width="1.6" height=".8" fill="#bdbdbd"/><rect x="841.9" y="698.9" width="1.6" height=".8" fill="#bdbdbd"/><rect x="841.9" y="706.3" width="1.6" height=".8" fill="#bdbdbd"/><rect x="841.9" y="713.8" width="1.6" height=".8" fill="#bdbdbd"/><rect x="841.9" y="721.0" width="1.6" height=".8" fill="#bdbdbd"/><rect x="841.9" y="728.4" width="1.6" height=".8" fill="#bdbdbd"/><rect x="865.9" y="438.2" width="1" height="338.8" fill="#474747"/><circle cx="895.3" cy="581.6" r="12.6" fill="#4a4a4a"/><circle cx="895.3" cy="581.6" r="11.2" fill="#383838"/><circle cx="895.3" cy="581.6" r="7.4" fill="none" stroke="#414141" stroke-width=".7"/><circle cx="895.3" cy="581.6" r="3.8" fill="none" stroke="#414141" stroke-width=".7"/><path d="M884.3 581.6 H906.3 M895.3 570.6 V592.6" stroke="#414141" stroke-width=".7"/><circle cx="895.3" cy="566.0" r="1" fill="#7e7e7e"/><circle cx="906.3" cy="570.6" r="1" fill="#7e7e7e"/><circle cx="910.9" cy="581.6" r="1" fill="#7e7e7e"/><circle cx="906.3" cy="592.6" r="1" fill="#7e7e7e"/><circle cx="884.3" cy="592.6" r="1" fill="#7e7e7e"/><circle cx="879.7" cy="581.6" r="1" fill="#7e7e7e"/><circle cx="884.3" cy="570.6" r="1" fill="#7e7e7e"/><circle cx="895.3" cy="579.6" r="2" fill="#44dd62"/><rect x="872.6" y="628.5" width="8.8" height="1.2" fill="#858585"/><rect x="872.6" y="641.3" width="8.8" height="1.2" fill="#858585"/><rect x="872.6" y="653.9" width="8.8" height="1.2" fill="#f2f2f2"/><rect x="872.6" y="666.6" width="8.8" height="1.2" fill="#858585"/><rect x="872.6" y="679.8" width="8.8" height="1.2" fill="#858585"/><rect x="872.6" y="688.1" width="8.8" height="1.2" fill="#858585"/><rect x="872.6" y="698.5" width="8.8" height="1.2" fill="#858585"/><rect x="872.6" y="706.6" width="8.8" height="1.2" fill="#858585"/><rect x="872.6" y="715.6" width="8.8" height="1.2" fill="#858585"/><rect x="872.6" y="720.0" width="8.8" height="1.2" fill="#858585"/><rect x="872.6" y="728.0" width="8.8" height="1.2" fill="#858585"/><rect x="877.8" y="632.9" width="3.6" height="1" fill="#7a7a7a"/><rect x="877.8" y="637.1" width="3.6" height="1" fill="#7a7a7a"/><rect x="877.8" y="645.6" width="3.6" height="1" fill="#7a7a7a"/><rect x="877.8" y="649.8" width="3.6" height="1" fill="#7a7a7a"/><rect x="877.8" y="658.2" width="3.6" height="1" fill="#7a7a7a"/><rect x="877.8" y="662.5" width="3.6" height="1" fill="#7a7a7a"/><rect x="877.8" y="671.1" width="3.6" height="1" fill="#7a7a7a"/><rect x="877.8" y="675.5" width="3.6" height="1" fill="#7a7a7a"/><rect x="877.8" y="684.0" width="3.6" height="1" fill="#7a7a7a"/><rect x="877.8" y="690.8" width="3.6" height="1" fill="#7a7a7a"/><rect x="877.8" y="693.4" width="3.6" height="1" fill="#7a7a7a"/><rect x="877.8" y="696.0" width="3.6" height="1" fill="#7a7a7a"/><rect x="877.8" y="700.6" width="3.6" height="1" fill="#7a7a7a"/><rect x="877.8" y="702.7" width="3.6" height="1" fill="#7a7a7a"/><rect x="877.8" y="704.7" width="3.6" height="1" fill="#7a7a7a"/><rect x="877.8" y="709.0" width="3.6" height="1" fill="#7a7a7a"/><rect x="877.8" y="711.2" width="3.6" height="1" fill="#7a7a7a"/><rect x="877.8" y="713.5" width="3.6" height="1" fill="#7a7a7a"/><rect x="877.8" y="722.8" width="3.6" height="1" fill="#7a7a7a"/><rect x="877.8" y="725.4" width="3.6" height="1" fill="#7a7a7a"/><rect x="881.6" y="627.6" width="1.7" height="102" fill="#2e2e2e"/><rect x="903.2" y="627.2" width="9.799999999999999" height="103.4" rx="1.5" fill="#3a3a3a"/><rect x="904.8" y="694.3" width="2.7" height="35.7" fill="#4be368"/><rect x="909.0" y="697.9" width="2.7" height="32.1" fill="#4be368"/><rect x="909.0" y="689.2" width="2.7" height="1" fill="#4be368"/><rect x="900.6" y="628.9" width="1.6" height=".8" fill="#bdbdbd"/><rect x="900.6" y="635.7" width="1.6" height=".8" fill="#bdbdbd"/><rect x="900.6" y="642.3" width="1.6" height=".8" fill="#bdbdbd"/><rect x="900.6" y="649.1" width="1.6" height=".8" fill="#bdbdbd"/><rect x="900.6" y="655.6" width="1.6" height=".8" fill="#bdbdbd"/><rect x="900.6" y="662.5" width="1.6" height=".8" fill="#bdbdbd"/><rect x="900.6" y="669.0" width="1.6" height=".8" fill="#bdbdbd"/><rect x="900.6" y="675.9" width="1.6" height=".8" fill="#bdbdbd"/><rect x="900.6" y="682.4" width="1.6" height=".8" fill="#bdbdbd"/><rect x="900.6" y="691.1" width="1.6" height=".8" fill="#bdbdbd"/><rect x="900.6" y="698.9" width="1.6" height=".8" fill="#bdbdbd"/><rect x="900.6" y="706.3" width="1.6" height=".8" fill="#bdbdbd"/><rect x="900.6" y="713.8" width="1.6" height=".8" fill="#bdbdbd"/><rect x="900.6" y="721.0" width="1.6" height=".8" fill="#bdbdbd"/><rect x="900.6" y="728.4" width="1.6" height=".8" fill="#bdbdbd"/><rect x="924.6" y="438.2" width="1" height="338.8" fill="#474747"/><circle cx="954.0" cy="581.6" r="12.6" fill="#4a4a4a"/><circle cx="954.0" cy="581.6" r="11.2" fill="#383838"/><circle cx="954.0" cy="581.6" r="7.4" fill="none" stroke="#414141" stroke-width=".7"/><circle cx="954.0" cy="581.6" r="3.8" fill="none" stroke="#414141" stroke-width=".7"/><path d="M943.0 581.6 H965.0 M954.0 570.6 V592.6" stroke="#414141" stroke-width=".7"/><circle cx="954.0" cy="566.0" r="1" fill="#7e7e7e"/><circle cx="965.0" cy="570.6" r="1" fill="#7e7e7e"/><circle cx="969.6" cy="581.6" r="1" fill="#7e7e7e"/><circle cx="965.0" cy="592.6" r="1" fill="#7e7e7e"/><circle cx="943.0" cy="592.6" r="1" fill="#7e7e7e"/><circle cx="938.4" cy="581.6" r="1" fill="#7e7e7e"/><circle cx="943.0" cy="570.6" r="1" fill="#7e7e7e"/><circle cx="954.0" cy="579.6" r="2" fill="#44dd62"/><rect x="931.4" y="628.5" width="8.8" height="1.2" fill="#858585"/><rect x="931.4" y="641.3" width="8.8" height="1.2" fill="#858585"/><rect x="931.4" y="653.9" width="8.8" height="1.2" fill="#f2f2f2"/><rect x="931.4" y="666.6" width="8.8" height="1.2" fill="#858585"/><rect x="931.4" y="679.8" width="8.8" height="1.2" fill="#858585"/><rect x="931.4" y="688.1" width="8.8" height="1.2" fill="#858585"/><rect x="931.4" y="698.5" width="8.8" height="1.2" fill="#858585"/><rect x="931.4" y="706.6" width="8.8" height="1.2" fill="#858585"/><rect x="931.4" y="715.6" width="8.8" height="1.2" fill="#858585"/><rect x="931.4" y="720.0" width="8.8" height="1.2" fill="#858585"/><rect x="931.4" y="728.0" width="8.8" height="1.2" fill="#858585"/><rect x="936.5" y="632.9" width="3.6" height="1" fill="#7a7a7a"/><rect x="936.5" y="637.1" width="3.6" height="1" fill="#7a7a7a"/><rect x="936.5" y="645.6" width="3.6" height="1" fill="#7a7a7a"/><rect x="936.5" y="649.8" width="3.6" height="1" fill="#7a7a7a"/><rect x="936.5" y="658.2" width="3.6" height="1" fill="#7a7a7a"/><rect x="936.5" y="662.5" width="3.6" height="1" fill="#7a7a7a"/><rect x="936.5" y="671.1" width="3.6" height="1" fill="#7a7a7a"/><rect x="936.5" y="675.5" width="3.6" height="1" fill="#7a7a7a"/><rect x="936.5" y="684.0" width="3.6" height="1" fill="#7a7a7a"/><rect x="936.5" y="690.8" width="3.6" height="1" fill="#7a7a7a"/><rect x="936.5" y="693.4" width="3.6" height="1" fill="#7a7a7a"/><rect x="936.5" y="696.0" width="3.6" height="1" fill="#7a7a7a"/><rect x="936.5" y="700.6" width="3.6" height="1" fill="#7a7a7a"/><rect x="936.5" y="702.7" width="3.6" height="1" fill="#7a7a7a"/><rect x="936.5" y="704.7" width="3.6" height="1" fill="#7a7a7a"/><rect x="936.5" y="709.0" width="3.6" height="1" fill="#7a7a7a"/><rect x="936.5" y="711.2" width="3.6" height="1" fill="#7a7a7a"/><rect x="936.5" y="713.5" width="3.6" height="1" fill="#7a7a7a"/><rect x="936.5" y="722.8" width="3.6" height="1" fill="#7a7a7a"/><rect x="936.5" y="725.4" width="3.6" height="1" fill="#7a7a7a"/><rect x="940.4" y="627.6" width="1.7" height="102" fill="#2e2e2e"/><rect x="962.0" y="627.2" width="9.799999999999999" height="103.4" rx="1.5" fill="#3a3a3a"/><rect x="963.6" y="678.2" width="2.7" height="51.8" fill="#4be368"/><rect x="967.8" y="680.2" width="2.7" height="49.8" fill="#4be368"/><rect x="959.4" y="628.9" width="1.6" height=".8" fill="#bdbdbd"/><rect x="959.4" y="635.7" width="1.6" height=".8" fill="#bdbdbd"/><rect x="959.4" y="642.3" width="1.6" height=".8" fill="#bdbdbd"/><rect x="959.4" y="649.1" width="1.6" height=".8" fill="#bdbdbd"/><rect x="959.4" y="655.6" width="1.6" height=".8" fill="#bdbdbd"/><rect x="959.4" y="662.5" width="1.6" height=".8" fill="#bdbdbd"/><rect x="959.4" y="669.0" width="1.6" height=".8" fill="#bdbdbd"/><rect x="959.4" y="675.9" width="1.6" height=".8" fill="#bdbdbd"/><rect x="959.4" y="682.4" width="1.6" height=".8" fill="#bdbdbd"/><rect x="959.4" y="691.1" width="1.6" height=".8" fill="#bdbdbd"/><rect x="959.4" y="698.9" width="1.6" height=".8" fill="#bdbdbd"/><rect x="959.4" y="706.3" width="1.6" height=".8" fill="#bdbdbd"/><rect x="959.4" y="713.8" width="1.6" height=".8" fill="#bdbdbd"/><rect x="959.4" y="721.0" width="1.6" height=".8" fill="#bdbdbd"/><rect x="959.4" y="728.4" width="1.6" height=".8" fill="#bdbdbd"/><rect x="983.4" y="438.2" width="1" height="338.8" fill="#474747"/><circle cx="1012.8" cy="581.6" r="12.6" fill="#4a4a4a"/><circle cx="1012.8" cy="581.6" r="11.2" fill="#383838"/><circle cx="1012.8" cy="581.6" r="7.4" fill="none" stroke="#414141" stroke-width=".7"/><circle cx="1012.8" cy="581.6" r="3.8" fill="none" stroke="#414141" stroke-width=".7"/><path d="M1001.8 581.6 H1023.8 M1012.8 570.6 V592.6" stroke="#414141" stroke-width=".7"/><circle cx="1012.8" cy="566.0" r="1" fill="#7e7e7e"/><circle cx="1023.8" cy="570.6" r="1" fill="#7e7e7e"/><circle cx="1028.4" cy="581.6" r="1" fill="#7e7e7e"/><circle cx="1023.8" cy="592.6" r="1" fill="#7e7e7e"/><circle cx="1001.8" cy="592.6" r="1" fill="#7e7e7e"/><circle cx="997.2" cy="581.6" r="1" fill="#7e7e7e"/><circle cx="1001.8" cy="570.6" r="1" fill="#7e7e7e"/><circle cx="1012.8" cy="579.6" r="2" fill="#44dd62"/><rect x="990.1" y="628.5" width="8.8" height="1.2" fill="#858585"/><rect x="990.1" y="641.3" width="8.8" height="1.2" fill="#858585"/><rect x="990.1" y="653.9" width="8.8" height="1.2" fill="#f2f2f2"/><rect x="990.1" y="666.6" width="8.8" height="1.2" fill="#858585"/><rect x="990.1" y="679.8" width="8.8" height="1.2" fill="#858585"/><rect x="990.1" y="688.1" width="8.8" height="1.2" fill="#858585"/><rect x="990.1" y="698.5" width="8.8" height="1.2" fill="#858585"/><rect x="990.1" y="706.6" width="8.8" height="1.2" fill="#858585"/><rect x="990.1" y="715.6" width="8.8" height="1.2" fill="#858585"/><rect x="990.1" y="720.0" width="8.8" height="1.2" fill="#858585"/><rect x="990.1" y="728.0" width="8.8" height="1.2" fill="#858585"/><rect x="995.3" y="632.9" width="3.6" height="1" fill="#7a7a7a"/><rect x="995.3" y="637.1" width="3.6" height="1" fill="#7a7a7a"/><rect x="995.3" y="645.6" width="3.6" height="1" fill="#7a7a7a"/><rect x="995.3" y="649.8" width="3.6" height="1" fill="#7a7a7a"/><rect x="995.3" y="658.2" width="3.6" height="1" fill="#7a7a7a"/><rect x="995.3" y="662.5" width="3.6" height="1" fill="#7a7a7a"/><rect x="995.3" y="671.1" width="3.6" height="1" fill="#7a7a7a"/><rect x="995.3" y="675.5" width="3.6" height="1" fill="#7a7a7a"/><rect x="995.3" y="684.0" width="3.6" height="1" fill="#7a7a7a"/><rect x="995.3" y="690.8" width="3.6" height="1" fill="#7a7a7a"/><rect x="995.3" y="693.4" width="3.6" height="1" fill="#7a7a7a"/><rect x="995.3" y="696.0" width="3.6" height="1" fill="#7a7a7a"/><rect x="995.3" y="700.6" width="3.6" height="1" fill="#7a7a7a"/><rect x="995.3" y="702.7" width="3.6" height="1" fill="#7a7a7a"/><rect x="995.3" y="704.7" width="3.6" height="1" fill="#7a7a7a"/><rect x="995.3" y="709.0" width="3.6" height="1" fill="#7a7a7a"/><rect x="995.3" y="711.2" width="3.6" height="1" fill="#7a7a7a"/><rect x="995.3" y="713.5" width="3.6" height="1" fill="#7a7a7a"/><rect x="995.3" y="722.8" width="3.6" height="1" fill="#7a7a7a"/><rect x="995.3" y="725.4" width="3.6" height="1" fill="#7a7a7a"/><rect x="999.1" y="627.6" width="1.7" height="102" fill="#2e2e2e"/><rect x="1020.7" y="627.2" width="9.799999999999999" height="103.4" rx="1.5" fill="#3a3a3a"/><rect x="1022.3" y="620" width="2.7" height="110.0" fill="#4be368"/><rect x="1026.5" y="620" width="2.7" height="110.0" fill="#4be368"/><rect x="1018.1" y="628.9" width="1.6" height=".8" fill="#bdbdbd"/><rect x="1018.1" y="635.7" width="1.6" height=".8" fill="#bdbdbd"/><rect x="1018.1" y="642.3" width="1.6" height=".8" fill="#bdbdbd"/><rect x="1018.1" y="649.1" width="1.6" height=".8" fill="#bdbdbd"/><rect x="1018.1" y="655.6" width="1.6" height=".8" fill="#bdbdbd"/><rect x="1018.1" y="662.5" width="1.6" height=".8" fill="#bdbdbd"/><rect x="1018.1" y="669.0" width="1.6" height=".8" fill="#bdbdbd"/><rect x="1018.1" y="675.9" width="1.6" height=".8" fill="#bdbdbd"/><rect x="1018.1" y="682.4" width="1.6" height=".8" fill="#bdbdbd"/><rect x="1018.1" y="691.1" width="1.6" height=".8" fill="#bdbdbd"/><rect x="1018.1" y="698.9" width="1.6" height=".8" fill="#bdbdbd"/><rect x="1018.1" y="706.3" width="1.6" height=".8" fill="#bdbdbd"/><rect x="1018.1" y="713.8" width="1.6" height=".8" fill="#bdbdbd"/><rect x="1018.1" y="721.0" width="1.6" height=".8" fill="#bdbdbd"/><rect x="1018.1" y="728.4" width="1.6" height=".8" fill="#bdbdbd"/><rect x="1042.2" y="438.2" width="1" height="338.8" fill="#474747"/><circle cx="1071.6" cy="581.6" r="12.6" fill="#4a4a4a"/><circle cx="1071.6" cy="581.6" r="11.2" fill="#383838"/><circle cx="1071.6" cy="581.6" r="7.4" fill="none" stroke="#414141" stroke-width=".7"/><circle cx="1071.6" cy="581.6" r="3.8" fill="none" stroke="#414141" stroke-width=".7"/><path d="M1060.6 581.6 H1082.6 M1071.6 570.6 V592.6" stroke="#414141" stroke-width=".7"/><circle cx="1071.6" cy="566.0" r="1" fill="#7e7e7e"/><circle cx="1082.6" cy="570.6" r="1" fill="#7e7e7e"/><circle cx="1087.2" cy="581.6" r="1" fill="#7e7e7e"/><circle cx="1082.6" cy="592.6" r="1" fill="#7e7e7e"/><circle cx="1060.6" cy="592.6" r="1" fill="#7e7e7e"/><circle cx="1056.0" cy="581.6" r="1" fill="#7e7e7e"/><circle cx="1060.6" cy="570.6" r="1" fill="#7e7e7e"/><circle cx="1071.6" cy="579.6" r="2" fill="#44dd62"/><rect x="1048.9" y="628.5" width="8.8" height="1.2" fill="#858585"/><rect x="1048.9" y="641.3" width="8.8" height="1.2" fill="#858585"/><rect x="1048.9" y="653.9" width="8.8" height="1.2" fill="#f2f2f2"/><rect x="1048.9" y="666.6" width="8.8" height="1.2" fill="#858585"/><rect x="1048.9" y="679.8" width="8.8" height="1.2" fill="#858585"/><rect x="1048.9" y="688.1" width="8.8" height="1.2" fill="#858585"/><rect x="1048.9" y="698.5" width="8.8" height="1.2" fill="#858585"/><rect x="1048.9" y="706.6" width="8.8" height="1.2" fill="#858585"/><rect x="1048.9" y="715.6" width="8.8" height="1.2" fill="#858585"/><rect x="1048.9" y="720.0" width="8.8" height="1.2" fill="#858585"/><rect x="1048.9" y="728.0" width="8.8" height="1.2" fill="#858585"/><rect x="1054.1" y="632.9" width="3.6" height="1" fill="#7a7a7a"/><rect x="1054.1" y="637.1" width="3.6" height="1" fill="#7a7a7a"/><rect x="1054.1" y="645.6" width="3.6" height="1" fill="#7a7a7a"/><rect x="1054.1" y="649.8" width="3.6" height="1" fill="#7a7a7a"/><rect x="1054.1" y="658.2" width="3.6" height="1" fill="#7a7a7a"/><rect x="1054.1" y="662.5" width="3.6" height="1" fill="#7a7a7a"/><rect x="1054.1" y="671.1" width="3.6" height="1" fill="#7a7a7a"/><rect x="1054.1" y="675.5" width="3.6" height="1" fill="#7a7a7a"/><rect x="1054.1" y="684.0" width="3.6" height="1" fill="#7a7a7a"/><rect x="1054.1" y="690.8" width="3.6" height="1" fill="#7a7a7a"/><rect x="1054.1" y="693.4" width="3.6" height="1" fill="#7a7a7a"/><rect x="1054.1" y="696.0" width="3.6" height="1" fill="#7a7a7a"/><rect x="1054.1" y="700.6" width="3.6" height="1" fill="#7a7a7a"/><rect x="1054.1" y="702.7" width="3.6" height="1" fill="#7a7a7a"/><rect x="1054.1" y="704.7" width="3.6" height="1" fill="#7a7a7a"/><rect x="1054.1" y="709.0" width="3.6" height="1" fill="#7a7a7a"/><rect x="1054.1" y="711.2" width="3.6" height="1" fill="#7a7a7a"/><rect x="1054.1" y="713.5" width="3.6" height="1" fill="#7a7a7a"/><rect x="1054.1" y="722.8" width="3.6" height="1" fill="#7a7a7a"/><rect x="1054.1" y="725.4" width="3.6" height="1" fill="#7a7a7a"/><rect x="1057.9" y="627.6" width="1.7" height="102" fill="#2e2e2e"/><rect x="1079.5" y="627.2" width="9.799999999999999" height="103.4" rx="1.5" fill="#3a3a3a"/><rect x="1081.1" y="701.8" width="2.7" height="28.2" fill="#4be368"/><rect x="1085.3" y="704.2" width="2.7" height="25.8" fill="#4be368"/><rect x="1076.9" y="628.9" width="1.6" height=".8" fill="#bdbdbd"/><rect x="1076.9" y="635.7" width="1.6" height=".8" fill="#bdbdbd"/><rect x="1076.9" y="642.3" width="1.6" height=".8" fill="#bdbdbd"/><rect x="1076.9" y="649.1" width="1.6" height=".8" fill="#bdbdbd"/><rect x="1076.9" y="655.6" width="1.6" height=".8" fill="#bdbdbd"/><rect x="1076.9" y="662.5" width="1.6" height=".8" fill="#bdbdbd"/><rect x="1076.9" y="669.0" width="1.6" height=".8" fill="#bdbdbd"/><rect x="1076.9" y="675.9" width="1.6" height=".8" fill="#bdbdbd"/><rect x="1076.9" y="682.4" width="1.6" height=".8" fill="#bdbdbd"/><rect x="1076.9" y="691.1" width="1.6" height=".8" fill="#bdbdbd"/><rect x="1076.9" y="698.9" width="1.6" height=".8" fill="#bdbdbd"/><rect x="1076.9" y="706.3" width="1.6" height=".8" fill="#bdbdbd"/><rect x="1076.9" y="713.8" width="1.6" height=".8" fill="#bdbdbd"/><rect x="1076.9" y="721.0" width="1.6" height=".8" fill="#bdbdbd"/><rect x="1076.9" y="728.4" width="1.6" height=".8" fill="#bdbdbd"/><rect x="1100.9" y="438.2" width="1" height="338.8" fill="#474747"/><circle cx="1130.3" cy="581.6" r="12.6" fill="#4a4a4a"/><circle cx="1130.3" cy="581.6" r="11.2" fill="#383838"/><circle cx="1130.3" cy="581.6" r="7.4" fill="none" stroke="#414141" stroke-width=".7"/><circle cx="1130.3" cy="581.6" r="3.8" fill="none" stroke="#414141" stroke-width=".7"/><path d="M1119.3 581.6 H1141.3 M1130.3 570.6 V592.6" stroke="#414141" stroke-width=".7"/><circle cx="1130.3" cy="566.0" r="1" fill="#7e7e7e"/><circle cx="1141.3" cy="570.6" r="1" fill="#7e7e7e"/><circle cx="1145.9" cy="581.6" r="1" fill="#7e7e7e"/><circle cx="1141.3" cy="592.6" r="1" fill="#7e7e7e"/><circle cx="1119.3" cy="592.6" r="1" fill="#7e7e7e"/><circle cx="1114.7" cy="581.6" r="1" fill="#7e7e7e"/><circle cx="1119.3" cy="570.6" r="1" fill="#7e7e7e"/><circle cx="1130.3" cy="579.6" r="2" fill="#44dd62"/><rect x="1107.6" y="628.5" width="8.8" height="1.2" fill="#858585"/><rect x="1107.6" y="641.3" width="8.8" height="1.2" fill="#858585"/><rect x="1107.6" y="653.9" width="8.8" height="1.2" fill="#f2f2f2"/><rect x="1107.6" y="666.6" width="8.8" height="1.2" fill="#858585"/><rect x="1107.6" y="679.8" width="8.8" height="1.2" fill="#858585"/><rect x="1107.6" y="688.1" width="8.8" height="1.2" fill="#858585"/><rect x="1107.6" y="698.5" width="8.8" height="1.2" fill="#858585"/><rect x="1107.6" y="706.6" width="8.8" height="1.2" fill="#858585"/><rect x="1107.6" y="715.6" width="8.8" height="1.2" fill="#858585"/><rect x="1107.6" y="720.0" width="8.8" height="1.2" fill="#858585"/><rect x="1107.6" y="728.0" width="8.8" height="1.2" fill="#858585"/><rect x="1112.8" y="632.9" width="3.6" height="1" fill="#7a7a7a"/><rect x="1112.8" y="637.1" width="3.6" height="1" fill="#7a7a7a"/><rect x="1112.8" y="645.6" width="3.6" height="1" fill="#7a7a7a"/><rect x="1112.8" y="649.8" width="3.6" height="1" fill="#7a7a7a"/><rect x="1112.8" y="658.2" width="3.6" height="1" fill="#7a7a7a"/><rect x="1112.8" y="662.5" width="3.6" height="1" fill="#7a7a7a"/><rect x="1112.8" y="671.1" width="3.6" height="1" fill="#7a7a7a"/><rect x="1112.8" y="675.5" width="3.6" height="1" fill="#7a7a7a"/><rect x="1112.8" y="684.0" width="3.6" height="1" fill="#7a7a7a"/><rect x="1112.8" y="690.8" width="3.6" height="1" fill="#7a7a7a"/><rect x="1112.8" y="693.4" width="3.6" height="1" fill="#7a7a7a"/><rect x="1112.8" y="696.0" width="3.6" height="1" fill="#7a7a7a"/><rect x="1112.8" y="700.6" width="3.6" height="1" fill="#7a7a7a"/><rect x="1112.8" y="702.7" width="3.6" height="1" fill="#7a7a7a"/><rect x="1112.8" y="704.7" width="3.6" height="1" fill="#7a7a7a"/><rect x="1112.8" y="709.0" width="3.6" height="1" fill="#7a7a7a"/><rect x="1112.8" y="711.2" width="3.6" height="1" fill="#7a7a7a"/><rect x="1112.8" y="713.5" width="3.6" height="1" fill="#7a7a7a"/><rect x="1112.8" y="722.8" width="3.6" height="1" fill="#7a7a7a"/><rect x="1112.8" y="725.4" width="3.6" height="1" fill="#7a7a7a"/><rect x="1116.6" y="627.6" width="1.7" height="102" fill="#2e2e2e"/><rect x="1138.2" y="627.2" width="9.799999999999999" height="103.4" rx="1.5" fill="#3a3a3a"/><rect x="1139.8" y="700.2" width="2.7" height="29.8" fill="#4be368"/><rect x="1144.0" y="705" width="2.7" height="25.0" fill="#4be368"/><rect x="1144.0" y="703" width="2.7" height="1" fill="#4be368"/><rect x="1135.6" y="628.9" width="1.6" height=".8" fill="#bdbdbd"/><rect x="1135.6" y="635.7" width="1.6" height=".8" fill="#bdbdbd"/><rect x="1135.6" y="642.3" width="1.6" height=".8" fill="#bdbdbd"/><rect x="1135.6" y="649.1" width="1.6" height=".8" fill="#bdbdbd"/><rect x="1135.6" y="655.6" width="1.6" height=".8" fill="#bdbdbd"/><rect x="1135.6" y="662.5" width="1.6" height=".8" fill="#bdbdbd"/><rect x="1135.6" y="669.0" width="1.6" height=".8" fill="#bdbdbd"/><rect x="1135.6" y="675.9" width="1.6" height=".8" fill="#bdbdbd"/><rect x="1135.6" y="682.4" width="1.6" height=".8" fill="#bdbdbd"/><rect x="1135.6" y="691.1" width="1.6" height=".8" fill="#bdbdbd"/><rect x="1135.6" y="698.9" width="1.6" height=".8" fill="#bdbdbd"/><rect x="1135.6" y="706.3" width="1.6" height=".8" fill="#bdbdbd"/><rect x="1135.6" y="713.8" width="1.6" height=".8" fill="#bdbdbd"/><rect x="1135.6" y="721.0" width="1.6" height=".8" fill="#bdbdbd"/><rect x="1135.6" y="728.4" width="1.6" height=".8" fill="#bdbdbd"/><rect x="1159.7" y="438.2" width="1" height="338.8" fill="#474747"/><circle cx="1189.1" cy="581.6" r="12.6" fill="#4a4a4a"/><circle cx="1189.1" cy="581.6" r="11.2" fill="#383838"/><circle cx="1189.1" cy="581.6" r="7.4" fill="none" stroke="#414141" stroke-width=".7"/><circle cx="1189.1" cy="581.6" r="3.8" fill="none" stroke="#414141" stroke-width=".7"/><path d="M1178.1 581.6 H1200.1 M1189.1 570.6 V592.6" stroke="#414141" stroke-width=".7"/><circle cx="1189.1" cy="566.0" r="1" fill="#7e7e7e"/><circle cx="1200.1" cy="570.6" r="1" fill="#7e7e7e"/><circle cx="1204.7" cy="581.6" r="1" fill="#7e7e7e"/><circle cx="1200.1" cy="592.6" r="1" fill="#7e7e7e"/><circle cx="1178.1" cy="592.6" r="1" fill="#7e7e7e"/><circle cx="1173.5" cy="581.6" r="1" fill="#7e7e7e"/><circle cx="1178.1" cy="570.6" r="1" fill="#7e7e7e"/><circle cx="1189.1" cy="579.6" r="2" fill="#44dd62"/><rect x="1166.4" y="628.5" width="8.8" height="1.2" fill="#858585"/><rect x="1166.4" y="641.3" width="8.8" height="1.2" fill="#858585"/><rect x="1166.4" y="653.9" width="8.8" height="1.2" fill="#f2f2f2"/><rect x="1166.4" y="666.6" width="8.8" height="1.2" fill="#858585"/><rect x="1166.4" y="679.8" width="8.8" height="1.2" fill="#858585"/><rect x="1166.4" y="688.1" width="8.8" height="1.2" fill="#858585"/><rect x="1166.4" y="698.5" width="8.8" height="1.2" fill="#858585"/><rect x="1166.4" y="706.6" width="8.8" height="1.2" fill="#858585"/><rect x="1166.4" y="715.6" width="8.8" height="1.2" fill="#858585"/><rect x="1166.4" y="720.0" width="8.8" height="1.2" fill="#858585"/><rect x="1166.4" y="728.0" width="8.8" height="1.2" fill="#858585"/><rect x="1171.6" y="632.9" width="3.6" height="1" fill="#7a7a7a"/><rect x="1171.6" y="637.1" width="3.6" height="1" fill="#7a7a7a"/><rect x="1171.6" y="645.6" width="3.6" height="1" fill="#7a7a7a"/><rect x="1171.6" y="649.8" width="3.6" height="1" fill="#7a7a7a"/><rect x="1171.6" y="658.2" width="3.6" height="1" fill="#7a7a7a"/><rect x="1171.6" y="662.5" width="3.6" height="1" fill="#7a7a7a"/><rect x="1171.6" y="671.1" width="3.6" height="1" fill="#7a7a7a"/><rect x="1171.6" y="675.5" width="3.6" height="1" fill="#7a7a7a"/><rect x="1171.6" y="684.0" width="3.6" height="1" fill="#7a7a7a"/><rect x="1171.6" y="690.8" width="3.6" height="1" fill="#7a7a7a"/><rect x="1171.6" y="693.4" width="3.6" height="1" fill="#7a7a7a"/><rect x="1171.6" y="696.0" width="3.6" height="1" fill="#7a7a7a"/><rect x="1171.6" y="700.6" width="3.6" height="1" fill="#7a7a7a"/><rect x="1171.6" y="702.7" width="3.6" height="1" fill="#7a7a7a"/><rect x="1171.6" y="704.7" width="3.6" height="1" fill="#7a7a7a"/><rect x="1171.6" y="709.0" width="3.6" height="1" fill="#7a7a7a"/><rect x="1171.6" y="711.2" width="3.6" height="1" fill="#7a7a7a"/><rect x="1171.6" y="713.5" width="3.6" height="1" fill="#7a7a7a"/><rect x="1171.6" y="722.8" width="3.6" height="1" fill="#7a7a7a"/><rect x="1171.6" y="725.4" width="3.6" height="1" fill="#7a7a7a"/><rect x="1175.4" y="627.6" width="1.7" height="102" fill="#2e2e2e"/><rect x="1197.0" y="627.2" width="9.799999999999999" height="103.4" rx="1.5" fill="#3a3a3a"/><rect x="1198.6" y="620" width="2.7" height="110.0" fill="#4be368"/><rect x="1202.8" y="620" width="2.7" height="110.0" fill="#4be368"/><rect x="1194.4" y="628.9" width="1.6" height=".8" fill="#bdbdbd"/><rect x="1194.4" y="635.7" width="1.6" height=".8" fill="#bdbdbd"/><rect x="1194.4" y="642.3" width="1.6" height=".8" fill="#bdbdbd"/><rect x="1194.4" y="649.1" width="1.6" height=".8" fill="#bdbdbd"/><rect x="1194.4" y="655.6" width="1.6" height=".8" fill="#bdbdbd"/><rect x="1194.4" y="662.5" width="1.6" height=".8" fill="#bdbdbd"/><rect x="1194.4" y="669.0" width="1.6" height=".8" fill="#bdbdbd"/><rect x="1194.4" y="675.9" width="1.6" height=".8" fill="#bdbdbd"/><rect x="1194.4" y="682.4" width="1.6" height=".8" fill="#bdbdbd"/><rect x="1194.4" y="691.1" width="1.6" height=".8" fill="#bdbdbd"/><rect x="1194.4" y="698.9" width="1.6" height=".8" fill="#bdbdbd"/><rect x="1194.4" y="706.3" width="1.6" height=".8" fill="#bdbdbd"/><rect x="1194.4" y="713.8" width="1.6" height=".8" fill="#bdbdbd"/><rect x="1194.4" y="721.0" width="1.6" height=".8" fill="#bdbdbd"/><rect x="1194.4" y="728.4" width="1.6" height=".8" fill="#bdbdbd"/><rect x="1218.4" y="438.2" width="1" height="338.8" fill="#474747"/><circle cx="1247.8" cy="581.6" r="12.6" fill="#4a4a4a"/><circle cx="1247.8" cy="581.6" r="11.2" fill="#383838"/><circle cx="1247.8" cy="581.6" r="7.4" fill="none" stroke="#414141" stroke-width=".7"/><circle cx="1247.8" cy="581.6" r="3.8" fill="none" stroke="#414141" stroke-width=".7"/><path d="M1236.8 581.6 H1258.8 M1247.8 570.6 V592.6" stroke="#414141" stroke-width=".7"/><circle cx="1247.8" cy="566.0" r="1" fill="#7e7e7e"/><circle cx="1258.8" cy="570.6" r="1" fill="#7e7e7e"/><circle cx="1263.4" cy="581.6" r="1" fill="#7e7e7e"/><circle cx="1258.8" cy="592.6" r="1" fill="#7e7e7e"/><circle cx="1236.8" cy="592.6" r="1" fill="#7e7e7e"/><circle cx="1232.2" cy="581.6" r="1" fill="#7e7e7e"/><circle cx="1236.8" cy="570.6" r="1" fill="#7e7e7e"/><circle cx="1247.8" cy="579.6" r="2" fill="#44dd62"/><rect x="1225.1" y="628.5" width="8.8" height="1.2" fill="#858585"/><rect x="1225.1" y="641.3" width="8.8" height="1.2" fill="#858585"/><rect x="1225.1" y="653.9" width="8.8" height="1.2" fill="#f2f2f2"/><rect x="1225.1" y="666.6" width="8.8" height="1.2" fill="#858585"/><rect x="1225.1" y="679.8" width="8.8" height="1.2" fill="#858585"/><rect x="1225.1" y="688.1" width="8.8" height="1.2" fill="#858585"/><rect x="1225.1" y="698.5" width="8.8" height="1.2" fill="#858585"/><rect x="1225.1" y="706.6" width="8.8" height="1.2" fill="#858585"/><rect x="1225.1" y="715.6" width="8.8" height="1.2" fill="#858585"/><rect x="1225.1" y="720.0" width="8.8" height="1.2" fill="#858585"/><rect x="1225.1" y="728.0" width="8.8" height="1.2" fill="#858585"/><rect x="1230.3" y="632.9" width="3.6" height="1" fill="#7a7a7a"/><rect x="1230.3" y="637.1" width="3.6" height="1" fill="#7a7a7a"/><rect x="1230.3" y="645.6" width="3.6" height="1" fill="#7a7a7a"/><rect x="1230.3" y="649.8" width="3.6" height="1" fill="#7a7a7a"/><rect x="1230.3" y="658.2" width="3.6" height="1" fill="#7a7a7a"/><rect x="1230.3" y="662.5" width="3.6" height="1" fill="#7a7a7a"/><rect x="1230.3" y="671.1" width="3.6" height="1" fill="#7a7a7a"/><rect x="1230.3" y="675.5" width="3.6" height="1" fill="#7a7a7a"/><rect x="1230.3" y="684.0" width="3.6" height="1" fill="#7a7a7a"/><rect x="1230.3" y="690.8" width="3.6" height="1" fill="#7a7a7a"/><rect x="1230.3" y="693.4" width="3.6" height="1" fill="#7a7a7a"/><rect x="1230.3" y="696.0" width="3.6" height="1" fill="#7a7a7a"/><rect x="1230.3" y="700.6" width="3.6" height="1" fill="#7a7a7a"/><rect x="1230.3" y="702.7" width="3.6" height="1" fill="#7a7a7a"/><rect x="1230.3" y="704.7" width="3.6" height="1" fill="#7a7a7a"/><rect x="1230.3" y="709.0" width="3.6" height="1" fill="#7a7a7a"/><rect x="1230.3" y="711.2" width="3.6" height="1" fill="#7a7a7a"/><rect x="1230.3" y="713.5" width="3.6" height="1" fill="#7a7a7a"/><rect x="1230.3" y="722.8" width="3.6" height="1" fill="#7a7a7a"/><rect x="1230.3" y="725.4" width="3.6" height="1" fill="#7a7a7a"/><rect x="1234.1" y="627.6" width="1.7" height="102" fill="#2e2e2e"/><rect x="1255.7" y="627.2" width="9.799999999999999" height="103.4" rx="1.5" fill="#3a3a3a"/><rect x="1257.3" y="672.7" width="2.7" height="57.3" fill="#4be368"/><rect x="1261.5" y="671.5" width="2.7" height="58.5" fill="#4be368"/><rect x="1253.1" y="628.9" width="1.6" height=".8" fill="#bdbdbd"/><rect x="1253.1" y="635.7" width="1.6" height=".8" fill="#bdbdbd"/><rect x="1253.1" y="642.3" width="1.6" height=".8" fill="#bdbdbd"/><rect x="1253.1" y="649.1" width="1.6" height=".8" fill="#bdbdbd"/><rect x="1253.1" y="655.6" width="1.6" height=".8" fill="#bdbdbd"/><rect x="1253.1" y="662.5" width="1.6" height=".8" fill="#bdbdbd"/><rect x="1253.1" y="669.0" width="1.6" height=".8" fill="#bdbdbd"/><rect x="1253.1" y="675.9" width="1.6" height=".8" fill="#bdbdbd"/><rect x="1253.1" y="682.4" width="1.6" height=".8" fill="#bdbdbd"/><rect x="1253.1" y="691.1" width="1.6" height=".8" fill="#bdbdbd"/><rect x="1253.1" y="698.9" width="1.6" height=".8" fill="#bdbdbd"/><rect x="1253.1" y="706.3" width="1.6" height=".8" fill="#bdbdbd"/><rect x="1253.1" y="713.8" width="1.6" height=".8" fill="#bdbdbd"/><rect x="1253.1" y="721.0" width="1.6" height=".8" fill="#bdbdbd"/><rect x="1253.1" y="728.4" width="1.6" height=".8" fill="#bdbdbd"/><rect x="1277.2" y="438.2" width="1" height="338.8" fill="#474747"/><circle cx="1306.6" cy="581.6" r="12.6" fill="#4a4a4a"/><circle cx="1306.6" cy="581.6" r="11.2" fill="#383838"/><circle cx="1306.6" cy="581.6" r="7.4" fill="none" stroke="#414141" stroke-width=".7"/><circle cx="1306.6" cy="581.6" r="3.8" fill="none" stroke="#414141" stroke-width=".7"/><path d="M1295.6 581.6 H1317.6 M1306.6 570.6 V592.6" stroke="#414141" stroke-width=".7"/><circle cx="1306.6" cy="566.0" r="1" fill="#7e7e7e"/><circle cx="1317.6" cy="570.6" r="1" fill="#7e7e7e"/><circle cx="1322.2" cy="581.6" r="1" fill="#7e7e7e"/><circle cx="1317.6" cy="592.6" r="1" fill="#7e7e7e"/><circle cx="1295.6" cy="592.6" r="1" fill="#7e7e7e"/><circle cx="1291.0" cy="581.6" r="1" fill="#7e7e7e"/><circle cx="1295.6" cy="570.6" r="1" fill="#7e7e7e"/><circle cx="1306.6" cy="579.6" r="2" fill="#44dd62"/><rect x="1283.9" y="628.5" width="8.8" height="1.2" fill="#858585"/><rect x="1283.9" y="641.3" width="8.8" height="1.2" fill="#858585"/><rect x="1283.9" y="653.9" width="8.8" height="1.2" fill="#f2f2f2"/><rect x="1283.9" y="666.6" width="8.8" height="1.2" fill="#858585"/><rect x="1283.9" y="679.8" width="8.8" height="1.2" fill="#858585"/><rect x="1283.9" y="688.1" width="8.8" height="1.2" fill="#858585"/><rect x="1283.9" y="698.5" width="8.8" height="1.2" fill="#858585"/><rect x="1283.9" y="706.6" width="8.8" height="1.2" fill="#858585"/><rect x="1283.9" y="715.6" width="8.8" height="1.2" fill="#858585"/><rect x="1283.9" y="720.0" width="8.8" height="1.2" fill="#858585"/><rect x="1283.9" y="728.0" width="8.8" height="1.2" fill="#858585"/><rect x="1289.1" y="632.9" width="3.6" height="1" fill="#7a7a7a"/><rect x="1289.1" y="637.1" width="3.6" height="1" fill="#7a7a7a"/><rect x="1289.1" y="645.6" width="3.6" height="1" fill="#7a7a7a"/><rect x="1289.1" y="649.8" width="3.6" height="1" fill="#7a7a7a"/><rect x="1289.1" y="658.2" width="3.6" height="1" fill="#7a7a7a"/><rect x="1289.1" y="662.5" width="3.6" height="1" fill="#7a7a7a"/><rect x="1289.1" y="671.1" width="3.6" height="1" fill="#7a7a7a"/><rect x="1289.1" y="675.5" width="3.6" height="1" fill="#7a7a7a"/><rect x="1289.1" y="684.0" width="3.6" height="1" fill="#7a7a7a"/><rect x="1289.1" y="690.8" width="3.6" height="1" fill="#7a7a7a"/><rect x="1289.1" y="693.4" width="3.6" height="1" fill="#7a7a7a"/><rect x="1289.1" y="696.0" width="3.6" height="1" fill="#7a7a7a"/><rect x="1289.1" y="700.6" width="3.6" height="1" fill="#7a7a7a"/><rect x="1289.1" y="702.7" width="3.6" height="1" fill="#7a7a7a"/><rect x="1289.1" y="704.7" width="3.6" height="1" fill="#7a7a7a"/><rect x="1289.1" y="709.0" width="3.6" height="1" fill="#7a7a7a"/><rect x="1289.1" y="711.2" width="3.6" height="1" fill="#7a7a7a"/><rect x="1289.1" y="713.5" width="3.6" height="1" fill="#7a7a7a"/><rect x="1289.1" y="722.8" width="3.6" height="1" fill="#7a7a7a"/><rect x="1289.1" y="725.4" width="3.6" height="1" fill="#7a7a7a"/><rect x="1292.9" y="627.6" width="1.7" height="102" fill="#2e2e2e"/><rect x="1314.5" y="627.2" width="9.799999999999999" height="103.4" rx="1.5" fill="#3a3a3a"/><rect x="1316.1" y="650" width="2.7" height="80.0" fill="#4be368"/><rect x="1320.3" y="652" width="2.7" height="78.0" fill="#4be368"/><rect x="1311.9" y="628.9" width="1.6" height=".8" fill="#bdbdbd"/><rect x="1311.9" y="635.7" width="1.6" height=".8" fill="#bdbdbd"/><rect x="1311.9" y="642.3" width="1.6" height=".8" fill="#bdbdbd"/><rect x="1311.9" y="649.1" width="1.6" height=".8" fill="#bdbdbd"/><rect x="1311.9" y="655.6" width="1.6" height=".8" fill="#bdbdbd"/><rect x="1311.9" y="662.5" width="1.6" height=".8" fill="#bdbdbd"/><rect x="1311.9" y="669.0" width="1.6" height=".8" fill="#bdbdbd"/><rect x="1311.9" y="675.9" width="1.6" height=".8" fill="#bdbdbd"/><rect x="1311.9" y="682.4" width="1.6" height=".8" fill="#bdbdbd"/><rect x="1311.9" y="691.1" width="1.6" height=".8" fill="#bdbdbd"/><rect x="1311.9" y="698.9" width="1.6" height=".8" fill="#bdbdbd"/><rect x="1311.9" y="706.3" width="1.6" height=".8" fill="#bdbdbd"/><rect x="1311.9" y="713.8" width="1.6" height=".8" fill="#bdbdbd"/><rect x="1311.9" y="721.0" width="1.6" height=".8" fill="#bdbdbd"/><rect x="1311.9" y="728.4" width="1.6" height=".8" fill="#bdbdbd"/><path d="M102.2 757 Q102.2 765.2 110.2 765.2 H807.6" fill="none" stroke="#474747" stroke-width="1"/><rect x="101.6" y="757" width="2" height="9" fill="#555"/><path d="M102.2 757 Q102.2 765.2 110.2 765.2" fill="none" stroke="#474747" stroke-width="1"/><path d="M93.4 765.4 L96.2 768.4 L93.4 771.4" fill="none" stroke="#e0e0e0" stroke-width="1.1" stroke-linecap="round" stroke-linejoin="round"/></svg>
<div class="" style="left:47.9px;top:445.2px;width:49.8px;height:12px;background:#656565;border-radius:3px;"></div><div class="" style="left:60.9px;top:445.2px;width:1px;height:12px;background:#565656;"></div><span class="t" style="left:61.9px;width:35.8px;text-align:center;top:447.1px;font-size:8.6px;color:#d6d6d6;">Bus 7</span><div class="" style="left:47.9px;top:464px;width:49.8px;height:68.4px;background:#4c4c4c;border-radius:3px;"></div><div class="fx" style="left:47.9px;top:465.0px"><span class="t">Console EQ</span></div><div class="fx" style="left:47.9px;top:477.8px"><span class="t">Channel EQ</span></div><div class="fx" style="left:47.9px;top:490.6px"><span class="t">Space D</span></div><div class="fx ou" style="left:47.9px;top:550px"><span class="t">Surround</span></div><div class="db" style="left:47.1px"><span class="t">-1.0</span></div><div class="db g" style="left:73.9px"><span class="t">-35.2</span></div><div class="kn" style="left:53.9px;top:645.9px"></div><span class="t ml" style="left:57.3px;top:626.2px">0</span><span class="t ml" style="left:57.3px;top:633.2px">12</span><span class="t ml" style="left:57.3px;top:640.2px">24</span><span class="t ml" style="left:57.3px;top:646.4px">40</span><span class="t ml" style="left:57.3px;top:652.6px">60</span><span class="t ml" style="left:57.3px;top:659.1px">0</span><span class="t ml" style="left:57.3px;top:668.1px">6</span><span class="t ml" style="left:57.3px;top:677.1px">12</span><span class="t ml" style="left:57.3px;top:685.8px">18</span><span class="t ml" style="left:57.3px;top:694.6px">24</span><span class="t ml" style="left:57.3px;top:700.9px">30</span><span class="t ml" style="left:57.3px;top:711.0px">40</span><span class="t ml" style="left:57.3px;top:720.8px">50</span><span class="t ml" style="left:57.3px;top:725.7px">60</span><div class="" style="left:47.9px;top:749.7px;width:23.3px;height:11.6px;background:#6a6a6a;border-radius:3px;"></div><div class="" style="left:74.9px;top:749.7px;width:22.8px;height:11.6px;background:#6a6a6a;border-radius:3px;"></div><span class="t " style="left:55.7px;top:751.5px;font-size:8.6px;color:#f0f0f0;">M</span><span class="t " style="left:83.5px;top:751.5px;font-size:8.6px;color:#f0f0f0;">S</span><div style="left:43.90px;top:777px;width:58.15px;height:27px;background:#54c71b;"><span class="t" style="left:0;width:58.75px;text-align:center;top:3.9px;font-size:8.8px;color:#f4f4f4;">Vocal</span><span class="t" style="left:0;width:58.75px;text-align:center;top:13.4px;font-size:8.8px;color:#f4f4f4;">Textures</span></div><div class="" style="left:106.65px;top:445.2px;width:49.8px;height:12px;background:#656565;border-radius:3px;"></div><div class="" style="left:119.65px;top:445.2px;width:1px;height:12px;background:#565656;"></div><span class="t" style="left:120.7px;width:35.8px;text-align:center;top:447.1px;font-size:8.6px;color:#bdbdbd;">Input</span><div class="" style="left:106.65px;top:464px;width:49.8px;height:68.4px;background:#4c4c4c;border-radius:3px;"></div><div class="fx" style="left:106.7px;top:465.0px"><span class="t">Noise Gate</span></div><div class="fx" style="left:106.7px;top:477.8px"><span class="t">Channel EQ</span></div><div class="fx" style="left:106.7px;top:490.6px"><span class="t">Compressor</span></div><div class="fx" style="left:106.7px;top:503.4px"><span class="t">Space D</span></div><div class="fx ou" style="left:106.7px;top:550px"><span class="t">Surround</span></div><div class="db" style="left:105.9px"><span class="t">-2.4</span></div><div class="db g" style="left:132.7px"><span class="t">-17.1</span></div><div class="kn" style="left:112.7px;top:651.9px"></div><span class="t ml" style="left:116.1px;top:626.2px">0</span><span class="t ml" style="left:116.1px;top:633.2px">12</span><span class="t ml" style="left:116.1px;top:640.2px">24</span><span class="t ml" style="left:116.1px;top:646.4px">40</span><span class="t ml" style="left:116.1px;top:652.6px">60</span><span class="t ml" style="left:116.1px;top:659.1px">0</span><span class="t ml" style="left:116.1px;top:668.1px">6</span><span class="t ml" style="left:116.1px;top:677.1px">12</span><span class="t ml" style="left:116.1px;top:685.8px">18</span><span class="t ml" style="left:116.1px;top:694.6px">24</span><span class="t ml" style="left:116.1px;top:700.9px">30</span><span class="t ml" style="left:116.1px;top:711.0px">40</span><span class="t ml" style="left:116.1px;top:720.8px">50</span><span class="t ml" style="left:116.1px;top:725.7px">60</span><div class="" style="left:133.25px;top:734.6px;width:23px;height:11.6px;background:#6a6a6a;border-radius:3px;"></div><div class="" style="left:145.05px;top:734.6px;width:1px;height:11.6px;background:#5a5a5a;"></div><span class="t " style="left:136.4px;top:736.4px;font-size:8.6px;color:#f0f0f0;">R</span><span class="t " style="left:149.4px;top:736.4px;font-size:8.6px;color:#f0f0f0;">I</span><div class="" style="left:106.65px;top:749.7px;width:23.3px;height:11.6px;background:#6a6a6a;border-radius:3px;"></div><div class="" style="left:133.65px;top:749.7px;width:22.8px;height:11.6px;background:#6a6a6a;border-radius:3px;"></div><span class="t " style="left:114.5px;top:751.5px;font-size:8.6px;color:#f0f0f0;">M</span><span class="t " style="left:142.2px;top:751.5px;font-size:8.6px;color:#f0f0f0;">S</span><div style="left:102.65px;top:777px;width:58.15px;height:27px;background:#7cc617;"><span class="t" style="left:0;width:58.75px;text-align:center;top:3.9px;font-size:8.8px;color:#f4f4f4;">Distant</span><span class="t" style="left:0;width:58.75px;text-align:center;top:13.4px;font-size:8.8px;color:#f4f4f4;">Vocals</span></div><div class="" style="left:165.4px;top:445.2px;width:49.8px;height:12px;background:#656565;border-radius:3px;"></div><div class="" style="left:178.4px;top:445.2px;width:1px;height:12px;background:#565656;"></div><span class="t" style="left:179.4px;width:35.8px;text-align:center;top:447.1px;font-size:8.6px;color:#bdbdbd;">Input</span><div class="" style="left:165.4px;top:464px;width:49.8px;height:68.4px;background:#4c4c4c;border-radius:3px;"></div><div class="fx" style="left:165.4px;top:465.0px"><span class="t">Noise Gate</span></div><div class="fx" style="left:165.4px;top:477.8px"><span class="t">Channel EQ</span></div><div class="fx" style="left:165.4px;top:490.6px"><span class="t">Compressor</span></div><div class="fx" style="left:165.4px;top:503.4px"><span class="t">St-Delay</span></div><div class="fx ou" style="left:165.4px;top:550px"><span class="t">Surround</span></div><div class="db" style="left:164.6px"><span class="t">-3.0</span></div><div class="db g" style="left:191.4px"><span class="t">-18.1</span></div><div class="kn" style="left:171.4px;top:653.9px"></div><span class="t ml" style="left:174.8px;top:626.2px">0</span><span class="t ml" style="left:174.8px;top:633.2px">12</span><span class="t ml" style="left:174.8px;top:640.2px">24</span><span class="t ml" style="left:174.8px;top:646.4px">40</span><span class="t ml" style="left:174.8px;top:652.6px">60</span><span class="t ml" style="left:174.8px;top:659.1px">0</span><span class="t ml" style="left:174.8px;top:668.1px">6</span><span class="t ml" style="left:174.8px;top:677.1px">12</span><span class="t ml" style="left:174.8px;top:685.8px">18</span><span class="t ml" style="left:174.8px;top:694.6px">24</span><span class="t ml" style="left:174.8px;top:700.9px">30</span><span class="t ml" style="left:174.8px;top:711.0px">40</span><span class="t ml" style="left:174.8px;top:720.8px">50</span><span class="t ml" style="left:174.8px;top:725.7px">60</span><div class="" style="left:192.0px;top:734.6px;width:23px;height:11.6px;background:#6a6a6a;border-radius:3px;"></div><div class="" style="left:203.8px;top:734.6px;width:1px;height:11.6px;background:#5a5a5a;"></div><span class="t " style="left:195.2px;top:736.4px;font-size:8.6px;color:#f0f0f0;">R</span><span class="t " style="left:208.2px;top:736.4px;font-size:8.6px;color:#f0f0f0;">I</span><div class="" style="left:165.4px;top:749.7px;width:23.3px;height:11.6px;background:#6a6a6a;border-radius:3px;"></div><div class="" style="left:192.4px;top:749.7px;width:22.8px;height:11.6px;background:#6a6a6a;border-radius:3px;"></div><span class="t " style="left:173.2px;top:751.5px;font-size:8.6px;color:#f0f0f0;">M</span><span class="t " style="left:201.0px;top:751.5px;font-size:8.6px;color:#f0f0f0;">S</span><div style="left:161.40px;top:777px;width:58.15px;height:27px;background:#a5c815;"><span class="t" style="left:0;width:58.75px;text-align:center;top:3.9px;font-size:8.8px;color:#f4f4f4;">Near</span><span class="t" style="left:0;width:58.75px;text-align:center;top:13.4px;font-size:8.8px;color:#f4f4f4;">Vocals</span></div><div class="" style="left:224.15px;top:445.2px;width:49.8px;height:12px;background:#656565;border-radius:3px;"></div><div class="" style="left:237.15px;top:445.2px;width:1px;height:12px;background:#565656;"></div><span class="t" style="left:238.2px;width:35.8px;text-align:center;top:447.1px;font-size:8.6px;color:#bdbdbd;">Input</span><div class="" style="left:224.15px;top:464px;width:49.8px;height:68.4px;background:#4c4c4c;border-radius:3px;"></div><div class="fx" style="left:224.2px;top:465.0px"><span class="t">Noise Gate</span></div><div class="fx" style="left:224.2px;top:477.8px"><span class="t">Channel EQ</span></div><div class="fx" style="left:224.2px;top:490.6px"><span class="t">Compressor</span></div><div class="fx" style="left:224.2px;top:503.4px"><span class="t">St-Delay</span></div><div class="fx ou" style="left:224.2px;top:550px"><span class="t">Surround</span></div><div class="db" style="left:223.3px"><span class="t">-2.9</span></div><div class="db g" style="left:250.2px"><span class="t">-14.8</span></div><div class="kn" style="left:230.2px;top:653.9px"></div><span class="t ml" style="left:233.6px;top:626.2px">0</span><span class="t ml" style="left:233.6px;top:633.2px">12</span><span class="t ml" style="left:233.6px;top:640.2px">24</span><span class="t ml" style="left:233.6px;top:646.4px">40</span><span class="t ml" style="left:233.6px;top:652.6px">60</span><span class="t ml" style="left:233.6px;top:659.1px">0</span><span class="t ml" style="left:233.6px;top:668.1px">6</span><span class="t ml" style="left:233.6px;top:677.1px">12</span><span class="t ml" style="left:233.6px;top:685.8px">18</span><span class="t ml" style="left:233.6px;top:694.6px">24</span><span class="t ml" style="left:233.6px;top:700.9px">30</span><span class="t ml" style="left:233.6px;top:711.0px">40</span><span class="t ml" style="left:233.6px;top:720.8px">50</span><span class="t ml" style="left:233.6px;top:725.7px">60</span><div class="" style="left:250.75px;top:734.6px;width:23px;height:11.6px;background:#6a6a6a;border-radius:3px;"></div><div class="" style="left:262.55px;top:734.6px;width:1px;height:11.6px;background:#5a5a5a;"></div><span class="t " style="left:253.9px;top:736.4px;font-size:8.6px;color:#f0f0f0;">R</span><span class="t " style="left:266.9px;top:736.4px;font-size:8.6px;color:#f0f0f0;">I</span><div class="" style="left:224.15px;top:749.7px;width:23.3px;height:11.6px;background:#6a6a6a;border-radius:3px;"></div><div class="" style="left:251.15px;top:749.7px;width:22.8px;height:11.6px;background:#6a6a6a;border-radius:3px;"></div><span class="t " style="left:232.0px;top:751.5px;font-size:8.6px;color:#f0f0f0;">M</span><span class="t " style="left:259.8px;top:751.5px;font-size:8.6px;color:#f0f0f0;">S</span><div style="left:220.15px;top:777px;width:58.15px;height:27px;background:#cbca19;"><span class="t" style="left:0;width:58.75px;text-align:center;top:3.9px;font-size:8.8px;color:#f4f4f4;">Harmonies</span></div><div class="" style="left:282.9px;top:445.2px;width:49.8px;height:12px;background:#656565;border-radius:3px;"></div><div class="" style="left:295.9px;top:445.2px;width:1px;height:12px;background:#565656;"></div><span class="t" style="left:296.9px;width:35.8px;text-align:center;top:447.1px;font-size:8.6px;color:#bdbdbd;">Input</span><div class="" style="left:282.9px;top:464px;width:49.8px;height:68.4px;background:#4c4c4c;border-radius:3px;"></div><div class="fx" style="left:282.9px;top:465.0px"><span class="t">Noise Gate</span></div><div class="fx" style="left:282.9px;top:477.8px"><span class="t">Channel EQ</span></div><div class="fx" style="left:282.9px;top:490.6px"><span class="t">Compressor</span></div><div class="fx" style="left:282.9px;top:503.4px"><span class="t">St-Delay</span></div><div class="fx ou" style="left:282.9px;top:550px"><span class="t">Surround</span></div><div class="db" style="left:282.1px"><span class="t">-2.6</span></div><div class="db g" style="left:308.9px"><span class="t">-20.9</span></div><div class="kn" style="left:288.9px;top:652.4px"></div><span class="t ml" style="left:292.3px;top:626.4px">0</span><span class="t ml" style="left:292.3px;top:633.2px">3</span><span class="t ml" style="left:292.3px;top:639.8px">6</span><span class="t ml" style="left:292.3px;top:646.6px">9</span><span class="t ml" style="left:292.3px;top:653.1px">12</span><span class="t ml" style="left:292.3px;top:660.0px">15</span><span class="t ml" style="left:292.3px;top:666.5px">18</span><span class="t ml" style="left:292.3px;top:673.4px">21</span><span class="t ml" style="left:292.3px;top:679.9px">24</span><span class="t ml" style="left:292.3px;top:688.6px">30</span><span class="t ml" style="left:292.3px;top:696.4px">35</span><span class="t ml" style="left:292.3px;top:703.8px">40</span><span class="t ml" style="left:292.3px;top:711.3px">45</span><span class="t ml" style="left:292.3px;top:718.5px">50</span><span class="t ml" style="left:292.3px;top:725.9px">60</span><div class="" style="left:309.5px;top:734.6px;width:23px;height:11.6px;background:#6a6a6a;border-radius:3px;"></div><div class="" style="left:321.29999999999995px;top:734.6px;width:1px;height:11.6px;background:#5a5a5a;"></div><span class="t " style="left:312.7px;top:736.4px;font-size:8.6px;color:#f0f0f0;">R</span><span class="t " style="left:325.7px;top:736.4px;font-size:8.6px;color:#f0f0f0;">I</span><div class="" style="left:282.9px;top:749.7px;width:23.3px;height:11.6px;background:#6a6a6a;border-radius:3px;"></div><div class="" style="left:309.9px;top:749.7px;width:22.8px;height:11.6px;background:#6a6a6a;border-radius:3px;"></div><span class="t " style="left:290.7px;top:751.5px;font-size:8.6px;color:#f0f0f0;">M</span><span class="t " style="left:318.5px;top:751.5px;font-size:8.6px;color:#f0f0f0;">S</span><div style="left:278.90px;top:777px;width:58.15px;height:27px;background:#cfa318;"><span class="t" style="left:0;width:58.75px;text-align:center;top:3.9px;font-size:8.8px;color:#f4f4f4;">Main</span><span class="t" style="left:0;width:58.75px;text-align:center;top:13.4px;font-size:8.8px;color:#f4f4f4;">Vocal</span></div><div class="" style="left:341.65px;top:445.2px;width:49.8px;height:12px;background:#656565;border-radius:3px;"></div><div class="" style="left:354.65px;top:445.2px;width:1px;height:12px;background:#565656;"></div><span class="t" style="left:355.6px;width:35.8px;text-align:center;top:447.1px;font-size:8.6px;color:#bdbdbd;">Input</span><div class="" style="left:341.65px;top:464px;width:49.8px;height:68.4px;background:#4c4c4c;border-radius:3px;"></div><div class="fx" style="left:341.6px;top:465.0px"><span class="t">Noise Gate</span></div><div class="fx" style="left:341.6px;top:477.8px"><span class="t">Channel EQ</span></div><div class="fx" style="left:341.6px;top:490.6px"><span class="t">Compressor</span></div><div class="fx" style="left:341.6px;top:503.4px"><span class="t">St-Delay</span></div><div class="fx ou" style="left:341.6px;top:550px"><span class="t">Surround</span></div><div class="db" style="left:340.8px"><span class="t">-5.9</span></div><div class="db g" style="left:367.6px"><span class="t">-26.3</span></div><div class="kn" style="left:347.6px;top:666.9px"></div><span class="t ml" style="left:351.0px;top:626.2px">0</span><span class="t ml" style="left:351.0px;top:633.2px">12</span><span class="t ml" style="left:351.0px;top:640.2px">24</span><span class="t ml" style="left:351.0px;top:646.4px">40</span><span class="t ml" style="left:351.0px;top:652.6px">60</span><span class="t ml" style="left:351.0px;top:659.1px">0</span><span class="t ml" style="left:351.0px;top:668.1px">6</span><span class="t ml" style="left:351.0px;top:677.1px">12</span><span class="t ml" style="left:351.0px;top:685.8px">18</span><span class="t ml" style="left:351.0px;top:694.6px">24</span><span class="t ml" style="left:351.0px;top:700.9px">30</span><span class="t ml" style="left:351.0px;top:711.0px">40</span><span class="t ml" style="left:351.0px;top:720.8px">50</span><span class="t ml" style="left:351.0px;top:725.7px">60</span><div class="" style="left:368.25px;top:734.6px;width:23px;height:11.6px;background:#6a6a6a;border-radius:3px;"></div><div class="" style="left:380.04999999999995px;top:734.6px;width:1px;height:11.6px;background:#5a5a5a;"></div><span class="t " style="left:371.4px;top:736.4px;font-size:8.6px;color:#f0f0f0;">R</span><span class="t " style="left:384.4px;top:736.4px;font-size:8.6px;color:#f0f0f0;">I</span><div class="" style="left:341.65px;top:749.7px;width:23.3px;height:11.6px;background:#6a6a6a;border-radius:3px;"></div><div class="" style="left:368.65px;top:749.7px;width:22.8px;height:11.6px;background:#6a6a6a;border-radius:3px;"></div><span class="t " style="left:349.4px;top:751.5px;font-size:8.6px;color:#f0f0f0;">M</span><span class="t " style="left:377.2px;top:751.5px;font-size:8.6px;color:#f0f0f0;">S</span><div style="left:337.65px;top:777px;width:58.15px;height:27px;background:#cd7f14;"><span class="t" style="left:0;width:58.75px;text-align:center;top:3.9px;font-size:8.8px;color:#f4f4f4;">Backing</span><span class="t" style="left:0;width:58.75px;text-align:center;top:13.4px;font-size:8.8px;color:#f4f4f4;">Vocal</span></div><div class="" style="left:400.4px;top:445.2px;width:49.8px;height:12px;background:#656565;border-radius:3px;"></div><div class="" style="left:413.4px;top:445.2px;width:1px;height:12px;background:#565656;"></div><span class="t" style="left:414.4px;width:35.8px;text-align:center;top:447.1px;font-size:8.6px;color:#bdbdbd;">Input</span><div class="" style="left:400.4px;top:464px;width:49.8px;height:68.4px;background:#4c4c4c;border-radius:3px;"></div><div class="fx" style="left:400.4px;top:465.0px"><span class="t">Noise Gate</span></div><div class="fx" style="left:400.4px;top:477.8px"><span class="t">Channel EQ</span></div><div class="fx" style="left:400.4px;top:490.6px"><span class="t">Compressor</span></div><div class="fx" style="left:400.4px;top:503.4px"><span class="t">St-Delay</span></div><div class="fx ou" style="left:400.4px;top:550px"><span class="t">Surround</span></div><div class="db" style="left:399.6px"><span class="t">-8.4</span></div><div class="db g" style="left:426.4px"><span class="t">-28.4</span></div><div class="kn" style="left:406.4px;top:671.5px"></div><span class="t ml" style="left:409.8px;top:626.4px">0</span><span class="t ml" style="left:409.8px;top:633.2px">3</span><span class="t ml" style="left:409.8px;top:639.8px">6</span><span class="t ml" style="left:409.8px;top:646.6px">9</span><span class="t ml" style="left:409.8px;top:653.1px">12</span><span class="t ml" style="left:409.8px;top:660.0px">15</span><span class="t ml" style="left:409.8px;top:666.5px">18</span><span class="t ml" style="left:409.8px;top:673.4px">21</span><span class="t ml" style="left:409.8px;top:679.9px">24</span><span class="t ml" style="left:409.8px;top:688.6px">30</span><span class="t ml" style="left:409.8px;top:696.4px">35</span><span class="t ml" style="left:409.8px;top:703.8px">40</span><span class="t ml" style="left:409.8px;top:711.3px">45</span><span class="t ml" style="left:409.8px;top:718.5px">50</span><span class="t ml" style="left:409.8px;top:725.9px">60</span><div class="" style="left:427.0px;top:734.6px;width:23px;height:11.6px;background:#6a6a6a;border-radius:3px;"></div><div class="" style="left:438.79999999999995px;top:734.6px;width:1px;height:11.6px;background:#5a5a5a;"></div><span class="t " style="left:430.2px;top:736.4px;font-size:8.6px;color:#f0f0f0;">R</span><span class="t " style="left:443.2px;top:736.4px;font-size:8.6px;color:#f0f0f0;">I</span><div class="" style="left:400.4px;top:749.7px;width:23.3px;height:11.6px;background:#6a6a6a;border-radius:3px;"></div><div class="" style="left:427.4px;top:749.7px;width:22.8px;height:11.6px;background:#6a6a6a;border-radius:3px;"></div><span class="t " style="left:408.2px;top:751.5px;font-size:8.6px;color:#f0f0f0;">M</span><span class="t " style="left:436.0px;top:751.5px;font-size:8.6px;color:#f0f0f0;">S</span><div style="left:396.40px;top:777px;width:58.15px;height:27px;background:#cd5c14;"><span class="t" style="left:0;width:58.75px;text-align:center;top:3.9px;font-size:8.8px;color:#f4f4f4;">Harmony</span><span class="t" style="left:0;width:58.75px;text-align:center;top:13.4px;font-size:8.8px;color:#f4f4f4;">Vocal</span></div><div class="" style="left:459.15px;top:445.2px;width:49.8px;height:12px;background:#656565;border-radius:3px;"></div><div class="" style="left:472.15px;top:445.2px;width:1px;height:12px;background:#565656;"></div><span class="t" style="left:473.1px;width:35.8px;text-align:center;top:447.1px;font-size:8.6px;color:#bdbdbd;">Input</span><div class="" style="left:459.15px;top:464px;width:49.8px;height:68.4px;background:#4c4c4c;border-radius:3px;"></div><div class="fx" style="left:459.1px;top:465.0px"><span class="t">Noise Gate</span></div><div class="fx" style="left:459.1px;top:477.8px"><span class="t">Channel EQ</span></div><div class="fx" style="left:459.1px;top:490.6px"><span class="t">Compressor</span></div><div class="fx" style="left:459.1px;top:503.4px"><span class="t">St-Delay</span></div><div class="fx ou" style="left:459.1px;top:550px"><span class="t">Surround</span></div><div class="db" style="left:458.3px"><span class="t">-9.0</span></div><div class="db g" style="left:485.1px"><span class="t">-24.8</span></div><div class="kn" style="left:465.1px;top:673.6px"></div><span class="t ml" style="left:468.5px;top:626.2px">0</span><span class="t ml" style="left:468.5px;top:633.2px">12</span><span class="t ml" style="left:468.5px;top:640.2px">24</span><span class="t ml" style="left:468.5px;top:646.4px">40</span><span class="t ml" style="left:468.5px;top:652.6px">60</span><span class="t ml" style="left:468.5px;top:659.1px">0</span><span class="t ml" style="left:468.5px;top:668.1px">6</span><span class="t ml" style="left:468.5px;top:677.1px">12</span><span class="t ml" style="left:468.5px;top:685.8px">18</span><span class="t ml" style="left:468.5px;top:694.6px">24</span><span class="t ml" style="left:468.5px;top:700.9px">30</span><span class="t ml" style="left:468.5px;top:711.0px">40</span><span class="t ml" style="left:468.5px;top:720.8px">50</span><span class="t ml" style="left:468.5px;top:725.7px">60</span><div class="" style="left:485.75px;top:734.6px;width:23px;height:11.6px;background:#6a6a6a;border-radius:3px;"></div><div class="" style="left:497.54999999999995px;top:734.6px;width:1px;height:11.6px;background:#5a5a5a;"></div><span class="t " style="left:488.9px;top:736.4px;font-size:8.6px;color:#f0f0f0;">R</span><span class="t " style="left:501.9px;top:736.4px;font-size:8.6px;color:#f0f0f0;">I</span><div class="" style="left:459.15px;top:749.7px;width:23.3px;height:11.6px;background:#6a6a6a;border-radius:3px;"></div><div class="" style="left:486.15px;top:749.7px;width:22.8px;height:11.6px;background:#6a6a6a;border-radius:3px;"></div><span class="t " style="left:466.9px;top:751.5px;font-size:8.6px;color:#f0f0f0;">M</span><span class="t " style="left:494.8px;top:751.5px;font-size:8.6px;color:#f0f0f0;">S</span><div style="left:455.15px;top:777px;width:58.15px;height:27px;background:#ca3a10;"><span class="t" style="left:0;width:58.75px;text-align:center;top:3.9px;font-size:8.8px;color:#f4f4f4;">Choir</span></div><div class="" style="left:517.9px;top:445.2px;width:49.8px;height:12px;background:#656565;border-radius:3px;"></div><div class="" style="left:530.9px;top:445.2px;width:1px;height:12px;background:#565656;"></div><span class="t" style="left:531.9px;width:35.8px;text-align:center;top:447.1px;font-size:8.6px;color:#bdbdbd;">Input</span><div class="" style="left:517.9px;top:464px;width:49.8px;height:68.4px;background:#4c4c4c;border-radius:3px;"></div><div class="fx" style="left:517.9px;top:465.0px"><span class="t">Noise Gate</span></div><div class="fx" style="left:517.9px;top:477.8px"><span class="t">Channel EQ</span></div><div class="fx" style="left:517.9px;top:490.6px"><span class="t">Compressor</span></div><div class="fx" style="left:517.9px;top:503.4px"><span class="t">St-Delay</span></div><div class="fx ou" style="left:517.9px;top:550px"><span class="t">Surround</span></div><div class="db" style="left:517.1px"><span class="t">-9.6</span></div><div class="db g" style="left:543.9px"><span class="t">-24.0</span></div><div class="kn" style="left:523.9px;top:674.9px"></div><span class="t ml" style="left:527.3px;top:626.2px">0</span><span class="t ml" style="left:527.3px;top:633.2px">12</span><span class="t ml" style="left:527.3px;top:640.2px">24</span><span class="t ml" style="left:527.3px;top:646.4px">40</span><span class="t ml" style="left:527.3px;top:652.6px">60</span><span class="t ml" style="left:527.3px;top:659.1px">0</span><span class="t ml" style="left:527.3px;top:668.1px">6</span><span class="t ml" style="left:527.3px;top:677.1px">12</span><span class="t ml" style="left:527.3px;top:685.8px">18</span><span class="t ml" style="left:527.3px;top:694.6px">24</span><span class="t ml" style="left:527.3px;top:700.9px">30</span><span class="t ml" style="left:527.3px;top:711.0px">40</span><span class="t ml" style="left:527.3px;top:720.8px">50</span><span class="t ml" style="left:527.3px;top:725.7px">60</span><div class="" style="left:544.5px;top:734.6px;width:23px;height:11.6px;background:#6a6a6a;border-radius:3px;"></div><div class="" style="left:556.3px;top:734.6px;width:1px;height:11.6px;background:#5a5a5a;"></div><span class="t " style="left:547.7px;top:736.4px;font-size:8.6px;color:#f0f0f0;">R</span><span class="t " style="left:560.7px;top:736.4px;font-size:8.6px;color:#f0f0f0;">I</span><div class="" style="left:517.9px;top:749.7px;width:23.3px;height:11.6px;background:#6a6a6a;border-radius:3px;"></div><div class="" style="left:544.9px;top:749.7px;width:22.8px;height:11.6px;background:#6a6a6a;border-radius:3px;"></div><span class="t " style="left:525.7px;top:751.5px;font-size:8.6px;color:#f0f0f0;">M</span><span class="t " style="left:553.5px;top:751.5px;font-size:8.6px;color:#f0f0f0;">S</span><div style="left:513.90px;top:777px;width:58.15px;height:27px;background:#ce10a2;"><span class="t" style="left:0;width:58.75px;text-align:center;top:3.9px;font-size:8.8px;color:#f4f4f4;">Room</span><span class="t" style="left:0;width:58.75px;text-align:center;top:13.4px;font-size:8.8px;color:#f4f4f4;">Mic</span></div><div class="" style="left:576.65px;top:445.2px;width:49.8px;height:12px;background:#656565;border-radius:3px;"></div><div class="" style="left:589.65px;top:445.2px;width:1px;height:12px;background:#565656;"></div><span class="t" style="left:590.6px;width:35.8px;text-align:center;top:447.1px;font-size:8.6px;color:#bdbdbd;">Input</span><div class="" style="left:576.65px;top:464px;width:49.8px;height:68.4px;background:#4c4c4c;border-radius:3px;"></div><div class="fx" style="left:576.6px;top:465.0px"><span class="t">Noise Gate</span></div><div class="fx" style="left:576.6px;top:477.8px"><span class="t">Channel EQ</span></div><div class="fx" style="left:576.6px;top:490.6px"><span class="t">Compressor</span></div><div class="fx" style="left:576.6px;top:503.4px"><span class="t">St-Delay</span></div><div class="fx ou" style="left:576.6px;top:550px"><span class="t">Surround</span></div><div class="db" style="left:575.9px"><span class="t">-9.8</span></div><div class="db g" style="left:602.6px"><span class="t">-20.1</span></div><div class="kn" style="left:582.6px;top:676.2px"></div><span class="t ml" style="left:586.0px;top:626.2px">0</span><span class="t ml" style="left:586.0px;top:633.2px">12</span><span class="t ml" style="left:586.0px;top:640.2px">24</span><span class="t ml" style="left:586.0px;top:646.4px">40</span><span class="t ml" style="left:586.0px;top:652.6px">60</span><span class="t ml" style="left:586.0px;top:659.1px">0</span><span class="t ml" style="left:586.0px;top:668.1px">6</span><span class="t ml" style="left:586.0px;top:677.1px">12</span><span class="t ml" style="left:586.0px;top:685.8px">18</span><span class="t ml" style="left:586.0px;top:694.6px">24</span><span class="t ml" style="left:586.0px;top:700.9px">30</span><span class="t ml" style="left:586.0px;top:711.0px">40</span><span class="t ml" style="left:586.0px;top:720.8px">50</span><span class="t ml" style="left:586.0px;top:725.7px">60</span><div class="" style="left:603.25px;top:734.6px;width:23px;height:11.6px;background:#6a6a6a;border-radius:3px;"></div><div class="" style="left:615.05px;top:734.6px;width:1px;height:11.6px;background:#5a5a5a;"></div><span class="t " style="left:606.4px;top:736.4px;font-size:8.6px;color:#f0f0f0;">R</span><span class="t " style="left:619.4px;top:736.4px;font-size:8.6px;color:#f0f0f0;">I</span><div class="" style="left:576.65px;top:749.7px;width:23.3px;height:11.6px;background:#6a6a6a;border-radius:3px;"></div><div class="" style="left:603.65px;top:749.7px;width:22.8px;height:11.6px;background:#6a6a6a;border-radius:3px;"></div><span class="t " style="left:584.4px;top:751.5px;font-size:8.6px;color:#f0f0f0;">M</span><span class="t " style="left:612.2px;top:751.5px;font-size:8.6px;color:#f0f0f0;">S</span><div style="left:572.65px;top:777px;width:58.15px;height:27px;background:#c711cb;"><span class="t" style="left:0;width:58.75px;text-align:center;top:3.9px;font-size:8.8px;color:#f4f4f4;">Top</span><span class="t" style="left:0;width:58.75px;text-align:center;top:13.4px;font-size:8.8px;color:#f4f4f4;">Line</span></div><div class="" style="left:635.4px;top:445.2px;width:49.8px;height:12px;background:#656565;border-radius:3px;"></div><div class="" style="left:648.4px;top:445.2px;width:1px;height:12px;background:#565656;"></div><span class="t" style="left:649.4px;width:35.8px;text-align:center;top:447.1px;font-size:8.6px;color:#bdbdbd;">Input</span><div class="" style="left:635.4px;top:464px;width:49.8px;height:68.4px;background:#4c4c4c;border-radius:3px;"></div><div class="fx" style="left:635.4px;top:465.0px"><span class="t">Noise Gate</span></div><div class="fx" style="left:635.4px;top:477.8px"><span class="t">Channel EQ</span></div><div class="fx" style="left:635.4px;top:490.6px"><span class="t">Compressor</span></div><div class="fx" style="left:635.4px;top:503.4px"><span class="t">St-Delay</span></div><div class="fx ou" style="left:635.4px;top:550px"><span class="t">Surround</span></div><div class="db" style="left:634.6px"><span class="t">-10.0</span></div><div class="db g" style="left:661.4px"><span class="t">-24.5</span></div><div class="kn" style="left:641.4px;top:676.9px"></div><span class="t ml" style="left:644.8px;top:626.4px">0</span><span class="t ml" style="left:644.8px;top:633.2px">3</span><span class="t ml" style="left:644.8px;top:639.8px">6</span><span class="t ml" style="left:644.8px;top:646.6px">9</span><span class="t ml" style="left:644.8px;top:653.1px">12</span><span class="t ml" style="left:644.8px;top:660.0px">15</span><span class="t ml" style="left:644.8px;top:666.5px">18</span><span class="t ml" style="left:644.8px;top:673.4px">21</span><span class="t ml" style="left:644.8px;top:679.9px">24</span><span class="t ml" style="left:644.8px;top:688.6px">30</span><span class="t ml" style="left:644.8px;top:696.4px">35</span><span class="t ml" style="left:644.8px;top:703.8px">40</span><span class="t ml" style="left:644.8px;top:711.3px">45</span><span class="t ml" style="left:644.8px;top:718.5px">50</span><span class="t ml" style="left:644.8px;top:725.9px">60</span><div class="" style="left:662.0px;top:734.6px;width:23px;height:11.6px;background:#6a6a6a;border-radius:3px;"></div><div class="" style="left:673.8px;top:734.6px;width:1px;height:11.6px;background:#5a5a5a;"></div><span class="t " style="left:665.2px;top:736.4px;font-size:8.6px;color:#f0f0f0;">R</span><span class="t " style="left:678.2px;top:736.4px;font-size:8.6px;color:#f0f0f0;">I</span><div class="" style="left:635.4px;top:749.7px;width:23.3px;height:11.6px;background:#6a6a6a;border-radius:3px;"></div><div class="" style="left:662.4px;top:749.7px;width:22.8px;height:11.6px;background:#6a6a6a;border-radius:3px;"></div><span class="t " style="left:643.2px;top:751.5px;font-size:8.6px;color:#f0f0f0;">M</span><span class="t " style="left:671.0px;top:751.5px;font-size:8.6px;color:#f0f0f0;">S</span><div style="left:631.40px;top:777px;width:58.15px;height:27px;background:#a112cb;"><span class="t" style="left:0;width:58.75px;text-align:center;top:3.9px;font-size:8.8px;color:#f4f4f4;">Tenor</span></div><div class="" style="left:694.15px;top:445.2px;width:49.8px;height:12px;background:#656565;border-radius:3px;"></div><div class="" style="left:707.15px;top:445.2px;width:1px;height:12px;background:#565656;"></div><span class="t" style="left:708.1px;width:35.8px;text-align:center;top:447.1px;font-size:8.6px;color:#bdbdbd;">Input</span><div class="" style="left:694.15px;top:464px;width:49.8px;height:68.4px;background:#4c4c4c;border-radius:3px;"></div><div class="fx" style="left:694.1px;top:465.0px"><span class="t">Noise Gate</span></div><div class="fx" style="left:694.1px;top:477.8px"><span class="t">Channel EQ</span></div><div class="fx" style="left:694.1px;top:490.6px"><span class="t">Compressor</span></div><div class="fx" style="left:694.1px;top:503.4px"><span class="t">St-Delay</span></div><div class="fx ou" style="left:694.1px;top:550px"><span class="t">Surround</span></div><div class="db" style="left:693.4px"><span class="t">-7.2</span></div><div class="db g" style="left:720.1px"><span class="t">-32.1</span></div><div class="kn" style="left:700.1px;top:669.5px"></div><span class="t ml" style="left:703.5px;top:626.4px">0</span><span class="t ml" style="left:703.5px;top:633.2px">3</span><span class="t ml" style="left:703.5px;top:639.8px">6</span><span class="t ml" style="left:703.5px;top:646.6px">9</span><span class="t ml" style="left:703.5px;top:653.1px">12</span><span class="t ml" style="left:703.5px;top:660.0px">15</span><span class="t ml" style="left:703.5px;top:666.5px">18</span><span class="t ml" style="left:703.5px;top:673.4px">21</span><span class="t ml" style="left:703.5px;top:679.9px">24</span><span class="t ml" style="left:703.5px;top:688.6px">30</span><span class="t ml" style="left:703.5px;top:696.4px">35</span><span class="t ml" style="left:703.5px;top:703.8px">40</span><span class="t ml" style="left:703.5px;top:711.3px">45</span><span class="t ml" style="left:703.5px;top:718.5px">50</span><span class="t ml" style="left:703.5px;top:725.9px">60</span><div class="" style="left:720.75px;top:734.6px;width:23px;height:11.6px;background:#6a6a6a;border-radius:3px;"></div><div class="" style="left:732.55px;top:734.6px;width:1px;height:11.6px;background:#5a5a5a;"></div><span class="t " style="left:723.9px;top:736.4px;font-size:8.6px;color:#f0f0f0;">R</span><span class="t " style="left:736.9px;top:736.4px;font-size:8.6px;color:#f0f0f0;">I</span><div class="" style="left:694.15px;top:749.7px;width:23.3px;height:11.6px;background:#6a6a6a;border-radius:3px;"></div><div class="" style="left:721.15px;top:749.7px;width:22.8px;height:11.6px;background:#6a6a6a;border-radius:3px;"></div><span class="t " style="left:701.9px;top:751.5px;font-size:8.6px;color:#f0f0f0;">M</span><span class="t " style="left:729.8px;top:751.5px;font-size:8.6px;color:#f0f0f0;">S</span><div style="left:690.15px;top:777px;width:58.15px;height:27px;background:#8b2ed3;"><span class="t" style="left:0;width:58.75px;text-align:center;top:3.9px;font-size:8.8px;color:#f4f4f4;">Vocoder</span></div><div class="" style="left:752.9px;top:445.2px;width:49.8px;height:12px;background:#656565;border-radius:3px;"></div><div class="" style="left:765.9px;top:445.2px;width:1px;height:12px;background:#565656;"></div><span class="t" style="left:766.9px;width:35.8px;text-align:center;top:447.1px;font-size:8.6px;color:#bdbdbd;">Input</span><div class="" style="left:752.9px;top:464px;width:49.8px;height:68.4px;background:#4c4c4c;border-radius:3px;"></div><div class="fx" style="left:752.9px;top:465.0px"><span class="t">Noise Gate</span></div><div class="fx" style="left:752.9px;top:477.8px"><span class="t">Channel EQ</span></div><div class="fx" style="left:752.9px;top:490.6px"><span class="t">Compressor</span></div><div class="fx" style="left:752.9px;top:503.4px"><span class="t">St-Delay</span></div><div class="fx ou" style="left:752.9px;top:550px"><span class="t">Surround</span></div><div class="db" style="left:752.1px"><span class="t">-6.8</span></div><div class="db g" style="left:778.9px"><span class="t">-33.4</span></div><div class="kn" style="left:758.9px;top:667.9px"></div><span class="t ml" style="left:762.3px;top:626.4px">0</span><span class="t ml" style="left:762.3px;top:633.2px">3</span><span class="t ml" style="left:762.3px;top:639.8px">6</span><span class="t ml" style="left:762.3px;top:646.6px">9</span><span class="t ml" style="left:762.3px;top:653.1px">12</span><span class="t ml" style="left:762.3px;top:660.0px">15</span><span class="t ml" style="left:762.3px;top:666.5px">18</span><span class="t ml" style="left:762.3px;top:673.4px">21</span><span class="t ml" style="left:762.3px;top:679.9px">24</span><span class="t ml" style="left:762.3px;top:688.6px">30</span><span class="t ml" style="left:762.3px;top:696.4px">35</span><span class="t ml" style="left:762.3px;top:703.8px">40</span><span class="t ml" style="left:762.3px;top:711.3px">45</span><span class="t ml" style="left:762.3px;top:718.5px">50</span><span class="t ml" style="left:762.3px;top:725.9px">60</span><div class="" style="left:779.5px;top:734.6px;width:23px;height:11.6px;background:#6a6a6a;border-radius:3px;"></div><div class="" style="left:791.3px;top:734.6px;width:1px;height:11.6px;background:#5a5a5a;"></div><span class="t " style="left:782.7px;top:736.4px;font-size:8.6px;color:#f0f0f0;">R</span><span class="t " style="left:795.7px;top:736.4px;font-size:8.6px;color:#f0f0f0;">I</span><div class="" style="left:752.9px;top:749.7px;width:23.3px;height:11.6px;background:#6a6a6a;border-radius:3px;"></div><div class="" style="left:779.9px;top:749.7px;width:22.8px;height:11.6px;background:#6a6a6a;border-radius:3px;"></div><span class="t " style="left:760.7px;top:751.5px;font-size:8.6px;color:#f0f0f0;">M</span><span class="t " style="left:788.5px;top:751.5px;font-size:8.6px;color:#f0f0f0;">S</span><div style="left:748.90px;top:777px;width:58.15px;height:27px;background:#7538d8;"><span class="t" style="left:0;width:58.75px;text-align:center;top:3.9px;font-size:8.8px;color:#f4f4f4;">Sample</span></div><div class="fx" style="left:811.6px;top:445.2px;height:12px"><span class="t" style="top:1.9px">Alchemy</span></div><div class="" style="left:811.65px;top:464px;width:49.8px;height:68.4px;background:#4c4c4c;border-radius:3px;"></div><div class="fx" style="left:811.6px;top:465.0px"><span class="t">Channel EQ</span></div><div class="fx" style="left:811.6px;top:477.8px"><span class="t">Compressor</span></div><div class="fx ou" style="left:811.6px;top:550px"><span class="t">Surround</span></div><div class="db" style="left:810.9px"><span class="t">-3.4</span></div><div class="db g" style="left:837.6px"><span class="t">0.0</span></div><div class="kn" style="left:817.6px;top:656.4px"></div><span class="t ml" style="left:821.0px;top:626.4px">0</span><span class="t ml" style="left:821.0px;top:633.2px">3</span><span class="t ml" style="left:821.0px;top:639.8px">6</span><span class="t ml" style="left:821.0px;top:646.6px">9</span><span class="t ml" style="left:821.0px;top:653.1px">12</span><span class="t ml" style="left:821.0px;top:660.0px">15</span><span class="t ml" style="left:821.0px;top:666.5px">18</span><span class="t ml" style="left:821.0px;top:673.4px">21</span><span class="t ml" style="left:821.0px;top:679.9px">24</span><span class="t ml" style="left:821.0px;top:688.6px">30</span><span class="t ml" style="left:821.0px;top:696.4px">35</span><span class="t ml" style="left:821.0px;top:703.8px">40</span><span class="t ml" style="left:821.0px;top:711.3px">45</span><span class="t ml" style="left:821.0px;top:718.5px">50</span><span class="t ml" style="left:821.0px;top:725.9px">60</span><div class="" style="left:811.65px;top:749.7px;width:23.3px;height:11.6px;background:#6a6a6a;border-radius:3px;"></div><div class="" style="left:838.65px;top:749.7px;width:22.8px;height:11.6px;background:#6a6a6a;border-radius:3px;"></div><span class="t " style="left:819.4px;top:751.5px;font-size:8.6px;color:#f0f0f0;">M</span><span class="t " style="left:847.2px;top:751.5px;font-size:8.6px;color:#f0f0f0;">S</span><div style="left:807.65px;top:777px;width:58.15px;height:27px;background:#1bc62f;"><span class="t" style="left:0;width:58.75px;text-align:center;top:3.9px;font-size:8.8px;color:#f4f4f4;">Dark Synth</span><span class="t" style="left:0;width:58.75px;text-align:center;top:13.4px;font-size:8.8px;color:#f4f4f4;">Pad</span></div><div class="fx" style="left:870.4px;top:445.2px;height:12px"><span class="t" style="top:1.9px">Sampler</span></div><div class="" style="left:870.4px;top:464px;width:49.8px;height:68.4px;background:#4c4c4c;border-radius:3px;"></div><div class="fx" style="left:870.4px;top:465.0px"><span class="t">Channel EQ</span></div><div class="fx" style="left:870.4px;top:477.8px"><span class="t">Space D</span></div><div class="fx ou" style="left:870.4px;top:550px"><span class="t">Surround</span></div><div class="db" style="left:869.6px"><span class="t">-14.0</span></div><div class="db g" style="left:896.4px"><span class="t">-30.5</span></div><div class="kn" style="left:876.4px;top:692.9px"></div><span class="t ml" style="left:879.8px;top:626.4px">0</span><span class="t ml" style="left:879.8px;top:633.2px">3</span><span class="t ml" style="left:879.8px;top:639.8px">6</span><span class="t ml" style="left:879.8px;top:646.6px">9</span><span class="t ml" style="left:879.8px;top:653.1px">12</span><span class="t ml" style="left:879.8px;top:660.0px">15</span><span class="t ml" style="left:879.8px;top:666.5px">18</span><span class="t ml" style="left:879.8px;top:673.4px">21</span><span class="t ml" style="left:879.8px;top:679.9px">24</span><span class="t ml" style="left:879.8px;top:688.6px">30</span><span class="t ml" style="left:879.8px;top:696.4px">35</span><span class="t ml" style="left:879.8px;top:703.8px">40</span><span class="t ml" style="left:879.8px;top:711.3px">45</span><span class="t ml" style="left:879.8px;top:718.5px">50</span><span class="t ml" style="left:879.8px;top:725.9px">60</span><div class="" style="left:870.4px;top:749.7px;width:23.3px;height:11.6px;background:#6a6a6a;border-radius:3px;"></div><div class="" style="left:897.4px;top:749.7px;width:22.8px;height:11.6px;background:#6a6a6a;border-radius:3px;"></div><span class="t " style="left:878.2px;top:751.5px;font-size:8.6px;color:#f0f0f0;">M</span><span class="t " style="left:906.0px;top:751.5px;font-size:8.6px;color:#f0f0f0;">S</span><div style="left:866.40px;top:777px;width:58.15px;height:27px;background:#57c716;"><span class="t" style="left:0;width:58.75px;text-align:center;top:3.9px;font-size:8.8px;color:#f4f4f4;">Custom Soft</span><span class="t" style="left:0;width:58.75px;text-align:center;top:13.4px;font-size:8.8px;color:#f4f4f4;">Piano</span></div><div class="fx" style="left:929.1px;top:445.2px;height:12px"><span class="t" style="top:1.9px">Alchemy</span></div><div class="" style="left:929.15px;top:464px;width:49.8px;height:68.4px;background:#4c4c4c;border-radius:3px;"></div><div class="fx" style="left:929.1px;top:465.0px"><span class="t">Channel EQ</span></div><div class="fx" style="left:929.1px;top:477.8px"><span class="t">Chorus</span></div><div class="fx ou" style="left:929.1px;top:550px"><span class="t">Surround</span></div><div class="db" style="left:928.4px"><span class="t">-6.2</span></div><div class="db g" style="left:955.1px"><span class="t">-21.0</span></div><div class="kn" style="left:935.1px;top:665.9px"></div><span class="t ml" style="left:938.5px;top:626.4px">0</span><span class="t ml" style="left:938.5px;top:633.2px">3</span><span class="t ml" style="left:938.5px;top:639.8px">6</span><span class="t ml" style="left:938.5px;top:646.6px">9</span><span class="t ml" style="left:938.5px;top:653.1px">12</span><span class="t ml" style="left:938.5px;top:660.0px">15</span><span class="t ml" style="left:938.5px;top:666.5px">18</span><span class="t ml" style="left:938.5px;top:673.4px">21</span><span class="t ml" style="left:938.5px;top:679.9px">24</span><span class="t ml" style="left:938.5px;top:688.6px">30</span><span class="t ml" style="left:938.5px;top:696.4px">35</span><span class="t ml" style="left:938.5px;top:703.8px">40</span><span class="t ml" style="left:938.5px;top:711.3px">45</span><span class="t ml" style="left:938.5px;top:718.5px">50</span><span class="t ml" style="left:938.5px;top:725.9px">60</span><div class="" style="left:929.15px;top:749.7px;width:23.3px;height:11.6px;background:#6a6a6a;border-radius:3px;"></div><div class="" style="left:956.15px;top:749.7px;width:22.8px;height:11.6px;background:#6a6a6a;border-radius:3px;"></div><span class="t " style="left:936.9px;top:751.5px;font-size:8.6px;color:#f0f0f0;">M</span><span class="t " style="left:964.8px;top:751.5px;font-size:8.6px;color:#f0f0f0;">S</span><div style="left:925.15px;top:777px;width:58.15px;height:27px;background:#18c63c;"><span class="t" style="left:0;width:58.75px;text-align:center;top:3.9px;font-size:8.8px;color:#f4f4f4;">Night of</span><span class="t" style="left:0;width:58.75px;text-align:center;top:13.4px;font-size:8.8px;color:#f4f4f4;">Avalon</span></div><div class="fx" style="left:987.9px;top:445.2px;height:12px"><span class="t" style="top:1.9px">Retro Syn</span></div><div class="" style="left:987.9px;top:464px;width:49.8px;height:68.4px;background:#4c4c4c;border-radius:3px;"></div><div class="fx" style="left:987.9px;top:465.0px"><span class="t">Channel EQ</span></div><div class="fx" style="left:987.9px;top:477.8px"><span class="t">Tape Delay</span></div><div class="fx ou" style="left:987.9px;top:550px"><span class="t">Surround</span></div><div class="db" style="left:987.1px"><span class="t">-3.0</span></div><div class="db g" style="left:1013.9px"><span class="t">0.0</span></div><div class="kn" style="left:993.9px;top:654.4px"></div><span class="t ml" style="left:997.3px;top:626.4px">0</span><span class="t ml" style="left:997.3px;top:633.2px">3</span><span class="t ml" style="left:997.3px;top:639.8px">6</span><span class="t ml" style="left:997.3px;top:646.6px">9</span><span class="t ml" style="left:997.3px;top:653.1px">12</span><span class="t ml" style="left:997.3px;top:660.0px">15</span><span class="t ml" style="left:997.3px;top:666.5px">18</span><span class="t ml" style="left:997.3px;top:673.4px">21</span><span class="t ml" style="left:997.3px;top:679.9px">24</span><span class="t ml" style="left:997.3px;top:688.6px">30</span><span class="t ml" style="left:997.3px;top:696.4px">35</span><span class="t ml" style="left:997.3px;top:703.8px">40</span><span class="t ml" style="left:997.3px;top:711.3px">45</span><span class="t ml" style="left:997.3px;top:718.5px">50</span><span class="t ml" style="left:997.3px;top:725.9px">60</span><div class="" style="left:987.9px;top:749.7px;width:23.3px;height:11.6px;background:#6a6a6a;border-radius:3px;"></div><div class="" style="left:1014.9px;top:749.7px;width:22.8px;height:11.6px;background:#6a6a6a;border-radius:3px;"></div><span class="t " style="left:995.7px;top:751.5px;font-size:8.6px;color:#f0f0f0;">M</span><span class="t " style="left:1023.5px;top:751.5px;font-size:8.6px;color:#f0f0f0;">S</span><div style="left:983.90px;top:777px;width:58.15px;height:27px;background:#18c65e;"><span class="t" style="left:0;width:58.75px;text-align:center;top:3.9px;font-size:8.8px;color:#f4f4f4;">Lost</span><span class="t" style="left:0;width:58.75px;text-align:center;top:13.4px;font-size:8.8px;color:#f4f4f4;">Reverse</span></div><div class="fx" style="left:1046.7px;top:445.2px;height:12px"><span class="t" style="top:1.9px">Studio Str</span></div><div class="" style="left:1046.65px;top:464px;width:49.8px;height:68.4px;background:#4c4c4c;border-radius:3px;"></div><div class="fx" style="left:1046.7px;top:465.0px"><span class="t">Channel EQ</span></div><div class="fx" style="left:1046.7px;top:477.8px"><span class="t">Compressor</span></div><div class="fx ou" style="left:1046.7px;top:550px"><span class="t">Surround</span></div><div class="db" style="left:1045.9px"><span class="t">-10.8</span></div><div class="db g" style="left:1072.7px"><span class="t">-34.2</span></div><div class="kn" style="left:1052.7px;top:680.6px"></div><span class="t ml" style="left:1056.1px;top:626.4px">0</span><span class="t ml" style="left:1056.1px;top:633.2px">3</span><span class="t ml" style="left:1056.1px;top:639.8px">6</span><span class="t ml" style="left:1056.1px;top:646.6px">9</span><span class="t ml" style="left:1056.1px;top:653.1px">12</span><span class="t ml" style="left:1056.1px;top:660.0px">15</span><span class="t ml" style="left:1056.1px;top:666.5px">18</span><span class="t ml" style="left:1056.1px;top:673.4px">21</span><span class="t ml" style="left:1056.1px;top:679.9px">24</span><span class="t ml" style="left:1056.1px;top:688.6px">30</span><span class="t ml" style="left:1056.1px;top:696.4px">35</span><span class="t ml" style="left:1056.1px;top:703.8px">40</span><span class="t ml" style="left:1056.1px;top:711.3px">45</span><span class="t ml" style="left:1056.1px;top:718.5px">50</span><span class="t ml" style="left:1056.1px;top:725.9px">60</span><div class="" style="left:1046.65px;top:749.7px;width:23.3px;height:11.6px;background:#6a6a6a;border-radius:3px;"></div><div class="" style="left:1073.65px;top:749.7px;width:22.8px;height:11.6px;background:#6a6a6a;border-radius:3px;"></div><span class="t " style="left:1054.5px;top:751.5px;font-size:8.6px;color:#f0f0f0;">M</span><span class="t " style="left:1082.2px;top:751.5px;font-size:8.6px;color:#f0f0f0;">S</span><div style="left:1042.65px;top:777px;width:58.15px;height:27px;background:#18c68c;"><span class="t" style="left:0;width:58.75px;text-align:center;top:3.9px;font-size:8.8px;color:#f4f4f4;">String</span><span class="t" style="left:0;width:58.75px;text-align:center;top:13.4px;font-size:8.8px;color:#f4f4f4;">Vox</span></div><div class="fx" style="left:1105.4px;top:445.2px;height:12px"><span class="t" style="top:1.9px">Alchemy</span></div><div class="" style="left:1105.4px;top:464px;width:49.8px;height:68.4px;background:#4c4c4c;border-radius:3px;"></div><div class="fx" style="left:1105.4px;top:465.0px"><span class="t">Channel EQ</span></div><div class="fx" style="left:1105.4px;top:477.8px"><span class="t">Space D</span></div><div class="fx ou" style="left:1105.4px;top:550px"><span class="t">Surround</span></div><div class="db" style="left:1104.6px"><span class="t">-8.0</span></div><div class="db g" style="left:1131.4px"><span class="t">-33.8</span></div><div class="kn" style="left:1111.4px;top:671.6px"></div><span class="t ml" style="left:1114.8px;top:626.4px">0</span><span class="t ml" style="left:1114.8px;top:633.2px">3</span><span class="t ml" style="left:1114.8px;top:639.8px">6</span><span class="t ml" style="left:1114.8px;top:646.6px">9</span><span class="t ml" style="left:1114.8px;top:653.1px">12</span><span class="t ml" style="left:1114.8px;top:660.0px">15</span><span class="t ml" style="left:1114.8px;top:666.5px">18</span><span class="t ml" style="left:1114.8px;top:673.4px">21</span><span class="t ml" style="left:1114.8px;top:679.9px">24</span><span class="t ml" style="left:1114.8px;top:688.6px">30</span><span class="t ml" style="left:1114.8px;top:696.4px">35</span><span class="t ml" style="left:1114.8px;top:703.8px">40</span><span class="t ml" style="left:1114.8px;top:711.3px">45</span><span class="t ml" style="left:1114.8px;top:718.5px">50</span><span class="t ml" style="left:1114.8px;top:725.9px">60</span><div class="" style="left:1105.4px;top:749.7px;width:23.3px;height:11.6px;background:#6a6a6a;border-radius:3px;"></div><div class="" style="left:1132.4px;top:749.7px;width:22.8px;height:11.6px;background:#6a6a6a;border-radius:3px;"></div><span class="t " style="left:1113.2px;top:751.5px;font-size:8.6px;color:#f0f0f0;">M</span><span class="t " style="left:1141.0px;top:751.5px;font-size:8.6px;color:#f0f0f0;">S</span><div style="left:1101.40px;top:777px;width:58.15px;height:27px;background:#18c6ae;"><span class="t" style="left:0;width:58.75px;text-align:center;top:3.9px;font-size:8.8px;color:#f4f4f4;">Moonlight</span><span class="t" style="left:0;width:58.75px;text-align:center;top:13.4px;font-size:8.8px;color:#f4f4f4;">Ark</span></div><div class="fx" style="left:1164.2px;top:445.2px;height:12px"><span class="t" style="top:1.9px">ES2</span></div><div class="" style="left:1164.15px;top:464px;width:49.8px;height:68.4px;background:#4c4c4c;border-radius:3px;"></div><div class="fx" style="left:1164.2px;top:465.0px"><span class="t">Compressor</span></div><div class="fx" style="left:1164.2px;top:477.8px"><span class="t">Channel EQ</span></div><div class="fx ou" style="left:1164.2px;top:550px"><span class="t">Surround</span></div><div class="db" style="left:1163.4px"><span class="t">-7.6</span></div><div class="db g" style="left:1190.2px"><span class="t">0.0</span></div><div class="kn" style="left:1170.2px;top:670.4px"></div><span class="t ml" style="left:1173.6px;top:626.4px">0</span><span class="t ml" style="left:1173.6px;top:633.2px">3</span><span class="t ml" style="left:1173.6px;top:639.8px">6</span><span class="t ml" style="left:1173.6px;top:646.6px">9</span><span class="t ml" style="left:1173.6px;top:653.1px">12</span><span class="t ml" style="left:1173.6px;top:660.0px">15</span><span class="t ml" style="left:1173.6px;top:666.5px">18</span><span class="t ml" style="left:1173.6px;top:673.4px">21</span><span class="t ml" style="left:1173.6px;top:679.9px">24</span><span class="t ml" style="left:1173.6px;top:688.6px">30</span><span class="t ml" style="left:1173.6px;top:696.4px">35</span><span class="t ml" style="left:1173.6px;top:703.8px">40</span><span class="t ml" style="left:1173.6px;top:711.3px">45</span><span class="t ml" style="left:1173.6px;top:718.5px">50</span><span class="t ml" style="left:1173.6px;top:725.9px">60</span><div class="" style="left:1164.15px;top:749.7px;width:23.3px;height:11.6px;background:#6a6a6a;border-radius:3px;"></div><div class="" style="left:1191.15px;top:749.7px;width:22.8px;height:11.6px;background:#6a6a6a;border-radius:3px;"></div><span class="t " style="left:1172.0px;top:751.5px;font-size:8.6px;color:#f0f0f0;">M</span><span class="t " style="left:1199.8px;top:751.5px;font-size:8.6px;color:#f0f0f0;">S</span><div style="left:1160.15px;top:777px;width:58.15px;height:27px;background:#18c2cb;"><span class="t" style="left:0;width:58.75px;text-align:center;top:3.9px;font-size:8.8px;color:#f4f4f4;">Ocean</span><span class="t" style="left:0;width:58.75px;text-align:center;top:13.4px;font-size:8.8px;color:#f4f4f4;">Bass</span></div><div class="fx" style="left:1222.9px;top:445.2px;height:12px"><span class="t" style="top:1.9px">Drum Kit</span></div><div class="" style="left:1222.9px;top:464px;width:49.8px;height:68.4px;background:#4c4c4c;border-radius:3px;"></div><div class="fx" style="left:1222.9px;top:465.0px"><span class="t">Channel EQ</span></div><div class="fx ou" style="left:1222.9px;top:550px"><span class="t">Surround</span></div><div class="db" style="left:1222.1px"><span class="t">0.0</span></div><div class="db g" style="left:1248.9px"><span class="t">-18.1</span></div><div class="kn" style="left:1228.9px;top:642.4px"></div><span class="t ml" style="left:1232.3px;top:626.4px">0</span><span class="t ml" style="left:1232.3px;top:633.2px">3</span><span class="t ml" style="left:1232.3px;top:639.8px">6</span><span class="t ml" style="left:1232.3px;top:646.6px">9</span><span class="t ml" style="left:1232.3px;top:653.1px">12</span><span class="t ml" style="left:1232.3px;top:660.0px">15</span><span class="t ml" style="left:1232.3px;top:666.5px">18</span><span class="t ml" style="left:1232.3px;top:673.4px">21</span><span class="t ml" style="left:1232.3px;top:679.9px">24</span><span class="t ml" style="left:1232.3px;top:688.6px">30</span><span class="t ml" style="left:1232.3px;top:696.4px">35</span><span class="t ml" style="left:1232.3px;top:703.8px">40</span><span class="t ml" style="left:1232.3px;top:711.3px">45</span><span class="t ml" style="left:1232.3px;top:718.5px">50</span><span class="t ml" style="left:1232.3px;top:725.9px">60</span><div class="" style="left:1222.9px;top:749.7px;width:23.3px;height:11.6px;background:#6a6a6a;border-radius:3px;"></div><div class="" style="left:1249.9px;top:749.7px;width:22.8px;height:11.6px;background:#6a6a6a;border-radius:3px;"></div><span class="t " style="left:1230.7px;top:751.5px;font-size:8.6px;color:#f0f0f0;">M</span><span class="t " style="left:1258.5px;top:751.5px;font-size:8.6px;color:#f0f0f0;">S</span><div style="left:1218.90px;top:777px;width:58.15px;height:27px;background:#189cd2;"><span class="t" style="left:0;width:58.75px;text-align:center;top:3.9px;font-size:8.8px;color:#f4f4f4;">African</span><span class="t" style="left:0;width:58.75px;text-align:center;top:13.4px;font-size:8.8px;color:#f4f4f4;">Kit</span></div><div class="fx" style="left:1281.7px;top:445.2px;height:12px"><span class="t" style="top:1.9px">Sampler</span></div><div class="" style="left:1281.65px;top:464px;width:49.8px;height:68.4px;background:#4c4c4c;border-radius:3px;"></div><div class="fx" style="left:1281.7px;top:465.0px"><span class="t">Channel EQ</span></div><div class="fx" style="left:1281.7px;top:477.8px"><span class="t">Compressor</span></div><div class="fx" style="left:1281.7px;top:490.6px"><span class="t">Channel EQ</span></div><div class="fx" style="left:1281.7px;top:503.4px"><span class="t">Overdrive</span></div><div class="fx" style="left:1281.7px;top:516.2px"><span class="t">Limiter</span></div><div class="fx ou" style="left:1281.7px;top:550px"><span class="t">Surround</span></div><div class="db" style="left:1280.9px"><span class="t">-1.0</span></div><div class="db g" style="left:1307.7px"><span class="t">-9.1</span></div><div class="kn" style="left:1287.7px;top:656.9px"></div><span class="t ml" style="left:1291.1px;top:626.4px">0</span><span class="t ml" style="left:1291.1px;top:633.2px">3</span><span class="t ml" style="left:1291.1px;top:639.8px">6</span><span class="t ml" style="left:1291.1px;top:646.6px">9</span><span class="t ml" style="left:1291.1px;top:653.1px">12</span><span class="t ml" style="left:1291.1px;top:660.0px">15</span><span class="t ml" style="left:1291.1px;top:666.5px">18</span><span class="t ml" style="left:1291.1px;top:673.4px">21</span><span class="t ml" style="left:1291.1px;top:679.9px">24</span><span class="t ml" style="left:1291.1px;top:688.6px">30</span><span class="t ml" style="left:1291.1px;top:696.4px">35</span><span class="t ml" style="left:1291.1px;top:703.8px">40</span><span class="t ml" style="left:1291.1px;top:711.3px">45</span><span class="t ml" style="left:1291.1px;top:718.5px">50</span><span class="t ml" style="left:1291.1px;top:725.9px">60</span><div class="" style="left:1281.65px;top:749.7px;width:23.3px;height:11.6px;background:#6a6a6a;border-radius:3px;"></div><div class="" style="left:1308.65px;top:749.7px;width:22.8px;height:11.6px;background:#6a6a6a;border-radius:3px;"></div><span class="t " style="left:1289.5px;top:751.5px;font-size:8.6px;color:#f0f0f0;">M</span><span class="t " style="left:1317.2px;top:751.5px;font-size:8.6px;color:#f0f0f0;">S</span><div style="left:1277.65px;top:777px;width:58.15px;height:27px;background:#1e70d8;"><span class="t" style="left:0;width:58.75px;text-align:center;top:3.9px;font-size:8.8px;color:#f4f4f4;"></span></div>
<svg style="left:0;top:0" width="1286" height="804"><rect x="51.3" y="447.8" width="6.6" height="6.6" fill="none" stroke="#e4e4e4" stroke-width=".8"/><rect x="50.4" y="446.9" width="1.8" height="1.8" fill="#e4e4e4"/><rect x="57.0" y="446.9" width="1.8" height="1.8" fill="#e4e4e4"/><rect x="50.4" y="453.5" width="1.8" height="1.8" fill="#e4e4e4"/><rect x="57.0" y="453.5" width="1.8" height="1.8" fill="#e4e4e4"/><rect x="110.1" y="447.8" width="6.6" height="6.6" fill="none" stroke="#e4e4e4" stroke-width=".8"/><rect x="109.2" y="446.9" width="1.8" height="1.8" fill="#e4e4e4"/><rect x="115.8" y="446.9" width="1.8" height="1.8" fill="#e4e4e4"/><rect x="109.2" y="453.5" width="1.8" height="1.8" fill="#e4e4e4"/><rect x="115.8" y="453.5" width="1.8" height="1.8" fill="#e4e4e4"/><rect x="168.8" y="447.8" width="6.6" height="6.6" fill="none" stroke="#e4e4e4" stroke-width=".8"/><rect x="167.9" y="446.9" width="1.8" height="1.8" fill="#e4e4e4"/><rect x="174.5" y="446.9" width="1.8" height="1.8" fill="#e4e4e4"/><rect x="167.9" y="453.5" width="1.8" height="1.8" fill="#e4e4e4"/><rect x="174.5" y="453.5" width="1.8" height="1.8" fill="#e4e4e4"/><rect x="227.6" y="447.8" width="6.6" height="6.6" fill="none" stroke="#e4e4e4" stroke-width=".8"/><rect x="226.7" y="446.9" width="1.8" height="1.8" fill="#e4e4e4"/><rect x="233.2" y="446.9" width="1.8" height="1.8" fill="#e4e4e4"/><rect x="226.7" y="453.5" width="1.8" height="1.8" fill="#e4e4e4"/><rect x="233.2" y="453.5" width="1.8" height="1.8" fill="#e4e4e4"/><circle cx="289.6" cy="451.2" r="2.3" fill="none" stroke="#dcdcdc" stroke-width=".9"/><rect x="345.0" y="447.8" width="6.6" height="6.6" fill="none" stroke="#e4e4e4" stroke-width=".8"/><rect x="344.1" y="446.9" width="1.8" height="1.8" fill="#e4e4e4"/><rect x="350.8" y="446.9" width="1.8" height="1.8" fill="#e4e4e4"/><rect x="344.1" y="453.5" width="1.8" height="1.8" fill="#e4e4e4"/><rect x="350.8" y="453.5" width="1.8" height="1.8" fill="#e4e4e4"/><circle cx="407.1" cy="451.2" r="2.3" fill="none" stroke="#dcdcdc" stroke-width=".9"/><rect x="462.5" y="447.8" width="6.6" height="6.6" fill="none" stroke="#e4e4e4" stroke-width=".8"/><rect x="461.6" y="446.9" width="1.8" height="1.8" fill="#e4e4e4"/><rect x="468.2" y="446.9" width="1.8" height="1.8" fill="#e4e4e4"/><rect x="461.6" y="453.5" width="1.8" height="1.8" fill="#e4e4e4"/><rect x="468.2" y="453.5" width="1.8" height="1.8" fill="#e4e4e4"/><rect x="521.3" y="447.8" width="6.6" height="6.6" fill="none" stroke="#e4e4e4" stroke-width=".8"/><rect x="520.4" y="446.9" width="1.8" height="1.8" fill="#e4e4e4"/><rect x="527.0" y="446.9" width="1.8" height="1.8" fill="#e4e4e4"/><rect x="520.4" y="453.5" width="1.8" height="1.8" fill="#e4e4e4"/><rect x="527.0" y="453.5" width="1.8" height="1.8" fill="#e4e4e4"/><rect x="580.0" y="447.8" width="6.6" height="6.6" fill="none" stroke="#e4e4e4" stroke-width=".8"/><rect x="579.1" y="446.9" width="1.8" height="1.8" fill="#e4e4e4"/><rect x="585.8" y="446.9" width="1.8" height="1.8" fill="#e4e4e4"/><rect x="579.1" y="453.5" width="1.8" height="1.8" fill="#e4e4e4"/><rect x="585.8" y="453.5" width="1.8" height="1.8" fill="#e4e4e4"/><rect x="638.8" y="447.8" width="6.6" height="6.6" fill="none" stroke="#e4e4e4" stroke-width=".8"/><rect x="637.9" y="446.9" width="1.8" height="1.8" fill="#e4e4e4"/><rect x="644.5" y="446.9" width="1.8" height="1.8" fill="#e4e4e4"/><rect x="637.9" y="453.5" width="1.8" height="1.8" fill="#e4e4e4"/><rect x="644.5" y="453.5" width="1.8" height="1.8" fill="#e4e4e4"/><rect x="697.5" y="447.8" width="6.6" height="6.6" fill="none" stroke="#e4e4e4" stroke-width=".8"/><rect x="696.6" y="446.9" width="1.8" height="1.8" fill="#e4e4e4"/><rect x="703.2" y="446.9" width="1.8" height="1.8" fill="#e4e4e4"/><rect x="696.6" y="453.5" width="1.8" height="1.8" fill="#e4e4e4"/><rect x="703.2" y="453.5" width="1.8" height="1.8" fill="#e4e4e4"/><rect x="756.3" y="447.8" width="6.6" height="6.6" fill="none" stroke="#e4e4e4" stroke-width=".8"/><rect x="755.4" y="446.9" width="1.8" height="1.8" fill="#e4e4e4"/><rect x="762.0" y="446.9" width="1.8" height="1.8" fill="#e4e4e4"/><rect x="755.4" y="453.5" width="1.8" height="1.8" fill="#e4e4e4"/><rect x="762.0" y="453.5" width="1.8" height="1.8" fill="#e4e4e4"/></svg>
</div>
<div class="abs" id="master" style="left:566.2px;top:132.6px;width:700.2px;height:534.3px;border-radius:9.5px;background:#e4e4e4;box-shadow:0 5px 14px rgba(0,0,0,.28);">
<div style="left:2px;top:2.1px;width:696.2px;height:529.9px;border-radius:8px;background:#131a24;overflow:hidden;">
<div class="" style="left:0px;top:0px;width:696.2px;height:21.1px;background:#262626;"></div><div class="" style="left:0px;top:504.9px;width:696.2px;height:30px;background:#252525;"></div><div class="" style="left:0px;top:504.4px;width:696.2px;height:1px;background:#0d1218;"></div><div class="" style="left:3.8px;top:4.4px;width:9.5px;height:9.5px;background:#ff6a35;border-radius:5px;"></div><span class="t" style="left:-1.4px;width:696.2px;text-align:center;top:5px;font-size:10.4px;font-weight:700;color:#ececec;">Master</span><svg style="left:678.8px;top:3.9px;" width="12" height="10" viewBox="0 0 12 10"><rect x=".6" y=".6" width="10.8" height="8.4" rx="1.4" fill="none" stroke="#c9c9c9" stroke-width="1"/><path d="M.6 2.5 H11.4" stroke="#c9c9c9" stroke-width="1.2"/><path d="M6 7.6 V4.4 M4.6 5.6 L6 4.2 L7.4 5.6" stroke="#c9c9c9" stroke-width=".9" fill="none"/></svg><span class="t " style="left:164.2px;top:42.3px;font-size:14.8px;color:#4e6276;">Monitoring Format:</span><div class="" style="left:295.8px;top:35.3px;width:236px;height:26.4px;background:#212a35;border-radius:4px;"></div><span class="t " style="left:303.6px;top:42.5px;font-size:14.3px;color:#aee8b0;">Apple Renderer (Head Tracking)</span><svg style="left:516.4px;top:42.9px;" width="8" height="12" viewBox="0 0 8 12"><path d="M1.8 4.4 L4 2.2 L6.2 4.4 M1.8 7.6 L4 9.8 L6.2 7.6" fill="none" stroke="#b4c4d4" stroke-width="1.1" stroke-linecap="round" stroke-linejoin="round"/></svg><svg style="left:654.3px;top:42.7px;" width="16" height="10" viewBox="0 0 16 10"><path d="M4 .8 H15 M4 4.8 H15 M4 8.8 H15" stroke="#4a5f76" stroke-width="1.2"/><path d="M0 .8 H2 M0 4.8 H2 M0 8.8 H2" stroke="#4a5f76" stroke-width="1.2"/></svg><div class="" style="left:151.0px;top:463.9px;width:394.2px;height:22.1px;background:#1d2632;border-radius:3.5px;"></div><div class="" style="left:479.5px;top:463.9px;width:65.7px;height:22.1px;background:#2a343f;border-radius:0px;border-radius:0 3.5px 3.5px 0;"></div><span class="t" style="left:151.0px;width:65.7px;text-align:center;top:469.7px;font-size:11.4px;color:#8090a0;">Angle</span><div class="" style="left:216.2px;top:463.9px;width:1px;height:22.1px;background:#151c26;"></div><span class="t" style="left:216.7px;width:65.7px;text-align:center;top:469.7px;font-size:11.4px;color:#8090a0;">Left</span><div class="" style="left:281.9px;top:463.9px;width:1px;height:22.1px;background:#151c26;"></div><span class="t" style="left:282.4px;width:65.7px;text-align:center;top:469.7px;font-size:11.4px;color:#8090a0;">Top</span><div class="" style="left:347.6px;top:463.9px;width:1px;height:22.1px;background:#151c26;"></div><span class="t" style="left:348.1px;width:65.7px;text-align:center;top:469.7px;font-size:11.4px;color:#8090a0;">Right</span><div class="" style="left:413.3px;top:463.9px;width:1px;height:22.1px;background:#151c26;"></div><span class="t" style="left:413.8px;width:65.7px;text-align:center;top:469.7px;font-size:11.4px;color:#8090a0;">Back</span><div class="" style="left:479.0px;top:463.9px;width:1px;height:22.1px;background:#151c26;"></div><span class="t" style="left:479.5px;width:65.7px;text-align:center;top:469.7px;font-size:11.4px;color:#c9d2dc;">Custom</span><span class="t" style="left:0;width:696.2px;text-align:center;top:508.7px;font-size:15.4px;color:#ededed;">Dolby Atmos</span><svg style="left:-568.2px;top:-134.7px" width="1286" height="804"><defs><radialGradient id="hal"><stop offset="0" stop-color="#1f6fc0" stop-opacity=".02"/><stop offset=".72" stop-color="#1f6fc0" stop-opacity=".035"/><stop offset=".86" stop-color="#2474c8" stop-opacity=".1"/><stop offset=".95" stop-color="#2a7fd2" stop-opacity=".15"/><stop offset="1" stop-color="#2a7fd2" stop-opacity="0"/></radialGradient><radialGradient id="dot"><stop offset="0" stop-color="#1979d0"/><stop offset=".7" stop-color="#1979d0"/><stop offset="1" stop-color="#3f9ff2"/></radialGradient></defs><path d="M764.6 429.5 L965.4 376.6 L1079.9 495.8 L854.8 566.7 Z" fill="rgba(160,175,195,.085)" /><path d="M753.7 300.4 L968.3 252.4 L965.4 376.6 L764.6 429.5 Z" fill="rgba(160,175,195,.17)" /><path d="M968.3 252.4 L1092.0 359.8 L1079.9 495.8 L965.4 376.6 Z" fill="rgba(160,175,195,.085)" /><path d="M817.3 415.6 L914.3 548.0 M784.7 460.0 L991.1 403.3 M868.2 402.2 L971.6 529.9 M806.3 492.9 L1018.6 432.0 M917.6 389.2 L1026.7 512.5 M829.6 528.3 L1048.1 462.7 " fill="none" stroke="#4d5762" stroke-width=".9" opacity=".8"/><circle cx="767.6" cy="362.2" r="47" fill="url(#hal)"/><circle cx="767.6" cy="362.2" r="44.6" fill="none" stroke="#2f7fd0" stroke-opacity=".22" stroke-width="1" stroke-dasharray=".8 1.4"/><circle cx="768.9" cy="402.7" r="40" fill="url(#hal)"/><circle cx="768.9" cy="402.7" r="38.0" fill="none" stroke="#2f7fd0" stroke-opacity=".22" stroke-width="1" stroke-dasharray=".8 1.4"/><circle cx="964" cy="313" r="44" fill="url(#hal)"/><circle cx="964" cy="313" r="41.8" fill="none" stroke="#2f7fd0" stroke-opacity=".22" stroke-width="1" stroke-dasharray=".8 1.4"/><circle cx="964" cy="352.9" r="37" fill="url(#hal)"/><circle cx="964" cy="352.9" r="35.1" fill="none" stroke="#2f7fd0" stroke-opacity=".22" stroke-width="1" stroke-dasharray=".8 1.4"/><circle cx="880.8" cy="391.1" r="18.5" fill="url(#hal)"/><circle cx="880.8" cy="391.1" r="17.6" fill="none" stroke="#2f7fd0" stroke-opacity=".22" stroke-width="1" stroke-dasharray=".8 1.4"/><circle cx="861.1" cy="416.1" r="18.5" fill="url(#hal)"/><circle cx="861.1" cy="416.1" r="17.6" fill="none" stroke="#2f7fd0" stroke-opacity=".22" stroke-width="1" stroke-dasharray=".8 1.4"/><circle cx="937.2" cy="383.3" r="18" fill="url(#hal)"/><circle cx="937.2" cy="383.3" r="17.1" fill="none" stroke="#2f7fd0" stroke-opacity=".22" stroke-width="1" stroke-dasharray=".8 1.4"/><circle cx="934.2" cy="397.4" r="18" fill="url(#hal)"/><circle cx="934.2" cy="397.4" r="17.1" fill="none" stroke="#2f7fd0" stroke-opacity=".22" stroke-width="1" stroke-dasharray=".8 1.4"/><circle cx="1011.9" cy="454.6" r="28.7" fill="url(#hal)"/><circle cx="1011.9" cy="454.6" r="27.3" fill="none" stroke="#2f7fd0" stroke-opacity=".22" stroke-width="1" stroke-dasharray=".8 1.4"/><circle cx="876.3" cy="490.2" r="29.5" fill="url(#hal)"/><circle cx="876.3" cy="490.2" r="28.0" fill="none" stroke="#2f7fd0" stroke-opacity=".22" stroke-width="1" stroke-dasharray=".8 1.4"/><path d="M753.7 300.4 L968.3 252.4 M968.3 252.4 L1092.0 359.8 M1092.0 359.8 L849.5 427.0 M849.5 427.0 L753.7 300.4 M764.6 429.5 L965.4 376.6 M965.4 376.6 L1079.9 495.8 M1079.9 495.8 L854.8 566.7 M854.8 566.7 L764.6 429.5 M753.7 300.4 L764.6 429.5 M968.3 252.4 L965.4 376.6 M1092.0 359.8 L1079.9 495.8 M849.5 427.0 L854.8 566.7" fill="none" stroke="#68717b" stroke-width="1" stroke-linecap="round"/><path d="M916 416.8 C922.5 416.8 926.8 421.5 926.6 428.5 C926.5 433 925 436.5 924 439 C923.6 441.5 924.4 443.5 926 444.6 C930 446.8 935.5 449 937.8 451.8 C933 455.5 925 459.5 916 462 C909 463.8 902 463.8 900 462 C900.5 458 904 452 908.5 446.5 C910.4 444 910.6 441.6 909.6 439.4 C907 436 905.6 432 905.8 427.6 C906 421 910 416.8 916 416.8 Z" fill="#4a5561"/><path d="M916 416.8 C922.5 416.8 926.8 421.5 926.6 428.5 C926.5 433 925 436.5 924 439 C918 437 913 431 912 424 C911.8 420 913.5 417.5 916 416.8 Z" fill="#56616d" opacity=".3"/><circle cx="789.3" cy="339.6" r="6.1" fill="url(#dot)"/><circle cx="767.6" cy="362.2" r="6.1" fill="url(#dot)"/><circle cx="768.9" cy="402.7" r="6.1" fill="url(#dot)"/><circle cx="880.8" cy="391.1" r="6.1" fill="url(#dot)"/><circle cx="861.1" cy="416.1" r="6.1" fill="url(#dot)"/><circle cx="964" cy="302.3" r="6.1" fill="url(#dot)"/><circle cx="964" cy="314.2" r="6.1" fill="url(#dot)"/><circle cx="964" cy="352.9" r="6.1" fill="url(#dot)"/><circle cx="937.2" cy="383.3" r="6.1" fill="url(#dot)"/><circle cx="934.2" cy="397.4" r="6.1" fill="url(#dot)"/><circle cx="1011.9" cy="454.6" r="6.1" fill="url(#dot)"/><circle cx="876.3" cy="490.2" r="6.1" fill="url(#dot)"/></svg>
</div></div>
</div>
</body></html>
